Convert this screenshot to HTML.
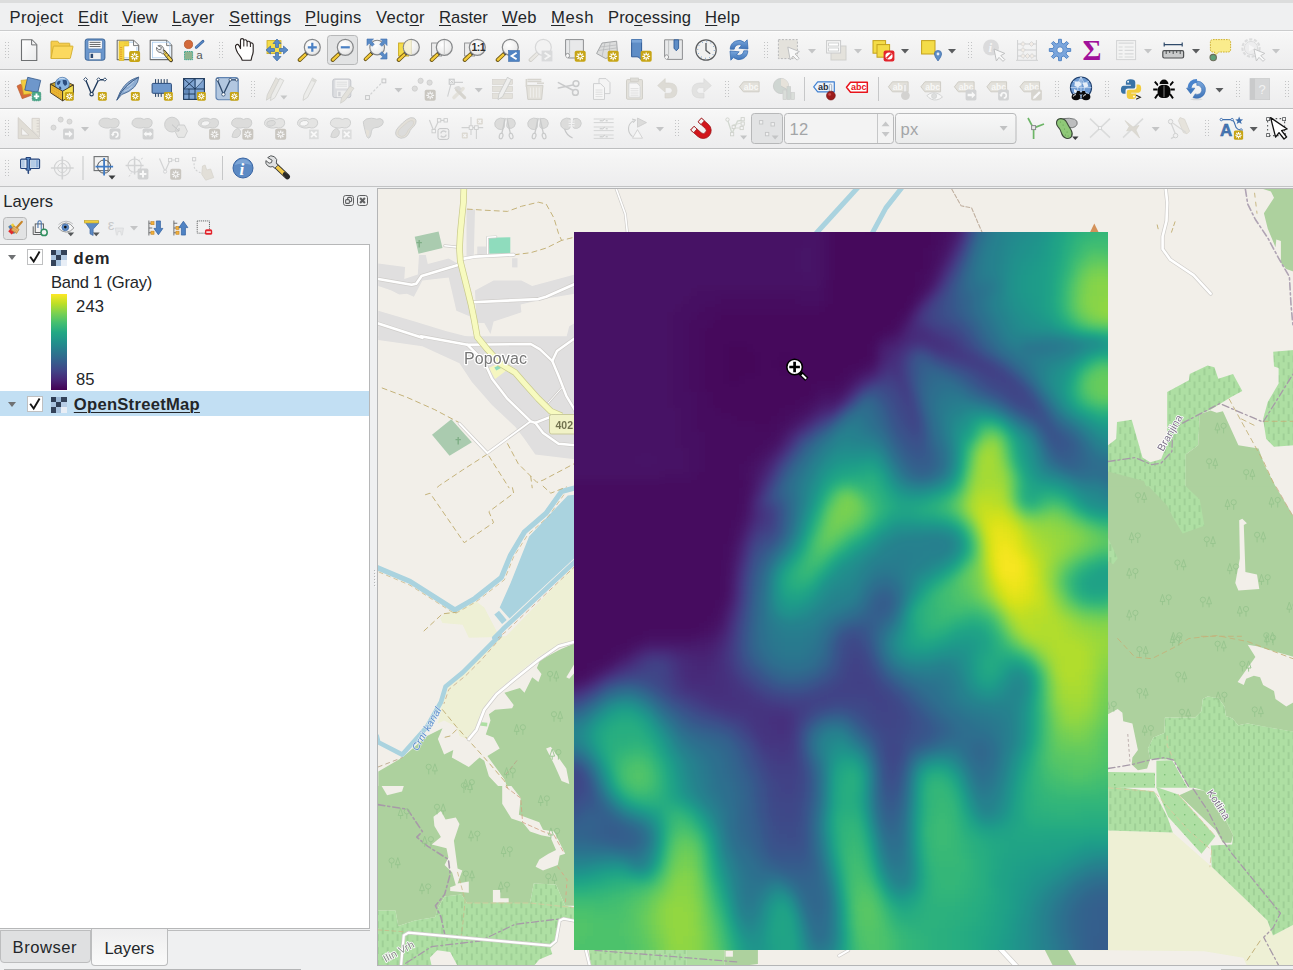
<!DOCTYPE html>
<html lang="en"><head><meta charset="utf-8"><title>QGIS</title>
<style>
*{box-sizing:border-box;margin:0;padding:0}
html,body{width:1293px;height:970px;overflow:hidden}
body{position:relative;background:#eff0f1;font-family:"Liberation Sans","DejaVu Sans",sans-serif;font-size:16.6px;color:#232629}
.abs{position:absolute}
#topstrip{position:absolute;left:0;top:0;width:1293px;height:3px;background:#dcdddd}
#menubar{position:absolute;left:0;top:3px;width:1293px;height:27px;background:#eff0f1}
#menubar span{position:absolute;top:4px;height:22px;line-height:22px;white-space:nowrap}
#menubar u{text-decoration:underline;text-underline-offset:2px;text-decoration-thickness:1px}
.tb{position:absolute;left:0;width:1293px;background:linear-gradient(#f8f8f8,#f4f4f4 30%,#ededee);border-top:1px solid #bdbebf;box-shadow:inset 0 1px 0 #fcfcfc}
#map{position:absolute;left:377px;top:188px;width:916px;height:778px;border-left:1px solid #b4b5b6;border-top:1px solid #b4b5b6;border-bottom:1px solid #b4b5b6;background:#f2efe9;overflow:hidden}
#map svg{display:block}
#tree{position:absolute;left:-1px;top:244px;width:371px;height:685px;border:1px solid #b6b7b8;background:#fff;overflow:hidden}
#tree .row{position:absolute;left:0;width:369px;height:24px}
#tree .row b,#tree .row span{position:absolute;top:4px;line-height:20px;white-space:nowrap}
#tree .row.sel{background:#c2dff3}
#tree .row.sel b{margin-top:0}#tree .row.sel .arr,#tree .row.sel .cb,#tree .row.sel .ras{margin-top:1px}
.arr{position:absolute;left:8px;top:10px;width:0;height:0;border-left:4.5px solid transparent;border-right:4.5px solid transparent;border-top:5px solid #6f7173}
.cb{position:absolute;left:27px;top:4px;width:16px;height:16px;border:1px solid #bfc0c1;background:#fff}
.cb svg{position:absolute;left:-1px;top:-1px}
.ras{position:absolute;left:51px;top:5px;width:16px;height:16px;background:
 linear-gradient(#2f3e55,#2f3e55) 0 0/5px 5px no-repeat,
 linear-gradient(#9bb8d6,#9bb8d6) 5px 0/5px 5px no-repeat,
 linear-gradient(#34435a,#34435a) 10px 0/6px 5px no-repeat,
 linear-gradient(#a9c3de,#a9c3de) 0 5px/5px 5px no-repeat,
 linear-gradient(#2f3e55,#2f3e55) 5px 5px/5px 5px no-repeat,
 linear-gradient(#b7cde5,#b7cde5) 10px 5px/6px 5px no-repeat,
 linear-gradient(#34435a,#34435a) 0 10px/5px 6px no-repeat,
 linear-gradient(#a9c3de,#a9c3de) 5px 10px/5px 6px no-repeat,
 linear-gradient(#e8eef6,#e8eef6) 10px 10px/6px 6px no-repeat}
#ramp{left:51px;top:49px;width:16px;height:96px;background:linear-gradient(#fde725,#bddf26 10%,#7ad151 20%,#44bf70 30%,#22a884 40%,#21918c 50%,#2a788e 60%,#355f8d 70%,#414487 80%,#482475 90%,#440154)}
.tab{border:1px solid #bcbdbe}
.tab span{position:absolute;line-height:20px;white-space:nowrap}

</style></head>
<body>
<div id="topstrip"></div>
<div id="menubar">
<span style="left:9.6px;letter-spacing:.3px">Pro<u>j</u>ect</span>
<span style="left:78px;letter-spacing:.4px"><u>E</u>dit</span>
<span style="left:122px;letter-spacing:0px"><u>V</u>iew</span>
<span style="left:172px;letter-spacing:.2px"><u>L</u>ayer</span>
<span style="left:229px;letter-spacing:.3px"><u>S</u>ettings</span>
<span style="left:305px;letter-spacing:.3px"><u>P</u>lugins</span>
<span style="left:376px;letter-spacing:.3px">Vect<u>o</u>r</span>
<span style="left:439px;letter-spacing:0px"><u>R</u>aster</span>
<span style="left:502px;letter-spacing:.3px"><u>W</u>eb</span>
<span style="left:551px;letter-spacing:.6px"><u>M</u>esh</span>
<span style="left:608px;letter-spacing:.1px">Pro<u>c</u>essing</span>
<span style="left:705px;letter-spacing:.3px"><u>H</u>elp</span>
</div>
<div class="tb" style="top:30px;height:39px;border-top-color:#cbcccd"></div>
<div class="tb" style="top:69px;height:39px"></div>
<div class="tb" style="top:108px;height:40px"></div>
<div class="tb" style="top:148px;height:39px;border-bottom:1px solid #c2c3c4"></div>

<svg class="abs" style="left:0;top:0" width="1293" height="250" viewBox="0 0 1293 250"><defs>
<radialGradient id="gl" cx=".4" cy=".35" r=".75"><stop offset="0" stop-color="#ffffff"/><stop offset=".7" stop-color="#ececec"/><stop offset="1" stop-color="#cfcfcf"/></radialGradient>
<linearGradient id="bl" x1="0" y1="0" x2="0" y2="1"><stop offset="0" stop-color="#7aa7dc"/><stop offset="1" stop-color="#3f74b8"/></linearGradient>
<linearGradient id="pg" x1="0" y1="0" x2="1" y2="1"><stop offset="0" stop-color="#ffffff"/><stop offset="1" stop-color="#e9eaeb"/></linearGradient>
<g id="hd" fill="#c3c4c5"><rect x="0" y="0" width="1" height="1"/><rect x="3" y="0" width="1" height="1"/><rect x="0" y="3" width="1" height="1"/><rect x="3" y="3" width="1" height="1"/><rect x="0" y="6" width="1" height="1"/><rect x="3" y="6" width="1" height="1"/><rect x="0" y="9" width="1" height="1"/><rect x="3" y="9" width="1" height="1"/><rect x="0" y="12" width="1" height="1"/><rect x="3" y="12" width="1" height="1"/><rect x="0" y="15" width="1" height="1"/><rect x="3" y="15" width="1" height="1"/></g>
<g id="star"><rect x="0" y="0" width="11" height="11" rx="1.8" fill="#c7a516"/><path d="M5.5 1.6v7.8M1.6 5.5h7.8M2.8 2.8l5.4 5.4M8.2 2.8l-5.4 5.4" stroke="#fff" stroke-width="1.3" fill="none"/><circle cx="5.5" cy="5.5" r="1.3" fill="#c7a516"/></g>
<g id="stard"><rect x="0" y="0" width="11" height="11" rx="1.8" fill="#c9c6c0"/><path d="M5.5 1.6v7.8M1.6 5.5h7.8M2.8 2.8l5.4 5.4M8.2 2.8l-5.4 5.4" stroke="#f4f4f4" stroke-width="1.3" fill="none"/><circle cx="5.5" cy="5.5" r="1.3" fill="#c9c6c0"/></g>
<g id="mag"><path d="M8.6 15.4L1.6 22" stroke="#6b5514" stroke-width="4" stroke-linecap="round"/><path d="M8.2 15.8L1.8 21.8" stroke="#f3cb3a" stroke-width="2.4" stroke-linecap="round"/><path d="M9.6 14.4l-1.6 1.6" stroke="#222" stroke-width="3.2"/><circle cx="14.3" cy="9.3" r="8" fill="url(#gl)" stroke="#858789" stroke-width="1.2"/></g>
<g id="magd" opacity=".55"><path d="M8.6 15.4L1.6 22" stroke="#b9b6ae" stroke-width="4" stroke-linecap="round"/><path d="M8.2 15.8L1.8 21.8" stroke="#e4e1d8" stroke-width="2.4" stroke-linecap="round"/><circle cx="14.3" cy="9.3" r="8" fill="#f2f2f2" stroke="#c0c1c2" stroke-width="1.2"/></g>
</defs>
<use href="#hd" x="5" y="42"/>
<g transform="translate(17 38)"><path d="M4.5 1.7h10.3l5 5v15.8h-15.3z" fill="url(#pg)" stroke="#6e7072" stroke-width="1.1" stroke-linejoin="round"/><path d="M14.6 1.9v5h5" fill="#f4f4f4" stroke="#6e7072" stroke-width="1"/></g>
<g transform="translate(50 38)"><path d="M1 20.4V3.7q0-.5 .5-.5h6q.4 0 .6 .4l.8 1.600000000000001h10.4q.5 0 .5 .5v3" fill="#f6cd4c" stroke="#d2ad2c" stroke-width=".9" stroke-linejoin="round"/><path d="M1 20.5l2.300000000000001-11.9q.1-.5 .6-.5h18.6q.6 0 .5 .6l-2.6 11.3q-.1 .5-.6 .5z" fill="#fbd95f" stroke="#d2ad2c" stroke-width=".9" stroke-linejoin="round"/></g>
<g transform="translate(83 38)"><rect x="2.2" y="1" width="19.7" height="21.2" rx="2.2" fill="#6b97cd" stroke="#3b6496" stroke-width="1"/><rect x="5.1" y="2.4" width="14.1" height="8.5" fill="#f8f8f8" stroke="#4a72a6" stroke-width=".5"/><path d="M6.6 4.4h10.9M6.6 6.5h10.9M6.6 8.5h10.9" stroke="#5a5c5e" stroke-width=".9"/><rect x="6.1" y="14.6" width="11.9" height="7" fill="#f0f0f0" stroke="#4a72a6" stroke-width=".5"/><rect x="7.6" y="15.8" width="2.5" height="4.2" fill="#2d4a72"/></g>
<g transform="translate(116 38)"><path d="M1.2 2.3h16.4l5.1 5.2v14.1h-21.5z" fill="#fff" stroke="#6e7072" stroke-width="1.1" stroke-linejoin="round"/><path d="M17.5 2.5v5.1h5.1" fill="#f4f4f4" stroke="#6e7072" stroke-width=".9"/><path d="M8 4.2h9M20.900000000000002 9v10.8H8" fill="none" stroke="#9cc3ea" stroke-width=".8"/><path d="M3 3.4h9.700000000000001v4.5h-4.800000000000001v14.5h-4.9z" fill="#f5d540" stroke="#d9b521" stroke-width=".7"/><path d="M4 9.600000000000001h2.2M4 11.8h2.2M4 14h2.2M4 16.2h2.2M4 18.4h2.2M4 20.6h2.2" stroke="#e08a2a" stroke-width=".8"/><path d="M9 4.6v1.600000000000001M10.8 4.6v1.600000000000001" stroke="#e6c23a" stroke-width=".8"/><use href="#star" x="13.1" y="13.1"/></g>
<g transform="translate(149 38)"><path d="M1.2 2.3h16.4l5.2 5.2v14.1h-21.6z" fill="#fff" stroke="#6e7072" stroke-width="1.1" stroke-linejoin="round"/><path d="M17.6 2.5v5.1h5.1" fill="#f4f4f4" stroke="#6e7072" stroke-width=".9"/><rect x="3.5" y="4.2" width="17.4" height="15.6" fill="none" stroke="#a9cbee" stroke-width=".8"/><path d="M14.6 13.600000000000001l7.4 8.6" stroke="#3a3320" stroke-width="3.8" stroke-linecap="round"/><path d="M14.8 13.8l7 8.200000000000001" stroke="#f2d04e" stroke-width="2.4" stroke-linecap="round"/><path d="M16.4 15.8l1.600000000000001-1.4M18.400000000000002 18.200000000000003l1.600000000000001-1.4" stroke="#3a3320" stroke-width=".8"/><path d="M8.4 8.200000000000001a4 4 0 0 1 6.2 4.2l1.4 1.600000000000001-2 1.8-1.4-1.4a4 4 0 0 1-5.2-4.4l2.4 2 2-.6.4-2z" fill="#e6e7e8" stroke="#77797b" stroke-width=".9" transform="rotate(8 12 11)"/></g>
<g transform="translate(182 38)"><circle cx="6.5" cy="6.4" r="4.1" fill="#d36a3b" stroke="#b3552a" stroke-width=".8"/><path d="M14.2 9.4l6.8-6.1" stroke="#2f5a94" stroke-width="2.7" stroke-linecap="round"/><path d="M14.2 9.4l6.8-6.1" stroke="#5a8bc8" stroke-width="1.5" stroke-linecap="round"/><rect x="2.5" y="13.5" width="8.1" height="8.2" fill="#8fb38f" stroke="#2fa08a" stroke-width=".9" stroke-dasharray="1.4 .8"/><text x="14.2" y="21" font-size="11.6" font-family="Liberation Sans, sans-serif" fill="#55585a">a</text></g>
<use href="#hd" x="219" y="42"/>
<g transform="translate(232 38)"><path d="M8.5 10.6V2Q8.5 .6 10.1 .6Q11.8 .6 11.8 2.2Q12.2 1.7 13.4 1.8Q15.1 2 15.1 3.6Q15.7 3.1 16.8 3.3Q18.4 3.7 18.4 5.2Q19 4.7 20 5Q21.2 5.5 21.2 6.8V13.6Q21 16 20 18.2L19.1 22.2H10.2L9.2 19.8Q7 16.6 5.8 15Q4.4 12.6 3.6 9.6Q3 7.6 4.6 6.6Q6 6 7 7.6Z" fill="#fff" stroke="#2b2524" stroke-width="1.15" stroke-linejoin="round"/><path d="M11.8 2.2v6.4M15.1 3.6v5M18.4 5.2v3.8" stroke="#2b2524" stroke-width="1.05" fill="none"/></g>
<g transform="translate(265 38)"><rect x="2" y="2.6" width="14" height="13" fill="#f4dc48" stroke="#c9a820" stroke-width=".8"/><g fill="#5a8bc6" stroke="#3c6ca8" stroke-width=".7" stroke-linejoin="round"><path d="M12 1l4 4.5h-2.5v4h-3v-4h-2.5z"/><path d="M12 23l4-4.5h-2.5v-4h-3v4h-2.5z"/><path d="M1 12l4.5-4v2.5h4v3h-4v2.5z"/><path d="M23 12l-4.5-4v2.5h-4v3h4v2.5z"/></g></g>
<g transform="translate(298 38)"><use href="#mag"/><path d="M14.3 4.8v9M9.8 9.3h9" stroke="#4a80c4" stroke-width="2.2"/></g>
<rect x="327.5" y="35.5" width="30" height="29" rx="3" fill="#e2e3e4" stroke="#b7b8b9"/>
<g transform="translate(331 38)"><use href="#mag"/><path d="M9.8 9.3h9" stroke="#4a80c4" stroke-width="2.2"/></g>
<g transform="translate(364 38)"><use href="#mag" transform="translate(0 1) scale(.92)"/><g fill="#5a8bc6" stroke="#3f6fae" stroke-width=".6"><path d="M3 1h6.5l-2.2 2.2 3 3-2.1 2.1-3-3-2.2 2.2z"/><path d="M23 1v6.5l-2.2-2.2-3 3-2.1-2.1 3-3-2.2-2.2z"/><path d="M23 21h-6.5l2.2-2.2-3-3 2.1-2.1 3 3 2.2-2.2z"/></g></g>
<g transform="translate(397 38)"><rect x="1.6" y="5" width="10" height="13" fill="#f4dc48" stroke="#c9a820" stroke-width=".9"/><use href="#mag"/><path d="M14.3 2v14.6" stroke="#d9d4b8" stroke-width="1"/><path d="M14.3 1.8a7.5 7.5 0 0 0 0 15z" fill="#f2ecc4" opacity=".7"/></g>
<g transform="translate(430 38)"><rect x="1.6" y="5" width="10" height="13" fill="#ececec" stroke="#8a8c8e" stroke-width=".9"/><use href="#mag"/><path d="M14.3 2v14.6" stroke="#c8c8c8" stroke-width="1"/></g>
<g transform="translate(463 38)"><rect x="1.6" y="5" width="10" height="13" fill="#ececec" stroke="#8a8c8e" stroke-width=".9"/><use href="#mag"/><text x="8.6" y="13.3" font-size="10.5" font-weight="700" font-family="Liberation Sans, sans-serif" fill="#2c2c2c" letter-spacing="-.6">1:1</text></g>
<g transform="translate(496 38)"><use href="#mag"/><rect x="12.6" y="12.6" width="10.8" height="10.8" fill="#4f83c2" stroke="#3a6aa8" stroke-width=".6"/><path d="M20.6 14.8l-5 3.2 5 3.2" fill="none" stroke="#fff" stroke-width="1.9"/></g>
<g transform="translate(529 38)"><use href="#magd"/><rect x="12.6" y="12.6" width="10.8" height="10.8" fill="#d9dadb"/><path d="M15.6 14.8l5 3.2-5 3.2" fill="none" stroke="#f4f4f4" stroke-width="1.9"/></g>
<g transform="translate(562 38)"><path d="M3.6 1.6h17.8v18.4h-14.4q-3.4 0-3.4-3z" fill="#e8e9ea" stroke="#8d8f91" stroke-width="1"/><path d="M3.6 17.6q0-2.2 2-2.2t2 2.2-2 2.4" fill="#f6f6f6" stroke="#8d8f91" stroke-width=".9"/><path d="M7.6 1.6v14" stroke="#b4b6b8" stroke-width=".8"/><use href="#star" x="12.7" y="12.8"/></g>
<g transform="translate(595 38)"><path d="M1.6 15.5l5.5-10.5 14.5-1.8 1 13.3-12 4z" fill="#dcdddd" stroke="#9b9d9f" stroke-width=".9"/><path d="M5 9l16-2M3.4 12.5l18.4-2.6M10 4.6l-3 14M15 4l-1 14" stroke="#b4b6b8" stroke-width=".7" fill="none"/><use href="#star" x="12.7" y="12.8"/></g>
<g transform="translate(628 38)"><path d="M3.6 1.6h10v20.4l-2.4-2.2q-1-1-2.2-1h-5.4z" fill="#5e8dc6" stroke="#2f5c98" stroke-width="1"/><path d="M3.6 1.6h10v3h-10z" fill="#7aa5d8"/><use href="#star" x="12.7" y="12.8"/></g>
<g transform="translate(661 38)"><path d="M3.6 1.8h17.8v19.6h-14.4q-3.4 0-3.4-3z" fill="#e8e9ea" stroke="#8d8f91" stroke-width="1"/><path d="M3.6 19q0-2.2 2-2.2t2 2.2-2 2.4" fill="#f6f6f6" stroke="#8d8f91" stroke-width=".9"/><path d="M7.6 1.8v15" stroke="#b4b6b8" stroke-width=".8"/><path d="M13 1.8h4.6v8.4l-2.3 2.6-2.3-2.6z" fill="#5e8dc6" stroke="#2f5c98" stroke-width=".9"/></g>
<g transform="translate(694 38)"><circle cx="12" cy="12" r="10.2" fill="#f1f1f0" stroke="#5b5d5f" stroke-width="1.2"/><circle cx="12" cy="12" r="8.3" fill="none" stroke="#5a8bc6" stroke-width="1" stroke-dasharray=".9 3.45"/><path d="M12 5v7.4l4.2 3.4" fill="none" stroke="#55585a" stroke-width="1.3"/></g>
<g transform="translate(727 38)"><path d="M3.2 11.2a8.8 8.8 0 0 1 14.4-6.8l2.6-2.6.8 9.2-9.2-.8 2.8-2.8a4.8 4.8 0 0 0-7.4 3.8z" fill="url(#bl)" stroke="#2f66ae" stroke-width=".7"/><path d="M20.8 12.8a8.8 8.8 0 0 1-14.4 6.8l-2.6 2.6-.8-9.2 9.2.8-2.8 2.8a4.8 4.8 0 0 0 7.4-3.8z" fill="url(#bl)" stroke="#2f66ae" stroke-width=".7"/></g>
<use href="#hd" x="764" y="42"/>
<g transform="translate(776.8 37)"><rect x="1.6" y="2.6" width="19" height="19" fill="#e4e2dc" stroke="#b8b9ba" stroke-width="1" stroke-dasharray="2 1.5"/><path d="M11 10l2.4 13 2.8-4 4.2 4.2 2-2-4.2-4.2 4.4-2.4z" fill="#f8f8f8" stroke="#c0c1c2" stroke-width="1"/></g>
<path d="M808 49h8l-4 4.6z" fill="#c4c5c6"/>
<g transform="translate(824 38)"><rect x="7" y="8" width="15" height="14" fill="#e4e2dc" stroke="#d0d0cd" stroke-width="1"/><rect x="2.6" y="2.6" width="14" height="12.4" fill="#f6f6f6" stroke="#c9cacb" stroke-width="1"/><rect x="4.6" y="5" width="10" height="3" fill="#fff" stroke="#c9cacb" stroke-width=".8"/><rect x="4.6" y="10" width="10" height="3" fill="#fff" stroke="#c9cacb" stroke-width=".8"/></g>
<path d="M854 49h8l-4 4.6z" fill="#c4c5c6"/>
<g transform="translate(871 38)"><rect x="2" y="2.6" width="12.6" height="12.6" fill="#f4dc48" stroke="#c4a21c" stroke-width="1"/><rect x="6" y="6.6" width="12.6" height="12.6" fill="#f4dc48" stroke="#c4a21c" stroke-width="1"/><rect x="12.6" y="12.6" width="10.8" height="10.8" rx="2" fill="#e2242c"/><circle cx="18" cy="18" r="3.6" fill="#fff"/><path d="M15.6 20.4l4.8-4.8" stroke="#e2242c" stroke-width="1.6"/></g>
<path d="M901 49h8l-4 4.6z" fill="#5a5c5e"/>
<g transform="translate(919 38)"><rect x="2.6" y="2.6" width="13.4" height="13.4" fill="#f4dc48" stroke="#c4a21c" stroke-width="1"/><path d="M19 23q-3.6-4.6-3.6-7a3.6 3.6 0 0 1 7.2 0q0 2.4-3.6 7z" fill="#5e8dc6" stroke="#3d6ca8" stroke-width=".7"/><circle cx="19" cy="16" r="1.4" fill="#e8eef6"/></g>
<path d="M948 49h8l-4 4.6z" fill="#5a5c5e"/>
<use href="#hd" x="968" y="42"/>
<g transform="translate(981 38)"><circle cx="10" cy="9.5" r="8" fill="#d4d5d6" opacity=".8"/><text x="7.6" y="14" font-size="13" font-style="italic" font-weight="700" font-family="Liberation Serif, serif" fill="#f4f4f4">i</text><path d="M13 11l2.4 12 2.6-3.6 4 4 1.8-1.8-4-4 4-2.2z" fill="#f8f8f8" stroke="#c0c1c2" stroke-width="1"/></g>
<g transform="translate(1015 38)"><g fill="none" stroke="#cfd0d1" stroke-width="1"><path d="M2.6 2v20M21.4 2v20M1 22.3h22M2.6 6h18.8M2.6 12h18.8M2.6 18h18.8"/></g><g fill="#f2ece6" stroke="#cfd0d1" stroke-width=".8"><path d="M8 3.6l2.4 2.4-2.4 2.4-2.4-2.4zM16.5 3.6l2.4 2.4-2.4 2.4-2.4-2.4zM8 9.6l2.4 2.4-2.4 2.4-2.4-2.4zM12.5 15.6l2.4 2.4-2.4 2.4-2.4-2.4zM8 15.6l2.4 2.4-2.4 2.4-2.4-2.4zM17 15.6l2.4 2.4-2.4 2.4-2.4-2.4z"/></g></g>
<g transform="translate(1048 38)"><path d="M10.5 5.0L10.6 1.3L13.4 1.3L13.5 5.0L15.9 6.0L18.6 3.4L20.6 5.4L18.0 8.1L19.0 10.5L22.7 10.6L22.7 13.4L19.0 13.5L18.0 15.9L20.6 18.6L18.6 20.6L15.9 18.0L13.5 19.0L13.4 22.7L10.6 22.7L10.5 19.0L8.1 18.0L5.4 20.6L3.4 18.6L6.0 15.9L5.0 13.5L1.3 13.4L1.3 10.6L5.0 10.5L6.0 8.1L3.4 5.4L5.4 3.4L8.1 6.0Z" fill="#7aa5dc" stroke="#4a7fc2" stroke-width=".9" stroke-linejoin="round"/><circle cx="12" cy="12" r="3.2" fill="#f4f5f6" stroke="#4a7fc2" stroke-width=".9"/></g>
<g transform="translate(1081 38)"><text x="1.6" y="22.2" font-size="29" font-family="Liberation Serif, serif" font-weight="700" fill="#a0109a">&#931;</text></g>
<g transform="translate(1114 38)"><rect x="2.6" y="2.6" width="19" height="19" fill="#f3f3f3" stroke="#d2d3d4" stroke-width="1"/><path d="M4.6 5.2h15M4.6 9h4M10.6 9h9M4.6 12.4h4M10.6 12.4h9M4.6 15.8h4M10.6 15.8h9M4.6 19h4M10.6 19h9" stroke="#d8d9da" stroke-width="1.2"/></g>
<path d="M1144 49h8l-4 4.6z" fill="#c4c5c6"/>
<g transform="translate(1161.2 38)"><path d="M3 4.6v4M21 4.6v4M3 6.6h18" stroke="#2f4a6a" stroke-width="1.2" fill="none"/><rect x="1.6" y="12.6" width="20.8" height="7.4" rx="1.4" fill="#c9cacb" stroke="#4e5052" stroke-width="1.2"/><path d="M5 12.6v3.4M8.5 12.6v2.4M12 12.6v3.4M15.5 12.6v2.4M19 12.6v3.4" stroke="#4e5052" stroke-width="1"/></g>
<path d="M1192 49h8l-4 4.6z" fill="#5a5c5e"/>
<g transform="translate(1208 38)"><path d="M5 1.6h15q2.6 0 2.6 2.6v7.2q0 2.6-2.6 2.6h-9.5l-4.2 4.4.4-4.4h-1.7q-2.6 0-2.6-2.6v-7.2q0-2.6 2.6-2.6z" fill="#faec8c" stroke="#cdb02e" stroke-width="1" stroke-dasharray="1.6 1"/><circle cx="5.2" cy="19.6" r="3.2" fill="#5fa079" stroke="#6b6d5a" stroke-width="1.1"/></g>
<g transform="translate(1241 38)"><g opacity=".55"><circle cx="10" cy="10" r="8.6" fill="none" stroke="#c9cacb" stroke-width="2.2" stroke-dasharray="3.2 1.6"/><circle cx="10" cy="10" r="6.6" fill="#e9e9ea" stroke="#c9cacb"/><path d="M8 6.6l5.4 3.4-5.4 3.4z" fill="#fafafa"/></g><path d="M13 11l2.4 12 2.6-3.6 4 4 1.8-1.8-4-4 4-2.2z" fill="#f8f8f8" stroke="#c6c7c8" stroke-width="1"/></g>
<path d="M1272 49h8l-4 4.6z" fill="#c4c5c6"/>
<use href="#hd" x="5" y="81"/>
<g transform="translate(17 77)"><path d="M0 9l3.8-1.900000000000001 10.600000000000001 11.200000000000001-9.200000000000001 3.4z" fill="#d56b3a" stroke="#b3552a" stroke-width=".6"/><path d="M4 3.4l7-.8 4 13.8-8.4 1.2z" fill="#f2cb3f" stroke="#c7a324" stroke-width=".6"/><path d="M10.700000000000001 .3l13 3.1-2.900000000000002 11.9-13-2.2z" fill="#6e97cb" stroke="#34598c" stroke-width=".8" stroke-linejoin="round"/><rect x="15.2" y="14.9" width="8.6" height="8.9" rx="1.4" fill="#4aa88a" stroke="#2a8a6a" stroke-width=".7" stroke-dasharray="1.2 .8"/><path d="M19.5 16.6v5.5M16.8 19.400000000000002h5.4" stroke="#fff" stroke-width="1.9"/></g>
<g transform="translate(50 77)"><path d="M.4 7.1l11.6-4.4 11.4 5.2-10.8 6.3z" fill="#caa22a" stroke="#3a3020" stroke-width=".8"/><circle cx="12.3" cy="7.3" r="7" fill="#8ab4e0" stroke="#4a74a8" stroke-width=".7"/><path d="M7.4 4.8q1.6-1.6 3.2-1l-.6 2.600000000000001-1.8 1.8-1.4-1.2zM12.6 3q2.600000000000001-.8 4.2 .8l.4 3.4-2.2 1.8-2-2.400000000000001zM8.8 9.4l2.2.4.4 2.400000000000001-1.8.4z" fill="#2c4d80"/><path d="M9 2q3-1.400000000000001 6 0" fill="none" stroke="#d9e8f7" stroke-width="1" opacity=".8"/><path d="M.4 7.1l12.2 7.1v9.6l-12.2-8.1z" fill="#e9b932" stroke="#3a3020" stroke-width=".9" stroke-linejoin="round"/><path d="M2.4 10.6l8.2 4.8M2.4 13.2l8.2 4.8M2.4 15.8l8.2 4.8" stroke="#e08a2a" stroke-width=".8" stroke-dasharray="1.2 1"/><path d="M12.6 14.2l10.8-6.3v9.6l-10.8 6.3z" fill="#f5e04e" stroke="#3a3020" stroke-width=".9" stroke-linejoin="round"/><use href="#star" transform="translate(14.9 14.9) scale(.81)"/></g>
<g transform="translate(83 77)"><path d="M2.6 2.7l6 14.5 7-14.5h6.300000000000001" fill="none" stroke="#1f3a5c" stroke-width="1.4" stroke-linejoin="round"/><path d="M2.6 .5l1.9 1.9-1.9 1.9-1.9-1.9z" fill="#fff" stroke="#1f3a5c" stroke-width=".9"/><path d="M15.6 .7l1.7 1.7-1.7 1.7-1.7-1.7z" fill="#fff" stroke="#1f3a5c" stroke-width=".9"/><path d="M21.900000000000002 .8l1.7 1.7-1.7 1.7-1.7-1.7z" fill="#fff" stroke="#1f3a5c" stroke-width=".9"/><circle cx="8.6" cy="17.2" r="1.7" fill="#fff" stroke="#1f3a5c" stroke-width="1.1"/><use href="#star" transform="translate(14.9 14.9) scale(.81)"/></g>
<g transform="translate(116 77)"><path d="M.8 23.2Q3.4 14.4 8.6 8.6Q14.6 2 22.7 .1Q22.5 5.2 18.4 10Q13.8 15 5.6 17.6Z" fill="#8eadd2" stroke="#4a6a94" stroke-width=".9" stroke-linejoin="round"/><path d="M.8 23.2Q5.2 13.4 11.6 8Q16.6 3.6 22.6 .2" fill="none" stroke="#35557f" stroke-width=".9"/><path d="M8 14.4q5-1.600000000000001 8.4-5.2M11 9.8q4-2 7-5.6" stroke="#c4d6ea" stroke-width=".8" fill="none"/><use href="#star" transform="translate(14.9 14.9) scale(.81)"/></g>
<g transform="translate(149 77)"><path d="M6.6 2.1v4.4M9.3 2.1v4.4M12.2 2.1v4.4M15.2 2.1v4.4M18.1 2.1v4.4M6.6 16.2v3.7M9.3 16.2v3.7M12.2 16.2v3.7" stroke="#1f3a5c" stroke-width="1"/><rect x="3.1" y="6.4" width="19.3" height="9.9" rx="1" fill="#6e97cb" stroke="#2a4a7a" stroke-width="1"/><use href="#star" transform="translate(14.9 14.9) scale(.81)"/></g>
<g transform="translate(182 77)"><rect x="1.6" y="1.6" width="20.8" height="20.8" fill="#7ea3d1" stroke="#1f3a5c" stroke-width="1.1"/><path d="M1.6 12h20.8M13 1.6v20.8M1.6 1.6l11.4 10.4M13 1.6l-11.4 10.4M13 12l9.4-10.4M7 12v10.4M1.6 17h11.4" stroke="#1f3a5c" stroke-width="1" fill="none"/><path d="M14 2.6l7.4 0-7.4 8.2z" fill="#a9c4e4"/><path d="M2.6 13h3.6v3.2h-3.6z" fill="#5f86b8"/><use href="#star" transform="translate(14.9 14.9) scale(.81)"/></g>
<g transform="translate(215 77)"><rect x="1" y=".6" width="22.2" height="22.1" rx="2.6" fill="#b2c7e0" stroke="#5f82b0" stroke-width="1.1"/><path d="M2.4 2.9l6 14.4 6.9-14.4h6.4" fill="none" stroke="#2f4a6c" stroke-width="1.3" stroke-linejoin="round"/><g fill="#fff" stroke="#2f4a6c" stroke-width=".8"><circle cx="2.600000000000001" cy="2.7" r="1.3"/><circle cx="15.3" cy="2.7" r="1.3"/><circle cx="21.6" cy="2.8" r="1.3"/><circle cx="8.4" cy="17.4" r="1.7"/></g><use href="#star" transform="translate(14.9 14.9) scale(.81)"/></g>
<use href="#hd" x="251" y="81"/>
<g transform="translate(265 77)"><path d="M11.4 1.4l3.4 1.6-8.8 17.2-4.6 3 .9-5.4 8.7-17.2z" fill="#e3e1db" stroke="#cfcfcc" stroke-width=".8" stroke-linejoin="round"/><path d="M15.4 1.8l3.4 1.6-8.8 17.2-4.6 3 .9-5.4 8.7-17.2z" fill="#ececea" stroke="#cfcfcc" stroke-width=".8" stroke-linejoin="round"/><path d="M15.4 18.6h7l-3.5 4z" fill="#c6c7c8"/></g>
<g transform="translate(298 77)"><path d="M15 1.6l3.4 1.6-8.8 17.2-4.6 3 .9-5.4 8.7-17.2z" fill="#ececea" stroke="#cfcfcc" stroke-width=".8" stroke-linejoin="round"/><path d="M15 1.6l3.4 1.6-1.2 2.4-3.4-1.6z" fill="#dcdcd8"/></g>
<g transform="translate(331 77)"><rect x="1.8" y="2" width="18" height="18.6" rx="2" fill="#dcdde0" stroke="#c4c6cb" stroke-width="1"/><rect x="4.4" y="3" width="12.8" height="8.4" fill="#f3f3f3"/><path d="M5.6 5.2h10.4M5.6 7.2h10.4M5.6 9.2h10.4" stroke="#dadbdc" stroke-width=".9"/><rect x="6" y="13.6" width="9.6" height="6.6" fill="#eeeeee"/><rect x="7.2" y="14.8" width="2.4" height="4.4" fill="#cfd0d4"/><path d="M19.6 9.6l3.4 1.6-8.8 12-4.6 3 .9-5.4 8.7-12z" fill="#e3e1db" stroke="#cfcfcc" stroke-width=".8" stroke-linejoin="round"/></g>
<g transform="translate(364 77)"><path d="M3.6 20.4L19.4 4" stroke="#d0d1d2" stroke-width="1.2" stroke-dasharray="2.4 1.8" fill="none"/><rect x="1.6" y="18.6" width="3.8" height="3.8" fill="#f2f2f2" stroke="#c6c7c8"/><rect x="18" y="2" width="3.8" height="3.8" fill="#f2f2f2" stroke="#c6c7c8"/></g>
<path d="M394.5 88h8l-4 4.6z" fill="#c4c5c6"/>
<g transform="translate(412 77)"><g fill="#dcdcdb" stroke="#cbcccb" stroke-width=".8"><circle cx="8.6" cy="3.8" r="2.6"/><circle cx="2.8" cy="11.6" r="2.6"/><circle cx="17.6" cy="5.6" r="2.6"/></g><use href="#stard" x="12.7" y="12.8"/></g>
<g transform="translate(445 77)"><path d="M2.6 19.6L6.4 5.4h11.6" fill="none" stroke="#cfd0d1" stroke-width="1.1"/><rect x="4.2" y="2.2" width="5" height="5" fill="#f4f4f4" stroke="#c4c5c6" stroke-width="1"/><path d="M5.4 3.4l2.6 2.6M8 3.4l-2.6 2.6" stroke="#c4c5c6" stroke-width=".9"/><path d="M9 20.6l9-9" stroke="#e3e1db" stroke-width="3.6" stroke-linecap="round"/><path d="M19.6 20.6l-8-8" stroke="#d6d4ce" stroke-width="3.2" stroke-linecap="round"/><path d="M8.6 11.6q2-3.2 5.4-2.6l2.8 2.8-2.6 2.6-2.4-2.2z" fill="#d9d9d8"/></g>
<path d="M474.7 88h8l-4 4.6z" fill="#c4c5c6"/>
<g transform="translate(491 77)"><g fill="#e3e1db" stroke="#d2d0ca" stroke-width=".6"><rect x="1.6" y="2.4" width="20" height="5"/><rect x="1.6" y="9.5" width="20" height="5"/><rect x="1.6" y="16.6" width="20" height="5"/></g><path d="M17 0.8l3.4 1.6-8.8 17.2-4.6 3 .9-5.4 8.7-17.2z" fill="#efefee" stroke="#c8c9c8" stroke-width=".8" stroke-linejoin="round"/></g>
<g transform="translate(523 77)"><path d="M4.4 2.4h14M4.4 4.4h14" stroke="#d6d4ce" stroke-width="1.5"/><path d="M14 6.2h7" stroke="#d6d4ce" stroke-width="1.4"/><path d="M3.4 8.4h16.6l-1.4 14h-13.8z" fill="#e3e1db" stroke="#d2d0ca" stroke-width="1"/><path d="M7.4 10.6v10M10.4 10.6v10M13.4 10.6v10M16.2 10.6v10" stroke="#f0efec" stroke-width="1"/><rect x="2.6" y="2" width="1.6" height="8" fill="#d6d4ce"/></g>
<g transform="translate(557 77)"><path d="M1.4 5.6l14 7.4M1.4 11l14.6-3" stroke="#c9cacb" stroke-width="1.6" stroke-linecap="round" fill="none"/><circle cx="19" cy="6.6" r="2.9" fill="none" stroke="#c9cacb" stroke-width="1.5"/><circle cx="18.4" cy="15.4" r="2.9" fill="none" stroke="#c9cacb" stroke-width="1.5"/></g>
<g transform="translate(589.5 77)"><path d="M9.5 1.6h7l4 4v11h-11z" fill="#f4f4f4" stroke="#cfd0d1" stroke-width="1"/><path d="M4 6.6h7l4 4v11.8h-11z" fill="#f6f6f6" stroke="#cfd0d1" stroke-width="1"/><path d="M6 13h7M6 15.2h7M6 17.4h7M6 19.6h7" stroke="#dcdddd" stroke-width=".9"/></g>
<g transform="translate(622.5 77)"><rect x="4" y="2.6" width="16" height="19.6" rx="1" fill="#e3e1db" stroke="#d0cfc9" stroke-width="1"/><rect x="8" y="1" width="8" height="3.6" fill="#dddcd7" stroke="#cfcec8" stroke-width=".7"/><path d="M6.4 6h8l3.2 3.2v11h-11.2z" fill="#f6f6f6" stroke="#d2d3d4" stroke-width=".8"/><path d="M8 11.6h8M8 13.8h8M8 16h8M8 18.2h8" stroke="#dcdddd" stroke-width=".9"/></g>
<g transform="translate(656 77)"><path d="M1.6 8.6l7.6-7v4.4h3.8q8 0 8 7.6 0 7.4-8 7.4h-4v-4.6h4.2q3 0 3-2.8 0-3-3-3h-4v4.6z" fill="#dddbd5" stroke="#d3d1cb" stroke-width=".6"/></g>
<g transform="translate(689 77)"><path d="M22.4 8.6l-7.6-7v4.4h-3.8q-8 0-8 7.6 0 7.4 8 7.4h4v-4.6h-4.2q-3 0-3-2.8 0-3 3-3h4v4.6z" fill="#e2e2e1" stroke="#d6d7d7" stroke-width=".6"/></g>
<use href="#hd" x="725" y="81"/>
<g transform="translate(737 77)"><g transform="translate(1.6 2.6)"><path d="M.8 7.2l4-5h15.7 v10h-15.7z" fill="#e3e1db" stroke="#cfcdc6" stroke-width="1" stroke-linejoin="round"/><text x="5.2" y="10.2" font-size="8.6" font-weight="700" font-family="Liberation Sans, sans-serif" fill="#f8f8f6">abc</text></g></g>
<g transform="translate(772 77)"><circle cx="9" cy="9" r="7.6" fill="#cfd6d2" stroke="#c7c9c8" stroke-width=".8"/><path d="M9 9V1.4a7.6 7.6 0 0 1 6.6 11.4z" fill="#e6e2da"/><path d="M9 9l6.6 3.8" stroke="#c7c9c8" stroke-width=".8"/><rect x="11" y="13" width="3.6" height="9.6" fill="#d9ddd9" stroke="#c9cbc9" stroke-width=".6"/><rect x="15" y="9.6" width="3.6" height="13" fill="#cfd6d2" stroke="#c9cbc9" stroke-width=".6"/><rect x="19" y="15.6" width="3.4" height="7" fill="#d9ddd9" stroke="#c9cbc9" stroke-width=".6"/></g>
<rect x="804" y="77" width="1" height="24" fill="#c6c7c8"/>
<g transform="translate(812.5 77)"><g transform="translate(.4 2.6)"><path d="M.8 7.2l4-5h16.6 v10h-16.6z" fill="#eef4fb" stroke="#3f7fd0" stroke-width="1.2" stroke-linejoin="round"/><text x="5" y="10.2" font-size="9" font-weight="700" font-family="Liberation Sans, sans-serif" fill="#1c2c40">ab</text></g><path d="M16.8 8.6q0-1.4 1.2-1.4t1.2 1.4v7h-2.4z" fill="#f4f6f8" stroke="#7f8fa6" stroke-width=".7"/><circle cx="18.4" cy="18.6" r="4.4" fill="#9c1c1c" stroke="#6e1010" stroke-width=".6"/><circle cx="17.2" cy="17.4" r="1.4" fill="#c84a4a"/></g>
<g transform="translate(844.5 77)"><g transform="translate(1.2 3)"><path d="M.8 7.2l4-5h16.8 v10h-16.8z" fill="#ffffff" stroke="#e8141c" stroke-width="1.5" stroke-linejoin="round"/><text x="5.2" y="10.2" font-size="9" font-weight="700" font-family="Liberation Sans, sans-serif" fill="#e8141c">abc</text></g></g>
<rect x="878" y="77" width="1" height="24" fill="#c6c7c8"/>
<g transform="translate(887 77)"><g transform="translate(.6 2.6)"><path d="M.8 7.2l4-5h15.7 v10h-15.7z" fill="#e3e1db" stroke="#cfcdc6" stroke-width="1" stroke-linejoin="round"/><text x="5.2" y="10.2" font-size="8.6" font-weight="700" font-family="Liberation Sans, sans-serif" fill="#f8f8f6">ab</text></g><path d="M16.8 8.6q0-1.4 1.2-1.4t1.2 1.4v7h-2.4z" fill="#f4f4f4" stroke="#d0d0d0" stroke-width=".7"/><circle cx="18.4" cy="18.6" r="4.4" fill="#d3d2d0"/></g>
<g transform="translate(919.5 77)"><g transform="translate(.6 2.6)"><path d="M.8 7.2l4-5h15.7 v10h-15.7z" fill="#e3e1db" stroke="#cfcdc6" stroke-width="1" stroke-linejoin="round"/><text x="5.2" y="10.2" font-size="8.6" font-weight="700" font-family="Liberation Sans, sans-serif" fill="#f8f8f6">abc</text></g><path d="M7.4 18.6q5.6-5 11.6-1.6 2.2 1.2 4 3-5.6 4.6-11.2 2.2-2.6-1.2-4.4-3.6z" fill="#f6f6f6" stroke="#cfd0d0" stroke-width=".9"/><circle cx="14.6" cy="19" r="2.6" fill="#dddedd" stroke="#cfd0d0" stroke-width=".6"/></g>
<g transform="translate(953 77)"><g transform="translate(.6 2.6)"><path d="M.8 7.2l4-5h15.7 v10h-15.7z" fill="#e3e1db" stroke="#cfcdc6" stroke-width="1" stroke-linejoin="round"/><text x="5.2" y="10.2" font-size="8.6" font-weight="700" font-family="Liberation Sans, sans-serif" fill="#f8f8f6">abc</text></g><rect x="12.6" y="12.6" width="10.8" height="10.8" rx="1.6" fill="#d2d3d4"/><path d="M14.6 16.8h4.2v-2.4l3.6 3.6-3.6 3.6v-2.4h-4.2z" fill="#f8f8f8"/></g>
<g transform="translate(985.5 77)"><g transform="translate(.6 2.6)"><path d="M.8 7.2l4-5h15.7 v10h-15.7z" fill="#e3e1db" stroke="#cfcdc6" stroke-width="1" stroke-linejoin="round"/><text x="5.2" y="10.2" font-size="8.6" font-weight="700" font-family="Liberation Sans, sans-serif" fill="#f8f8f6">abc</text></g><rect x="12.6" y="12.6" width="10.8" height="10.8" rx="1.6" fill="#d2d3d4"/><path d="M15.6 18.4a2.6 2.6 0 1 1 2.6 2.6" fill="none" stroke="#f8f8f8" stroke-width="1.6"/><path d="M13.8 17.6h3.6l-1.8 2.6z" fill="#f8f8f8"/></g>
<g transform="translate(1018.5 77)"><g transform="translate(.6 2.6)"><path d="M.8 7.2l4-5h15.7 v10h-15.7z" fill="#e3e1db" stroke="#cfcdc6" stroke-width="1" stroke-linejoin="round"/><text x="5.2" y="10.2" font-size="8.6" font-weight="700" font-family="Liberation Sans, sans-serif" fill="#f8f8f6">abc</text></g><rect x="12.6" y="12.6" width="10.8" height="10.8" rx="1.6" fill="#d6d4ce"/><path d="M20.6 14.2l1.6 1.6-5.4 5.4-2.4.8.8-2.4z" fill="#f8f8f8"/></g>
<use href="#hd" x="1055" y="81"/>
<g transform="translate(1069 77)"><circle cx="12" cy="10.6" r="10.6" fill="#6f9bd2" stroke="#1f3f6c" stroke-width="1.1"/><path d="M1.6 10.6h20.8M12 0v21M4 4.4q8 3.6 16 0M4 16.6q8-3.6 16 0M12 0q-7 10.6 0 21M12 0q7 10.6 0 21" fill="none" stroke="#c9dbf0" stroke-width=".8"/><path d="M6 4.4h4.6l2 3.4-3.6 2.8-3.6-1.8zM13.6 6l4.6-.4 1.2 3.8-4 1.4zM5 12l3 1.6-.6 3-2.4-1.6z" fill="#e6eef8"/><path d="M6.6 17.6l1.6-3.6h2.4l.8 1.6h1.200000000000001l.8-1.6h2.4l1.6 3.6z" fill="#0a0a0a"/><ellipse cx="7" cy="19.8" rx="4.4" ry="3.4" fill="#0a0a0a"/><ellipse cx="17" cy="19.8" rx="4.4" ry="3.4" fill="#0a0a0a"/><path d="M4.4 19.6a2.6 2 0 0 1 2.6-2M14.4 19.6a2.6 2 0 0 1 2.6-2" stroke="#fff" stroke-width=".9" fill="none"/></g>
<use href="#hd" x="1105" y="81"/>
<g transform="translate(1119 77)"><g transform="translate(1 1.1) scale(.92)"><path d="M11.6 1.2q-5.2 0-5.2 3.2v2.8h5.4v1h-7.8q-3 0-3 4.4t3 4.4h2v-3q0-2.6 2.8-2.6h5.4q2.4 0 2.4-2.4v-4.6q0-3.2-5-3.2z" fill="#3872a6"/><circle cx="8.8" cy="4" r="1" fill="#fff"/><path d="M12.4 22.8q5.2 0 5.2-3.2v-2.8h-5.4v-1h7.8q3 0 3-4.4t-3-4.4h-2v3q0 2.6-2.8 2.6h-5.4q-2.4 0-2.4 2.4v4.6q0 3.2 5 3.2z" fill="#f1cc3d"/><circle cx="15.2" cy="20" r="1" fill="#fff"/><path d="M17.6 18.6l4.6 2.2-4.6 2.2" fill="none" stroke="#1c1c1c" stroke-width="1.1"/></g></g>
<g transform="translate(1152 77)"><path d="M6 8.4L2.8 4.6M18 8.4l3.200000000000001-3.800000000000001M5.6 12.5H1.2M18.4 12.5h4.4M6 17l-3 4.4M18 17l3 4.4" stroke="#050505" stroke-width="1.9" fill="none"/><path d="M7.5 7.2a4.5 4.700000000000001 0 0 1 9 0z" fill="#050505"/><rect x="5.6" y="7.8" width="12.8" height="13.2" rx="5.2" fill="#050505"/><path d="M12 8.6v11.6" stroke="#8a8a8a" stroke-width=".9"/><path d="M6 7.5h12" stroke="#f4f4f4" stroke-width=".7"/></g>
<g transform="translate(1184 77)"><g transform="translate(2 2.8) scale(.87)"><path d="M12.4 1.4a10 10 0 1 1-4.4 19l2.6-4.2a5.2 5.2 0 1 0 1.8-9.8z" fill="url(#bl)" stroke="#2f66ae" stroke-width=".6"/><path d="M12.6 1.4q-7.6 0-8.6 8" fill="none" stroke="#4a84cc" stroke-width="4.6"/><path d="M.6 9.6h9.6l-4.8 6.4z" fill="#3f79c0" stroke="#2f66ae" stroke-width=".6"/><ellipse cx="12" cy="22.4" rx="7" ry="1" fill="#c8c9ca" opacity=".6"/></g></g>
<path d="M1215.5 88h8l-4 4.6z" fill="#5a5c5e"/>
<use href="#hd" x="1236" y="81"/>
<g transform="translate(1248 77)"><rect x="2" y="1.6" width="19.6" height="21" fill="#d6d7d8" stroke="#cbcccd" stroke-width=".8"/><rect x="2" y="1.6" width="5" height="21" fill="#c9cacb"/><text x="10.6" y="16.6" font-size="13" font-family="Liberation Sans, sans-serif" fill="#f2f2f2">?</text></g>
<use href="#hd" x="1285" y="81"/>
<use href="#hd" x="5" y="120"/>
<g transform="translate(17 116)"><path d="M1.2 1.6l21.6 21h-21.6z" fill="#e0ddd6" stroke="#d0cdc6" stroke-width=".8"/><path d="M4.6 12l7.4 7.2h-7.4z" fill="#f4f4f3" stroke="#d0cdc6" stroke-width=".8"/><path d="M15 2.4h7.4v18.6l-7.4-7.2z" fill="#eae7e0" stroke="#d0cdc6" stroke-width=".8"/><path d="M19.6 4.6h2.6M19.6 7.4h2.6M19.6 10.2h2.6M19.6 13h2.6M19.6 15.8h2.6" stroke="#d0cdc6" stroke-width=".8"/></g>
<g transform="translate(50.5 116)"><g fill="#dcdcdb" stroke="#cbcccc" stroke-width=".8"><circle cx="10.2" cy="3.6" r="2.5"/><circle cx="3" cy="11.6" r="2.5"/><circle cx="19" cy="5.6" r="2.5"/></g><rect x="12.6" y="12.6" width="10.8" height="10.8" rx="1.6" fill="#d1d2d3"/><path d="M14.4 16.8h4v-2.4l3.8 3.6-3.8 3.6v-2.4h-4z" fill="#f8f8f8"/></g>
<path d="M81 127h8l-4 4.6z" fill="#c4c5c6"/>
<g transform="translate(97 116)"><path d="M2 7.6q0-4.6 5-5.4 4-.6 7 1.2 2.6-1.6 5.6-.6 3 1 2.6 4.6-.4 3.4-4 4.4-2.4.6-4.6-.4-2 1-5 .6-3.6-.6-5.6-2.4-1-.8-1-2z" fill="#dcdcdb" stroke="#cbcccc" stroke-width=".9"/><rect x="12.6" y="12.6" width="10.8" height="10.8" rx="1.6" fill="#d1d2d3"/><path d="M15.8 18.6a2.6 2.6 0 1 1 2.6 2.6" fill="none" stroke="#f8f8f8" stroke-width="1.6"/><path d="M14 18h3.6l-1.8 2.6z" fill="#f8f8f8"/></g>
<g transform="translate(130 116)"><path d="M2 7.6q0-4.6 5-5.4 4-.6 7 1.2 2.6-1.6 5.6-.6 3 1 2.6 4.6-.4 3.4-4 4.4-2.4.6-4.6-.4-2 1-5 .6-3.6-.6-5.6-2.4-1-.8-1-2z" fill="#dcdcdb" stroke="#cbcccc" stroke-width=".9"/><rect x="12.6" y="12.6" width="10.8" height="10.8" rx="1.6" fill="#d1d2d3"/><path d="M13.6 18l2.8-2.8v1.6h3.2v-1.6l2.8 2.8-2.8 2.8v-1.6h-3.2v1.6z" fill="#f8f8f8"/></g>
<g transform="translate(163.4 116)"><circle cx="8.6" cy="8.6" r="7.4" fill="#dcdcdb" stroke="#cbcccc" stroke-width=".9"/><path d="M14.6 9l6.4 0 3 6.2-3 6.2h-6.4l-3-6.2z" fill="#e6e6e5" stroke="#cbcccc" stroke-width=".9"/><path d="M8.6 8.6l7 6.4M15.6 15v-3M15.6 15h-3" stroke="#c4c5c6" stroke-width="1" fill="none"/></g>
<g transform="translate(196.4 116)"><path d="M2 7.6q0-4.6 5-5.4 4-.6 7 1.2 2.6-1.6 5.6-.6 3 1 2.6 4.6-.4 3.4-4 4.4-2.4.6-4.6-.4-2 1-5 .6-3.6-.6-5.6-2.4-1-.8-1-2z" fill="#dcdcdb" stroke="#cbcccc" stroke-width=".9"/><ellipse cx="9" cy="7.4" rx="4.4" ry="2.6" fill="#f4f4f4" stroke="#cbcccc" stroke-width=".8" transform="rotate(-12 9 7.4)"/><use href="#stard" x="12.7" y="12.8"/></g>
<g transform="translate(229.6 116)"><path d="M2 7.6q0-4.6 5-5.4 4-.6 7 1.2 2.6-1.6 5.6-.6 3 1 2.6 4.6-.4 3.4-4 4.4-2.4.6-4.6-.4-2 1-5 .6-3.6-.6-5.6-2.4-1-.8-1-2z" fill="#dcdcdb" stroke="#cbcccc" stroke-width=".9"/><path d="M2.4 21q1-7 5.6-8.6 4 1.6 2.6 6-2 4.6-8.2 2.6z" fill="#dcdcdb" stroke="#cbcccc" stroke-width=".9"/><use href="#stard" x="12.7" y="12.8"/></g>
<g transform="translate(262.5 116)"><path d="M2 7.6q0-4.6 5-5.4 4-.6 7 1.2 2.6-1.6 5.6-.6 3 1 2.6 4.6-.4 3.4-4 4.4-2.4.6-4.6-.4-2 1-5 .6-3.6-.6-5.6-2.4-1-.8-1-2z" fill="#e4e4e3" stroke="#cbcccc" stroke-width=".9"/><ellipse cx="8.6" cy="7.2" rx="4.4" ry="2.8" fill="#dcdcdb" stroke="#cbcccc" stroke-width=".8" transform="rotate(-12 9 7.4)"/><use href="#stard" x="12.7" y="12.8"/></g>
<g transform="translate(295.5 116)"><path d="M2 7.6q0-4.6 5-5.4 4-.6 7 1.2 2.6-1.6 5.6-.6 3 1 2.6 4.6-.4 3.4-4 4.4-2.4.6-4.6-.4-2 1-5 .6-3.6-.6-5.6-2.4-1-.8-1-2z" fill="#e4e4e3" stroke="#cbcccc" stroke-width=".9"/><ellipse cx="8.6" cy="7.2" rx="4.4" ry="2.8" fill="#f6f6f6" stroke="#cbcccc" stroke-width=".8" transform="rotate(-12 9 7.4)"/><rect x="13.6" y="13.6" width="9.6" height="9.6" fill="#dcdddd"/><path d="M15.6 15.6l5.6 5.6M21.2 15.6l-5.6 5.6" stroke="#f8f8f8" stroke-width="1.8"/></g>
<g transform="translate(328.4 116)"><path d="M2 7.6q0-4.6 5-5.4 4-.6 7 1.2 2.6-1.6 5.6-.6 3 1 2.6 4.6-.4 3.4-4 4.4-2.4.6-4.6-.4-2 1-5 .6-3.6-.6-5.6-2.4-1-.8-1-2z" fill="#e4e4e3" stroke="#cbcccc" stroke-width=".9"/><path d="M2.4 21q1-7 5.6-8.6 4 1.6 2.6 6-2 4.6-8.2 2.6z" fill="#dcdcdb" stroke="#cbcccc" stroke-width=".9"/><rect x="13.6" y="13.6" width="9.6" height="9.6" fill="#dcdddd"/><path d="M15.6 15.6l5.6 5.6M21.2 15.6l-5.6 5.6" stroke="#f8f8f8" stroke-width="1.8"/></g>
<g transform="translate(360.7 116)"><path d="M2.6 5.6q2.4-3.6 8-3.4 3 .2 5.4 1 3.6-1.6 6 .8 1.6 2.4-.8 5.2-3 2.6-7.4 2.6-2.6.2-3 3.4-.4 4-1.6 6-1.6 2-2.8-.2-1.6-4-2.4-8-1.4-4.8-1.4-7.4z" fill="#dcdcdb" stroke="#cbcccc" stroke-width=".9"/><path d="M4.6 13q1.6 1.6 4 1.4-.2 4-1.2 6.2-1 .6-1.4-.8z" fill="#e4e0d8"/></g>
<g transform="translate(393.6 116)"><path d="M2 17q0-3 3-6 4-4.4 8-7.4 4-3 7.4-1.6 3 1.6 1.6 5.6-1.2 2.6-4 5-1.6 1.6-2.6 4.4-1.2 3-4.4 4.6-4 1.6-7-.6-2-1.6-2-4z" fill="#e2dfd8" stroke="#cbcccc" stroke-width=".9"/><path d="M4.4 17q0-2.4 2.6-4.6 3.6-3.6 7-6.2 3-2.2 5.2-1.4 1.4 1 .6 3.2-1 2-3.4 4.2-2 1.6-3 4.4-1 2.4-3.2 3.4-2.6 1-4.4-.4-1.4-1-1.4-2.6z" fill="#dcdcdb" stroke="#d4d1ca" stroke-width=".7"/></g>
<g transform="translate(427.4 116)"><path d="M2 4l4.4 11 5-10.6h6" fill="none" stroke="#d0d1d1" stroke-width="1.2"/><rect x="10" y="2.6" width="3.4" height="3.4" fill="#f4f4f4" stroke="#cbcccc" stroke-width=".9"/><rect x="16.6" y="2.6" width="3.4" height="3.4" fill="#f4f4f4" stroke="#cbcccc" stroke-width=".9"/><rect x="4.6" y="13.4" width="3.4" height="3.4" fill="#f4f4f4" stroke="#cbcccc" stroke-width=".9"/><rect x="10.6" y="12.6" width="10.8" height="10.8" rx="2" fill="#f0f0f0" stroke="#c4c5c6" stroke-width="1"/><path d="M13.4 17.4a3 3 0 0 1 5.4-1.2M18.8 18.6a3 3 0 0 1-5.4 1.2" fill="none" stroke="#cfd0d1" stroke-width="1.5"/></g>
<g transform="translate(460 116)"><path d="M11 1v18M16.4 11v12M1.6 11.6h21.6" stroke="#d0d1d1" stroke-width="1.1" fill="none"/><rect x="9.2" y="9.8" width="3.6" height="3.6" fill="#f4f4f4" stroke="#cbcccc" stroke-width=".9"/><rect x="14.6" y="9.8" width="3.6" height="3.6" fill="#f4f4f4" stroke="#cbcccc" stroke-width=".9"/><rect x="16.8" y="2.4" width="6" height="6" rx="1" fill="#dcd9d2"/><rect x="1.8" y="16.6" width="6" height="6" rx="1" fill="#dcd9d2"/><path d="M18.4 4l2.8 2.8M21.2 4l-2.8 2.8M3.4 18.2l2.8 2.8M6.2 18.2l-2.8 2.8" stroke="#f6f6f6" stroke-width="1.1"/></g>
<g transform="translate(492.7 116)"><path d="M11.6 2.6q-4-1.6-7.6 1-3 3-1.6 6.6 2 3.6 6.2 3.4 2.6-.4 3-2.6z" fill="#dcdcdb" stroke="#cbcccc" stroke-width=".9"/><path d="M15 2.6q4-1.2 6.6 1.6 2.2 3.2 0 6.4-2.6 2.6-6 1.6-1.6-.6-1.6-2.6z" fill="#dcdcdb" stroke="#cbcccc" stroke-width=".9"/><path d="M12.6 2l-3.6 16M14.2 2l3.6 16" stroke="#c9caca" stroke-width="1.3" fill="none"/><ellipse cx="8.4" cy="20" rx="1.8" ry="2.8" fill="none" stroke="#c9caca" stroke-width="1.2" transform="rotate(15 8.4 20)"/><ellipse cx="18.4" cy="20" rx="1.8" ry="2.8" fill="none" stroke="#c9caca" stroke-width="1.2" transform="rotate(-15 18.4 20)"/></g>
<g transform="translate(525.7 116)"><path d="M11.6 2.6q-4-1.6-7.6 1-3 3-1.6 6.6 2 3.6 6.2 3.4 2.6-.4 3-2.6z" fill="#dcdcdb" stroke="#cbcccc" stroke-width=".9"/><path d="M15 2.6q4-1.2 6.6 1.6 2.2 3.2 0 6.4-2.6 2.6-6 1.6-1.6-.6-1.6-2.6z" fill="#dcdcdb" stroke="#cbcccc" stroke-width=".9"/><path d="M12.6 2l-3.6 16M14.2 2l3.6 16" stroke="#c9caca" stroke-width="1.3" fill="none"/><ellipse cx="8.4" cy="20" rx="1.8" ry="2.8" fill="none" stroke="#c9caca" stroke-width="1.2" transform="rotate(15 8.4 20)"/><ellipse cx="18.4" cy="20" rx="1.8" ry="2.8" fill="none" stroke="#c9caca" stroke-width="1.2" transform="rotate(-15 18.4 20)"/></g>
<g transform="translate(558.6 116)"><path d="M11.6 2.6q-4-1.6-7.6 1-3 3-1.6 6.6 2 3.6 6.2 3.4 2.6-.4 3-2.6z" fill="#dcdcdb" stroke="#cbcccc" stroke-width=".9"/><path d="M15 2.6q4-1.2 6.6 1.6 2.2 3.2 0 6.4-2.6 2.6-6 1.6-1.6-.6-1.6-2.6z" fill="#dcdcdb" stroke="#cbcccc" stroke-width=".9"/><path d="M10 5h6M10 7.4h6M10 9.8h6" stroke="#f2f2f2" stroke-width="1.2"/><path d="M6 13q1.6 6 8 9" fill="none" stroke="#c4c5c6" stroke-width="1.1"/></g>
<g transform="translate(591.7 116)"><path d="M2 3h20M2 6.6h20M2 11h20M2 14.6h20M2 19h20M2 22.4h20" stroke="#d4d5d5" stroke-width="1" fill="none"/><path d="M8 4.8h3l2-1.6M16 4.8h-2M8 12.8h3l2-1.6M16 12.8h-2M8 20.8h3l2-1.6M16 20.8h-2" stroke="#c4c5c5" stroke-width="1" fill="none"/></g>
<g transform="translate(624.5 116)"><path d="M9 4.6q-5 3-5 8t4 8" fill="none" stroke="#c9caca" stroke-width="1.1"/><path d="M7.6 3l3.4 1-2.4 2.6" fill="none" stroke="#c9caca" stroke-width="1.1"/><path d="M13 2l9 4.6-9 4.6z" fill="#dcdcdb" stroke="#cbcccc" stroke-width=".8"/><path d="M13 13.6l5 8.6h-10z" fill="#f6f6f6" stroke="#cbcccc" stroke-width=".8"/></g>
<path d="M656 127h8l-4 4.6z" fill="#c4c5c6"/>
<use href="#hd" x="675" y="120"/>
<g transform="translate(691.2 118.5)"><g transform="rotate(-48 12 12)"><path d="M4 2.4h5v9.6a3 3 0 0 0 6 0v-9.6h5v9.6a8 8 0 0 1-16 0z" fill="#d2161c" stroke="#9c0e12" stroke-width=".7"/><rect x="4" y="2.4" width="5" height="4" fill="#f4f4f4" stroke="#9c0e12" stroke-width=".7"/><rect x="15" y="2.4" width="5" height="4" fill="#f4f4f4" stroke="#9c0e12" stroke-width=".7"/></g></g>
<g transform="translate(723.5 116)"><path d="M4 3.6l4.6 14 5.4-12.6 5.6-1" fill="none" stroke="#d2d8d0" stroke-width="1.4"/><path d="M9 12h8M9 9l9-2" stroke="#d9ddd6" stroke-width="1"/><g fill="#f4f4f4" stroke="#cfd2cc" stroke-width=".9"><circle cx="4" cy="3.6" r="1.7"/><rect x="17.6" y="1.6" width="3.2" height="3.2"/><rect x="17.6" y="6" width="3.2" height="3.2"/><rect x="16.6" y="10.4" width="3.2" height="3.2"/><rect x="7" y="16.6" width="3.2" height="3.2"/><rect x="8.6" y="9.6" width="3" height="3"/></g><path d="M16.6 19.6h7l-3.5 4z" fill="#c4c5c6"/></g>
<rect x="751.5" y="113.5" width="31" height="30" rx="3" fill="#e2e3e4" stroke="#b7b8b9"/>
<g transform="translate(755 116)"><g fill="#f0f0f0" stroke="#c4c5c6" stroke-width=".9"><rect x="4.4" y="4.6" width="3.4" height="3.4"/><rect x="16" y="6.6" width="3.4" height="3.4"/><rect x="10.4" y="16.4" width="3.4" height="3.4"/></g><path d="M16.6 19.6h7l-3.5 4z" fill="#c4c5c6"/></g>
<rect x="784.5" y="113.5" width="109" height="30" rx="3" fill="#f3f3f3" stroke="#b8b9ba"/><path d="M877.5 114v29" stroke="#c6c7c8"/><path d="M881.6 126.2h8l-4-4.8zM881.6 132h8l-4 4.8z" fill="#c6c7c8"/><text x="789.6" y="135.4" font-size="16.6" font-family="Liberation Sans, sans-serif" fill="#a3a5a7" letter-spacing=".3">12</text>
<linearGradient id="cb" x1="0" y1="0" x2="0" y2="1"><stop offset="0" stop-color="#f8f8f8"/><stop offset="1" stop-color="#eaebeb"/></linearGradient><rect x="895.5" y="113.5" width="120.5" height="30" rx="3" fill="url(#cb)" stroke="#b8b9ba"/><path d="M999.6 126h8l-4 4.8z" fill="#c0c1c2"/><text x="900.6" y="134.6" font-size="16.6" font-family="Liberation Sans, sans-serif" fill="#a3a5a7" letter-spacing=".3">px</text>
<g transform="translate(1022 116)"><path d="M6 2l4.6 8.6M12.6 11.6l9.4-3.6M11.6 13.6v9.4" stroke="#6db567" stroke-width="1.7" fill="none"/><rect x="9.6" y="9.6" width="4" height="4" fill="#e8e8e8" stroke="#8a8c8e" stroke-width="1"/></g>
<g transform="translate(1054.5 116)"><path d="M9 2.6q6-1 11 .6 3.6 1.6 2.6 5-1 3-5 3.6l-5-1z" fill="#bcbdbe" stroke="#6e7072" stroke-width=".9"/><path d="M2 7q0-4 4-4.4 4-.2 6 3.4 2 4 4.6 8 2 3.6 .4 6.6-2 2.6-5.4 1.6-3.2-1-4.6-5-1-4-3.6-6.6-1.4-1.6-1.4-3.6z" fill="#8fc878" stroke="#3c4a3a" stroke-width="1.1"/><g fill="#5fa04e"><circle cx="6" cy="6" r=".6"/><circle cx="8.6" cy="9" r=".6"/><circle cx="10" cy="13" r=".6"/><circle cx="12.6" cy="16" r=".6"/><circle cx="11" cy="19" r=".6"/><circle cx="13.6" cy="20" r=".6"/></g><path d="M17.6 20.6h6.4l-3.2 3.4z" fill="#3a3c3e"/></g>
<g transform="translate(1088 116)"><path d="M2 2.6l20 19M22 2.6l-20 19" stroke="#dadbdb" stroke-width="1.5" fill="none"/><rect x="10.4" y="10.6" width="3" height="3" fill="#f4f4f4" stroke="#d0d1d1" stroke-width=".8"/></g>
<g transform="translate(1121 116)"><path d="M2 21.6l20-19" stroke="#dadbdb" stroke-width="1.5" fill="none"/><path d="M4 4.6l8 6.4 6-1.6-3 4.6 3.6 8-8-8-5 1 2.6-4.4z" fill="#dcd9d2" stroke="#d4d1ca" stroke-width=".6"/></g>
<path d="M1151.7 127h8l-4 4.6z" fill="#c4c5c6"/>
<g transform="translate(1167 116)"><path d="M3.6 6l5.4 13.6M9 19.6l-5 3" stroke="#d4d5d5" stroke-width="1.3" fill="none"/><circle cx="3.6" cy="5.6" r="2.2" fill="#f0f0f0" stroke="#d0d1d1" stroke-width="1"/><circle cx="8.6" cy="19.6" r="2.2" fill="#f0f0f0" stroke="#d0d1d1" stroke-width="1"/><path d="M13 1.6l4.6 1.6 5 12-2.6 2.6-3.6-1.2-5-12z" fill="#e6e3dc" stroke="#d6d3cc" stroke-width=".7"/><path d="M5 6.6l14 10" stroke="#d9d9d8" stroke-width="1.2"/></g>
<use href="#hd" x="1205" y="120"/>
<g transform="translate(1219.5 116)"><path d="M1.6 3.6h10q2 0 3 2.4l2 5.6q1 2 4.4 2.4" fill="none" stroke="#3f6fae" stroke-width="1.1"/><g fill="#fff" stroke="#3f6fae" stroke-width=".9"><circle cx="1.8" cy="3.6" r="1.2"/><circle cx="12.6" cy="3.6" r="1.2"/><circle cx="21.6" cy="14" r="1.2"/></g><path d="M19.6 .6l1.2 2.6 2.8.2-2.2 1.8.8 2.8-2.6-1.6-2.4 1.6.8-2.8-2.2-1.8 2.8-.2z" fill="#3f6fae"/><text x=".4" y="19.6" font-size="17" font-weight="700" font-family="Liberation Sans, sans-serif" fill="#4878b6" stroke="#2f5c98" stroke-width=".5">A</text><use href="#star" transform="translate(14.4 14.6) scale(.84)"/></g>
<path d="M1249.7 127h8l-4 4.6z" fill="#5a5c5e"/>
<g transform="translate(1265 116)"><rect x="2.6" y="2.6" width="17" height="17" fill="none" stroke="#55585a" stroke-width="1.1" stroke-dasharray="1.6 2.4"/><g fill="#f4f4f4" stroke="#55585a" stroke-width=".8"><rect x="1.6" y="1.6" width="3" height="3"/><rect x="17.6" y="1.6" width="3" height="3"/><rect x="1.6" y="17.6" width="3" height="3"/><rect x="17.6" y="17.6" width="3" height="3"/></g><path d="M5.6 1.6l5 19.6 3.4-4.6 5 6.4 2.6-2-5-6.4 5.6-1.6z" fill="#fff" stroke="#111" stroke-width="1.3" stroke-linejoin="round"/></g>
<use href="#hd" x="5" y="160"/>
<g transform="translate(18 154.5)"><rect x="2.6" y="4.6" width="19" height="9.4" rx="1" fill="#dce6f2" stroke="#24447c" stroke-width="1.1"/><rect x="3.6" y="5.6" width="3" height="7.4" fill="#b4cbe6"/><rect x="13" y="5.6" width="4" height="7.4" fill="#b4cbe6"/><rect x="17.6" y="5.6" width="3" height="7.4" fill="#8fb0da"/><path d="M8 3h4.6v1.6h-1v9.4h1v1.6h-2v3.4h-.6v-3.4h-2v-1.6h1v-9.4h-1z" fill="#5e8dc6" stroke="#24447c" stroke-width="1"/></g>
<g transform="translate(50.3 156)"><g fill="none" stroke="#d2d3d4"><circle cx="12" cy="12" r="8" stroke-width="1.2"/><circle cx="12" cy="12" r="4.6" stroke-width="1"/><path d="M12 .6v22.8M.6 12h22.8" stroke-width="1.6"/></g></g>
<rect x="82.5" y="156" width="1" height="24" fill="#c6c7c8"/>
<g transform="translate(92.5 155)"><rect x="1.6" y="1.6" width="14" height="14" fill="#f2f2f2" stroke="#6e7072" stroke-width="1.1"/><circle cx="11.6" cy="11.6" r="6.6" fill="none" stroke="#55585a" stroke-width="1"/><path d="M11.6 3v17.6M3 11.6h17.6" stroke="#3f7ac4" stroke-width="1.8"/><path d="M16 20.6h7l-3.5 4z" fill="#3a3c3e"/></g>
<g transform="translate(125 156)"><g fill="none" stroke="#d2d3d4"><circle cx="9.6" cy="9.6" r="6.6" stroke-width="1.1"/><path d="M9.6 .6v18M.6 9.6h18" stroke-width="1.5"/><path d="M13 5l5-3M4 20.6l2.6-4" stroke-width="1" stroke-dasharray="2 1.5"/></g><rect x="12.6" y="12.6" width="10.8" height="10.8" rx="1.6" fill="#d1d2d3"/><path d="M18 14.6v6.8M14.6 18h6.8" stroke="#f8f8f8" stroke-width="2"/></g>
<g transform="translate(157.5 156)"><path d="M2 2.6l5.6 13 5-11.6h7" fill="none" stroke="#d2d3d4" stroke-width="1.2"/><g fill="#f4f4f4" stroke="#cfd0d1" stroke-width=".9"><rect x="11" y="2.4" width="3.2" height="3.2"/><rect x="18" y="2.4" width="3.2" height="3.2"/><circle cx="7.6" cy="15.6" r="1.6"/></g><use href="#stard" x="12.7" y="12.8"/></g>
<g transform="translate(190.5 156)"><path d="M3.6 3.6v6q0 4 4 6l4 2" fill="none" stroke="#d2d3d4" stroke-width="1.1" stroke-dasharray="2 1.6"/><rect x="2" y="1.6" width="3.2" height="3.2" fill="#f4f4f4" stroke="#cfd0d1" stroke-width=".9"/><path d="M12 10l2.6-1 1.6 5 4-1 3 8.6-8 2.6-4-6z" fill="#e2dfd8" stroke="#d6d3cc" stroke-width=".7"/></g>
<rect x="222" y="156" width="1" height="24" fill="#c6c7c8"/>
<g transform="translate(231 156)"><circle cx="12" cy="12" r="10" fill="#5c8ac4" stroke="#3a66a4" stroke-width="1"/><path d="M3.6 9a9 9 0 0 1 16.8 0q-8.4-3-16.8 0z" fill="#8ab0de" opacity=".7"/><text x="8.6" y="18.6" font-size="17" font-style="italic" font-weight="700" font-family="Liberation Serif, serif" fill="#fff">i</text></g>
<g transform="translate(264.7 156)"><path d="M11 9.6l11.6 11" stroke="#2a2a2a" stroke-width="5.4" stroke-linecap="round"/><path d="M11.4 10l10 9.6" stroke="#f1c94a" stroke-width="3.6" stroke-linecap="butt"/><path d="M20 18.2l2.6 2.4" stroke="#2a2a2a" stroke-width="4" stroke-linecap="round"/><path d="M3 1.6a5.2 5.2 0 0 1 8.6 5.6l1.6 2-3 3-2-1.6a5.2 5.2 0 0 1-7-6l3.2 2.6 2.4-.6.6-2.4z" fill="#e0e1e2" stroke="#55585a" stroke-width="1"/></g>
<rect x="3.5" y="217.5" width="23" height="22" rx="3" fill="#e2e3e4" stroke="#b7b8b9"/>
<g transform="translate(6.84 219.84) scale(0.68)"><path d="M2 10l7-5 8 11-7 5z" fill="#f0d03c"/><path d="M2 10l3.6-2.6 8 11-3.6 2.6z" fill="#4f7fc0"/><path d="M4 14l4 6 3-2-4-6z" fill="#e22a2a"/><path d="M2 16.6l5 5 2-1.6-4-6z" fill="#e22a2a"/><path d="M10 9l8 5-3.6 6-8-5z" fill="#e8b46a" stroke="#b8802e" stroke-width="1"/><path d="M15 11l7-8" stroke="#c8862a" stroke-width="3.2" stroke-linecap="round"/><path d="M9 12l6 4M8 14l6 4" stroke="#c89a50" stroke-width=".8"/></g>
<g transform="translate(31.84 219.84) scale(0.68)"><path d="M2 9.6v12h12" fill="none" stroke="#55585a" stroke-width="1.4"/><rect x="5" y="6" width="12" height="12.6" fill="#f4f4f4" stroke="#55585a" stroke-width="1.4"/><path d="M9 12V3.6q0-2.4 2.4-2.4t2.4 2.4v11" fill="none" stroke="#3f6fae" stroke-width="1.5"/><circle cx="18" cy="18.6" r="4.6" fill="#f4f4f4" stroke="#2f8f5f" stroke-width="2.2"/></g>
<g transform="translate(57.84 219.84) scale(0.68)"><path d="M.6 12q5-7.4 11.6-7.4t11.4 7.4q-5 6-11.4 6t-11.6-6z" fill="#f6f6f6" stroke="#8a8c8e" stroke-width="1.3"/><circle cx="11" cy="11" r="5" fill="#5c8ac4" stroke="#3a66a4" stroke-width="1"/><circle cx="11" cy="10.6" r="2" fill="#111"/><path d="M1 7q5-5 11-5t10 4" fill="none" stroke="#b0b2b4" stroke-width="1.2"/><path d="M14 18.6h10l-5 5.6z" fill="#55585a"/></g>
<g transform="translate(83.34 219.84) scale(0.68)"><path d="M1.6 2h20.8v3l-8 8.6v9.4l-4.6-2.4v-7z" fill="#5c8ac4" stroke="#3a66a4" stroke-width="1"/><rect x="1.6" y="1" width="20.8" height="3.6" fill="#f0d03c" stroke="#c7a324" stroke-width=".8"/><path d="M14 18.6h10l-5 5.6z" fill="#55585a"/></g>
<g transform="translate(107.84 219.84) scale(0.68)"><text x="0" y="15" font-size="22" font-family="Liberation Sans, sans-serif" fill="#c9cacb">&#949;</text><path d="M11 12h12l-1.6 10q-.4 1.6-1.6 0l-1-5h-3.6l-1 5q-1 1.6-1.6 0z" fill="#e6e7e8" stroke="#d6d7d8" stroke-width="1"/></g>
<path d="M130 226h8l-4 4.6z" fill="#c4c5c6"/>
<g transform="translate(146.84 219.84) scale(0.68)"><path d="M3 1v22M3 5h5M3 12h5M3 19h5" stroke="#55585a" stroke-width="1.2" fill="none"/><rect x="6" y="2.6" width="4.6" height="4.6" fill="#f0b03c" stroke="#c07f1c" stroke-width=".8"/><rect x="6" y="16.6" width="4.6" height="4.6" fill="#f0b03c" stroke="#c07f1c" stroke-width=".8"/><path d="M14 1.6h6v11h3.6l-6.6 9.4-6.6-9.4h3.6z" fill="#4f83c4" stroke="#2c5c9c" stroke-width="1"/></g>
<g transform="translate(171.84 219.84) scale(0.68)"><path d="M3 1v22M3 5h5M3 12h5M3 19h5" stroke="#55585a" stroke-width="1.2" fill="none"/><rect x="6" y="9.6" width="4.6" height="4.6" fill="#f0b03c" stroke="#c07f1c" stroke-width=".8"/><rect x="6" y="16.6" width="4.6" height="4.6" fill="#f0b03c" stroke="#c07f1c" stroke-width=".8"/><path d="M14 22.4h6v-11h3.6l-6.6-9.4-6.6 9.4h3.6z" fill="#4f83c4" stroke="#2c5c9c" stroke-width="1"/></g>
<g transform="translate(196.14 219.84) scale(0.68)"><rect x="1.6" y="1.6" width="18" height="18" fill="#f2f2f2" stroke="#55585a" stroke-width="1.3" stroke-dasharray="1.6 1.2"/><rect x="13" y="14" width="10.6" height="8" rx="2.4" fill="#e2242c"/><path d="M15 18h6.6" stroke="#fff" stroke-width="2.2"/></g></svg>
<div id="dock">
<div class="abs" style="left:3.3px;top:192px;height:20px;line-height:20px">Layers</div>
<svg class="abs" style="left:342px;top:194px" width="28" height="13" viewBox="0 0 28 13">
<g fill="none" stroke="#5f6062" stroke-width="1">
<rect x="1.5" y="1.5" width="10" height="10" rx="2.2"/>
<rect x="15.5" y="1.5" width="10" height="10" rx="2.2"/>
<rect x="3.6" y="5.6" width="3.8" height="3.8" rx="1" stroke-width="1.1"/>
<path d="M5.6 5V4.4a1 1 0 0 1 1-1H8.6a1 1 0 0 1 1 1V6.6a1 1 0 0 1-1 1H8" stroke-width="1.1"/>
<path d="M18.1 4.1L22.9 8.9M22.9 4.1L18.1 8.9" stroke-width="2.1"/>
</g></svg>
<div id="tree">
 <div class="row" style="top:0"><i class="arr"></i><i class="cb"><svg width="16" height="16" viewBox="0 0 16 16"><path d="M3.2 7.8l3.5 4.8 5.9-10" fill="none" stroke="#151515" stroke-width="1.9" stroke-linejoin="miter"/></svg></i><i class="ras"></i><b style="left:73.6px;letter-spacing:.9px">dem</b></div>
 <div class="row" style="top:24px"><span style="left:51px;letter-spacing:-.25px">Band 1 (Gray)</span></div>
 <div class="abs" id="ramp"></div>
 <span class="abs" style="left:76px;top:52px;line-height:20px;letter-spacing:.2px">243</span>
 <span class="abs" style="left:76px;top:124.5px;line-height:20px">85</span>
 <div class="row sel" style="top:146px;height:25px"><i class="arr"></i><i class="cb"><svg width="16" height="16" viewBox="0 0 16 16"><path d="M3.2 7.8l3.5 4.8 5.9-10" fill="none" stroke="#151515" stroke-width="1.9" stroke-linejoin="miter"/></svg></i><i class="ras"></i><b style="left:73.8px;letter-spacing:.27px;text-decoration:underline;text-underline-offset:2px;text-decoration-thickness:1.4px">OpenStreetMap</b></div>
</div>
<div class="abs" style="left:0;top:930px;width:370px;height:1px;background:#bcbdbe"></div>
<div class="abs tab" style="left:0;top:930px;width:91px;height:33px;background:#dfe0e1;border-radius:0 0 4px 4px"><span style="left:11.6px;top:6.5px;letter-spacing:.5px">Browser</span></div>
<div class="abs tab" style="left:91px;top:929px;width:77px;height:37px;background:linear-gradient(#eeeeef,#f4f4f4 50%,#fafafa);border-radius:0 0 4px 4px;border-top:0"><span style="left:12.4px;top:9.5px;letter-spacing:0">Layers</span></div>
<div class="abs" style="left:4px;top:969px;width:297px;height:1px;background:#b4b5b6"></div>
<div class="abs" style="left:1221px;top:969px;width:72px;height:1px;background:#b4b5b6"></div>
<svg class="abs" style="left:374px;top:570px" width="2" height="17" viewBox="0 0 2 17"><rect x="0" y="0" width="1" height="1" fill="#b4b5b6"/><rect x="1" y="1" width="1" height="1" fill="#fbfbfb"/><rect x="0" y="3" width="1" height="1" fill="#b4b5b6"/><rect x="1" y="4" width="1" height="1" fill="#fbfbfb"/><rect x="0" y="6" width="1" height="1" fill="#b4b5b6"/><rect x="1" y="7" width="1" height="1" fill="#fbfbfb"/><rect x="0" y="9" width="1" height="1" fill="#b4b5b6"/><rect x="1" y="10" width="1" height="1" fill="#fbfbfb"/><rect x="0" y="12" width="1" height="1" fill="#b4b5b6"/><rect x="1" y="13" width="1" height="1" fill="#fbfbfb"/><rect x="0" y="15" width="1" height="1" fill="#b4b5b6"/><rect x="1" y="16" width="1" height="1" fill="#fbfbfb"/></svg>
</div>

<div id="map"><svg width="915" height="776" viewBox="378 189 915 776" font-family="Liberation Sans, DejaVu Sans, sans-serif">
<rect x="378" y="189" width="915" height="776" fill="#f2efe9"/>
<filter id="soft" filterUnits="userSpaceOnUse" x="370" y="180" width="930" height="795"><feGaussianBlur stdDeviation="0.45"/></filter>
<g filter="url(#soft)">
<defs>
<pattern id="vin" patternUnits="userSpaceOnUse" x="1.6" y="1" width="9.9" height="13">
<rect width="9.9" height="13" fill="#aedfa3"/>
<path d="M0 0v4M0 10.2v2.8M9.9 0v4M9.9 10.2v2.8M4.95 3.6v6.6" stroke="#97c890" stroke-width="1.3" fill="none"/>
</pattern>
<pattern id="orc" patternUnits="userSpaceOnUse" x="0" y="0" width="10" height="10">
<rect width="10" height="10" fill="#aedfa3"/>
<rect x="4" y="4" width="1.4" height="1.4" fill="#7fbf78"/>
</pattern>
<g id="tr" fill="none" stroke="#96c48d" stroke-width=".9">
<circle cx="-3" cy="-2.5" r="2.6"/><path d="M-3 0v5M3.2 -5.5L0.8 1.6h4.8zM3.2 1.6v3.6"/>
</g>
<g id="tr2" fill="none" stroke="#96c48d" stroke-width=".9">
<circle cx="3" cy="-2.5" r="2.6"/><path d="M3 0v5M-3.2 -5.5L-5.6 1.6h4.8zM-3.2 1.6v3.6"/>
</g>
</defs>
<polygon points="440.2,618.5 444.1,613.8 476.5,601.5 484.3,607.6 499.7,637 468.8,637.8 462.6,624.7 442.5,623.1" fill="#eef0d5"/>
<polygon points="504.4,637.8 574.8,565.1 574.8,637.8" fill="#eef0d5"/>
<polygon points="479.6,636.2 574.8,636.2 574.8,641.6 561.6,643.2 538.4,657.1 515.2,675.7 493.6,694.2 482.7,709.7 475,729.8 467.3,739.1 459.5,736 456.4,726.7 444.1,720.5 437.9,723.6 442.5,702 448.7,686.5 464.2,673.3 481.2,657.1 499.7,636.2" fill="#eef0d5"/>
<polygon points="1108.2,830.6 1172.8,832.5 1211.7,866.8 1267.4,920.6 1273,935.4 1294.3,924.3 1294.3,966 1247,966 1243.3,957.7 1204.3,951.2 1108.2,950.3 1093,950.3 1093,830.6" fill="#eef0d5"/>
<polygon points="466.5,208.7 475,209.4 473.8,255.8 466.5,257.4" fill="#e0dfdf"/>
<polygon points="477.3,246.6 487.4,246.6 487.4,255.1 477.3,255.8" fill="#e0dfdf"/>
<polygon points="419,255.1 425.8,255.1 427.8,263.9 448.7,258.5 458.8,264.3 462.6,273.6 475,318.5 456.4,310.7 448.7,277.5 422.4,280.6 413.9,296.8 406.9,293.7 399.2,294.5 391.5,290.6 378.3,286 378.3,263.6 405.1,267.1 404.3,279 417.8,274.4" fill="#e0dfdf"/>
<polygon points="475,290.6 493.6,280.6 521.4,280.6 532.2,286 574.8,274.4 574.8,293.7 546.1,298.4 520.6,304.6 521.4,312.3 493.6,321.6 490.5,333.9 484.3,323.1 476.5,323.1" fill="#e0dfdf"/>
<polygon points="378.3,310.7 414.7,321.6 445.6,330.9 471.9,337.8 378.3,337.8" fill="#e0dfdf"/>
<polygon points="512.1,258.2 517.5,258.2 517.5,267.4 512.1,267.4" fill="#e0dfdf"/>
<polygon points="569.3,326.2 574.8,323.1 574.8,337.8 566.3,337.8" fill="#e0dfdf"/>
<polygon points="378.3,336.2 378.3,340.1 422.4,346.3 459.5,363.3 471.9,381.9 492,405.1 515.2,426.7 524.5,439.1 535.3,454.6 574.8,459.2 574.8,336.2" fill="#e0dfdf"/>
<polygon points="378.3,771.6 402.3,757.6 427,736 442.5,728.3 437.9,739.1 444.1,754.6 453.3,749.9 451.8,757.6 468.8,766.9 479.6,757.6 484.3,760.7 488.9,776.2 499.7,787.8 378.3,787.8" fill="#add19e"/>
<polygon points="507.5,787.8 504.4,779.3 487.4,756.1 499.7,748.4 493.6,737.5 485.8,734.4 490.5,720.5 488.9,714.3 495.1,709.7 512.1,708.2 513.7,705.1 504.4,692.7 519.9,688 524.5,692.7 532.2,677.2 538.4,681.9 541.5,674.1 536.9,667.9 540,660.2 560.1,649.4 574.8,643.2 574.8,787.8" fill="#add19e"/>
<polygon points="566.3,677.2 574.8,663.3 574.8,672.6 569.3,678.8" fill="#f2efe9"/>
<polygon points="546.1,748.4 550.8,746.8 566.3,768.5 569.3,783.9 561.6,780.9 553.9,763.8" fill="#f2efe9"/>
<polygon points="479.6,722.1 487.4,722.8 487.1,726.4 479.3,725.6" fill="#aedfa3"/>
<polygon points="376,786.1 575.4,786.1 575.4,905.7 565.2,905.7 556,884.4 533.7,883.5 530,903 466.9,903 461.3,894.6 444.6,896.5 437.2,909.4 435.4,916.9 415,920.6 398.3,926.1 395.5,910.4 376,910.4" fill="#add19e"/>
<polygon points="381.6,786.1 403.8,786.1 402,791.6 387.1,795.3" fill="#f2efe9"/>
<polygon points="433.5,816.7 440.9,811.1 445.6,819.5 455.8,817.6 459.5,824.1 453.9,840.8 457.6,868.6 462.3,870.5 457.6,883.5 468.8,881.6 468.8,892.8 450.2,890.9 450.2,887.2 455.8,885.3 452.1,872.3 444.6,864.9 448.4,857.5 446.5,848.2 431.7,844.5 440.9,837.1 434.4,826" fill="#f2efe9"/>
<polygon points="502.2,786.1 511.4,786.1 520.7,798.1 518.9,814.8 539.3,822.3 543,829.7 554.1,831.5 565.2,853.8 559.7,855.6 557.8,864.9 543,870.5 535.6,866.8 539.3,859.4 548.5,853.8 556,850.1 550.4,837.1 541.1,835.2 530,831.5 522.6,822.3 511.4,818.5 502.2,803.7" fill="#f2efe9"/>
<polygon points="492.9,890 500.3,890 500.3,898.3 508.7,898.3 508.7,902.4 492.9,902.4" fill="#f2efe9"/>
<polygon points="376,910.4 395.5,910.4 398.3,926.1 415,920.6 435.4,916.9 437.2,909.4 444.6,896.5 461.3,894.6 466.9,903 530,903 533.7,883.5 556,884.4 565.2,905.7 575.4,907.6 575.4,920.6 559.7,918.7 556,942.8 550.4,948.4 552.3,954 539.3,959.5 533.7,966 457.6,966 450.2,952.1 437.2,950.3 429.8,957.7 431.7,966 376,966" fill="url(#vin)"/>
<polygon points="588.8,949.4 686.9,949.4 686.9,966.1 590.9,966.1" fill="url(#vin)"/>
<polygon points="686.9,949.4 724.5,949.4 724.5,966.1 686.9,966.1" fill="#aedca0"/>
<polygon points="724.5,949.4 757.9,949.4 757.9,964 741.2,966.1 724.5,966.1" fill="#add19e"/>
<polygon points="725.6,950.9 732.9,950.9 732.9,956.7 725.6,956.7" fill="#f2efe9"/>
<polygon points="1044.6,949.4 1067.6,949.4 1077,966.1 1053,966.1" fill="#add19e"/>
<polygon points="1261.6,188.5 1294.1,188.5 1294.1,271.8 1286.3,269 1280.9,262.8 1280.9,241.1 1276.3,239.6 1275.5,247.3 1267.8,228.8 1263.9,213.3 1274,197.8 1270.9,191.6" fill="#add19e"/>
<polygon points="1108,445.3 1116.2,439.1 1117,422.1 1131.7,419.8 1142.5,457.6 1150.2,462.3 1161.1,459.2 1167.2,443.7 1167.2,391.9 1188.9,380.3 1189.7,374.1 1207.5,365.6 1214.4,367.2 1218.3,378.8 1233,374.1 1242.3,391.1 1230.7,397.3 1210.6,409.7 1199.7,414.3 1198.2,445.3 1185.8,454.6 1185.8,487.8 1108,487.8" fill="url(#vin)"/>
<polygon points="1108,471.6 1144,480.9 1146.4,487.8 1108,487.8" fill="#add19e"/>
<polygon points="1199.7,414.3 1210.6,410.5 1216.7,412.8 1222.9,411.2 1238.4,445.3 1258.5,448.4 1264.7,465.4 1276.3,487.8 1185.8,487.8 1185.8,454.6 1198.2,445.3" fill="#add19e"/>
<polygon points="1273.2,351.7 1294.1,350.1 1294.1,445.3 1274,446.8 1266.2,439.1 1263.1,419 1267.8,402 1278.6,383.4 1278.6,367.9 1274,366.4" fill="url(#vin)"/>
<polygon points="1108,486.2 1275.5,486.2 1294.1,517.2 1294.1,637.8 1108,637.8" fill="#add19e"/>
<polygon points="1148.7,486.2 1185.8,486.2 1199.7,499.4 1204.4,525.7 1182.7,533.4 1173.4,517.9 1167.2,505.6" fill="url(#vin)"/>
<polygon points="1108,538 1117.7,558.2 1113.1,564.3 1108,561.2" fill="url(#vin)"/>
<polygon points="1239.2,520.3 1242.3,518.7 1246.9,523.3 1243.8,524.9 1245.4,572.1 1257,574.4 1259.3,589.1 1238.4,590.6 1235.3,582.9 1239.9,558.2" fill="#f2efe9"/>
<polygon points="1108,636.2 1294.1,636.2 1294.1,732.1 1247.7,723.6 1238.4,725.2 1232.2,718.2 1226,715.9 1224.5,706.6 1218.3,698.1 1207.5,696.6 1202.8,698.9 1201.3,711.2 1195.1,717.4 1164.9,717.4 1164.2,732.9 1153.3,737.5 1147.9,748.4 1150.2,759.2 1147.1,768.5 1137.9,770.3 1131.7,764.6 1132.4,757.6 1137.9,749.9 1132.4,723.6 1123.2,721.3 1122.4,712.8 1117.7,708.9 1108,714.3" fill="#add19e"/>
<polygon points="1247.7,644.7 1257,646.3 1294.1,657.1 1294.1,702 1286.3,706.6 1275.5,698.9 1274,691.1 1263.1,685 1260.1,677.2 1253.9,675.7 1246.1,678.8 1243.8,685 1237.6,681.9 1255.4,657.1" fill="#f2efe9"/>
<polygon points="1147.9,748.4 1153.3,737.5 1164.2,732.9 1164.9,717.4 1195.1,717.4 1201.3,711.2 1202.8,698.9 1207.5,696.6 1218.3,698.1 1224.5,706.6 1226,715.9 1232.2,718.2 1238.4,725.2 1247.7,723.6 1294.1,731.7 1294.1,787.8 1188.9,787.8 1173.4,759.5 1154.9,759.2 1150.2,759.2" fill="url(#vin)"/>
<polygon points="1108,771.9 1154.9,772.7 1154.9,787.8 1108,787.8" fill="url(#orc)"/>
<polygon points="1156.4,760.7 1172.2,760.3 1187.7,787.8 1156.4,787.8" fill="url(#orc)"/>
<polygon points="1108.2,786.1 1154.2,791.6 1167.2,816.7 1172.8,832.5 1108.2,830.6" fill="url(#vin)"/>
<polygon points="1156.1,787 1178.3,794.4 1215.4,836.2 1201.5,853.8 1168.1,816.7" fill="url(#orc)"/>
<polygon points="1189.5,786.1 1294.3,786.1 1294.3,924.3 1273,935.4 1267.4,920.6 1211.7,866.8 1210.8,845.4 1232.1,844.5 1233.1,835.2 1222.9,814.8 1204.3,790.7" fill="url(#vin)"/>
<polygon points="1179.3,795.3 1193.2,788.9 1204.3,790.7 1222.9,814.8 1233.1,835.2 1231.2,842.7 1222.9,842.7 1215.4,829.7" fill="#add19e"/>
<polygon points="567.8,495.5 574.8,494.7 574.8,557.7 509.5,618.6 499.7,607.6 510.6,582.9 529.1,536.5 550.8,513.3" fill="#aad3df"/>
<polygon points="494.3,614.6 499,610.7 506.7,620 502.1,623.9" fill="#aad3df"/>
<polyline points="376.8,567.4 410,581.4 454.9,610 475,598.4 501.3,577.5 510.6,555.1 524.5,531.9 546.1,513.3 561.6,491.6 575.5,487.8" fill="none" stroke="#aad3df" stroke-width="5.2" stroke-linejoin="round" stroke-linecap="round" stroke-linecap="butt"/>
<polyline points="575.5,561.2 502.8,629.3 494.3,637.8" fill="none" stroke="#aad3df" stroke-width="4.6" stroke-linejoin="round" stroke-linecap="round" stroke-linecap="butt"/>
<polyline points="499.7,635.5 478.1,657.1 462.6,672.6 445.6,686.5 441,702 427,726.7 402.3,754.6 378.3,742.2 376.8,736" fill="none" stroke="#aad3df" stroke-width="4.6" stroke-linejoin="round" stroke-linecap="round" stroke-linecap="butt"/>
<path d="M858.3 187L816 233.5" stroke="#aad3df" stroke-width="5" fill="none"/>
<polyline points="901.6,188 885.9,207.9 872.4,232.9" fill="none" stroke="#aad3df" stroke-width="5" stroke-linejoin="round" stroke-linecap="round" stroke-linecap="butt"/>
<polygon points="414.7,236.8 438.6,231.5 442.5,248.1 418.5,253.8" fill="#aacbaf"/>
<polygon points="488.9,237.7 510.3,237.3 510.3,253.8 489.2,253.8" fill="#8fdcbd"/>
<polygon points="432,434.8 451.3,419.3 471.9,442.2 449.5,455.8" fill="#aacbaf"/>
<polygon points="488.9,367.9 498.2,363.6 506.7,370.3 495.1,379.1" fill="#f5f6c0"/>
<polygon points="494.3,367.5 499,365.3 501,367.9 496.3,370.4" fill="#8fdcbd"/>
<polyline points="467.3,209.1 484.3,210.2 507.5,211.4 521.4,206.3 538.4,202.2 546.1,204 553.9,217.9 558.5,233.4 561.6,240.4 574,237.3" fill="none" stroke="#c4b27a" stroke-width="1" stroke-linejoin="round" stroke-linecap="round" stroke-dasharray="5 4" stroke-linecap="butt" opacity="1"/>
<polyline points="561.6,240.4 546.1,248.1 530.7,252.7 514.4,254.7" fill="none" stroke="#c4b27a" stroke-width="1" stroke-linejoin="round" stroke-linecap="round" stroke-dasharray="5 4" stroke-linecap="butt" opacity="1"/>
<polyline points="382.2,388 406.9,397.3 434.8,409.7 459.5,422.8" fill="none" stroke="#c4b27a" stroke-width="1" stroke-linejoin="round" stroke-linecap="round" stroke-dasharray="5 4" stroke-linecap="butt" opacity="1"/>
<polyline points="486.6,454.6 462.6,470 439.4,485.5 434.8,489.4" fill="none" stroke="#c4b27a" stroke-width="1" stroke-linejoin="round" stroke-linecap="round" stroke-dasharray="5 4" stroke-linecap="butt" opacity="1"/>
<polyline points="488.9,456.1 499.7,473.1 509,487.8" fill="none" stroke="#c4b27a" stroke-width="1" stroke-linejoin="round" stroke-linecap="round" stroke-dasharray="5 4" stroke-linecap="butt" opacity="1"/>
<polyline points="507.5,443.7 518.3,463.8 536.9,482.4 543.1,480.1 574,463.8" fill="none" stroke="#c4b27a" stroke-width="1" stroke-linejoin="round" stroke-linecap="round" stroke-dasharray="5 4" stroke-linecap="butt" opacity="1"/>
<polyline points="530.7,476.2 532.2,487.8" fill="none" stroke="#c4b27a" stroke-width="1" stroke-linejoin="round" stroke-linecap="round" stroke-dasharray="5 4" stroke-linecap="butt" opacity="1"/>
<polyline points="425.5,494.7 430.1,493.2 464.2,542.7 493.6,522.6 488.9,511.7 513.7,493.2 512.1,486.2" fill="none" stroke="#c4b27a" stroke-width="1" stroke-linejoin="round" stroke-linecap="round" stroke-dasharray="5 4" stroke-linecap="butt" opacity="1"/>
<polyline points="543.1,486.2 550.8,493.2 566.3,487" fill="none" stroke="#c4b27a" stroke-width="1" stroke-linejoin="round" stroke-linecap="round" stroke-dasharray="5 4" stroke-linecap="butt" opacity="1"/>
<polyline points="424,630.9 442.5,613.8 456.4,612.3" fill="none" stroke="#c4b27a" stroke-width="1" stroke-linejoin="round" stroke-linecap="round" stroke-dasharray="5 4" stroke-linecap="butt" opacity="1"/>
<polyline points="379.1,572.1 410,585.2 454.9,613.8 476.5,601.5 504.4,579.8 513.7,556.6 527.6,535 548.5,516.4 563.9,494.7" fill="none" stroke="#c9b98a" stroke-width="0.8" stroke-linejoin="round" stroke-linecap="round" stroke-dasharray="4 4" stroke-linecap="butt" opacity="1"/>
<polyline points="575.5,565.9 505.9,631.6 498.2,637.8" fill="none" stroke="#c9a98a" stroke-width="0.8" stroke-linejoin="round" stroke-linecap="round" stroke-dasharray="4 4" stroke-linecap="butt" opacity="1"/>
<polyline points="501.3,637 481.2,660.2 465.7,675.7 448.7,689.6 444.1,703.5" fill="none" stroke="#c9a98a" stroke-width="0.8" stroke-linejoin="round" stroke-linecap="round" stroke-dasharray="4 4" stroke-linecap="butt" opacity="1"/>
<polyline points="378.3,766.9 402.3,757.6" fill="none" stroke="#b9a58a" stroke-width="0.9" stroke-linejoin="round" stroke-linecap="round" stroke-dasharray="4 4" stroke-linecap="butt" opacity="1"/>
<polyline points="442.5,709.7 456.4,726.7 468.8,740.6 484.3,757.6 504.4,780.9 507.5,787.8" fill="none" stroke="#c4b27a" stroke-width="1" stroke-linejoin="round" stroke-linecap="round" stroke-dasharray="5 4" stroke-linecap="butt" opacity="1"/>
<polyline points="456.4,729.8 450.2,736 444.1,737.5" fill="none" stroke="#c4b27a" stroke-width="1" stroke-linejoin="round" stroke-linecap="round" stroke-dasharray="5 4" stroke-linecap="butt" opacity="1"/>
<polyline points="516.8,760.7 504.4,776.2" fill="none" stroke="#b9a58a" stroke-width="0.9" stroke-linejoin="round" stroke-linecap="round" stroke-dasharray="4 3" stroke-linecap="butt" opacity="1"/>
<polyline points="505.9,787 520.7,798.1 522.6,822.3 543,831.5 554.1,835.2 563.4,851.9" fill="none" stroke="#d0a080" stroke-width="0.8" stroke-linejoin="round" stroke-linecap="round" stroke-dasharray="4 3" stroke-linecap="butt" opacity="1"/>
<polyline points="557.8,866.8 567.1,879.8 565.2,905.7" fill="none" stroke="#e0a080" stroke-width="0.8" stroke-linejoin="round" stroke-linecap="round" stroke-dasharray="3 4" stroke-linecap="butt" opacity="1"/>
<polyline points="457.6,872.3 465.1,900.2 463.2,920.6 461.3,935.4" fill="none" stroke="#c9b98a" stroke-width="0.8" stroke-linejoin="round" stroke-linecap="round" stroke-dasharray="4 3" stroke-linecap="butt" opacity="1"/>
<polyline points="466.9,903 530,903 573.6,907.6" fill="none" stroke="#d9c9a0" stroke-width="0.8" stroke-linejoin="round" stroke-linecap="round" stroke-dasharray="5 3" stroke-linecap="butt" opacity="1"/>
<polyline points="377.9,929.9 403.8,931.7" fill="none" stroke="#c9b98a" stroke-width="0.8" stroke-linejoin="round" stroke-linecap="round" stroke-dasharray="4 3" stroke-linecap="butt" opacity="1"/>
<polyline points="1254.6,193.2 1257,213.3" fill="none" stroke="#c4b27a" stroke-width="0.9" stroke-linejoin="round" stroke-linecap="round" stroke-dasharray="4 5" stroke-linecap="butt" opacity="1"/>
<polyline points="1157.2,224.9 1158.7,231.1" fill="none" stroke="#c4b27a" stroke-width="1" stroke-linejoin="round" stroke-linecap="round" stroke-dasharray="4 3" stroke-linecap="butt" opacity="1"/>
<polyline points="1175,221.8 1171.1,233.4" fill="none" stroke="#c4b27a" stroke-width="1" stroke-linejoin="round" stroke-linecap="round" stroke-dasharray="4 3" stroke-linecap="butt" opacity="1"/>
<polyline points="1229.1,398.9 1247.7,432.9 1263.1,460.7 1274.7,485.5" fill="none" stroke="#c4b27a" stroke-width="0.9" stroke-linejoin="round" stroke-linecap="round" stroke-dasharray="5 4" stroke-linecap="butt" opacity="1"/>
<polyline points="1263.1,421.3 1293,421.3" fill="none" stroke="#c4b27a" stroke-width="0.9" stroke-linejoin="round" stroke-linecap="round" stroke-dasharray="5 4" stroke-linecap="butt" opacity="1"/>
<polyline points="1241.5,419 1257,426.7" fill="none" stroke="#c4b27a" stroke-width="0.9" stroke-linejoin="round" stroke-linecap="round" stroke-dasharray="5 4" stroke-linecap="butt" opacity="1"/>
<polyline points="1276.3,487 1293,516.4" fill="none" stroke="#d0b090" stroke-width="0.9" stroke-linejoin="round" stroke-linecap="round" stroke-dasharray="5 4" stroke-linecap="butt" opacity="1"/>
<polyline points="1201.3,636.3 1241.5,636.3" fill="none" stroke="#c4b27a" stroke-width="0.9" stroke-linejoin="round" stroke-linecap="round" stroke-dasharray="5 4" stroke-linecap="butt" opacity="1"/>
<polyline points="1117.7,638.5 1134.8,657.1 1151.8,658.7 1173.4,647.8 1188.9,638.5 1216.7,635.5 1247.7,641.6 1293,658.7" fill="none" stroke="#c4b27a" stroke-width="0.9" stroke-linejoin="round" stroke-linecap="round" stroke-dasharray="5 4" stroke-linecap="butt" opacity="1"/>
<polyline points="1127.8,734.4 1130.1,763.8" fill="none" stroke="#b0a0a0" stroke-width="0.8" stroke-linejoin="round" stroke-linecap="round" stroke-dasharray="2 3" stroke-linecap="butt" opacity="1"/>
<polyline points="1167.2,736 1167.2,745.3 1173.4,759.2" fill="none" stroke="#d9c9a0" stroke-width="0.8" stroke-linejoin="round" stroke-linecap="round" stroke-dasharray="4 4" stroke-linecap="butt" opacity="1"/>
<polyline points="1108.2,787.9 1154.2,791.6 1189.5,831.5 1211.7,850.1 1209.9,866.8" fill="none" stroke="#d9c9a0" stroke-width="0.8" stroke-linejoin="round" stroke-linecap="round" stroke-dasharray="5 3" stroke-linecap="butt" opacity="1"/>
<polyline points="1260,941 1245.1,963.3" fill="none" stroke="#c4b27a" stroke-width="1" stroke-linejoin="round" stroke-linecap="round" stroke-dasharray="5 4" stroke-linecap="butt" opacity="1"/>
<polyline points="1178.3,794.4 1215.4,836.2" fill="none" stroke="#d9c9a0" stroke-width="0.8" stroke-linejoin="round" stroke-linecap="round" stroke-dasharray="5 3" stroke-linecap="butt" opacity="1"/>
<polyline points="951.7,189.1 961.1,205.8 971.6,207.9 977.8,222.5 982.4,232.9" fill="none" stroke="#c0b0a0" stroke-width="1.1" stroke-linejoin="round" stroke-linecap="round" stroke-dasharray="4 2" stroke-linecap="butt" opacity="1"/>
<polyline points="377.9,804.6 407.5,809.3 422.4,831.5 416.8,837.1 427.9,846.4 448.4,859.4 450.2,874.2 444.6,894.6 435.4,905.7 440.9,916.9 444.6,933.6" fill="none" stroke="#a79aa8" stroke-width="1.6" stroke-linejoin="round" stroke-linecap="round" stroke-dasharray="7 3 2 3" stroke-linecap="butt"/>
<polyline points="405.7,963.3 431.7,946.6 479.9,941 515.1,924.3 561.5,918.7" fill="none" stroke="#a79aa8" stroke-width="1.3" stroke-linejoin="round" stroke-linecap="round" stroke-dasharray="7 3 2 3" stroke-linecap="butt"/>
<polyline points="1245.4,189.3 1247.7,204 1255.4,219.5 1267.8,238 1278.6,258.2 1289.4,276.7 1291,304.6 1293,326.2" fill="none" stroke="#b0a4b4" stroke-width="1.6" stroke-linejoin="round" stroke-linecap="round" stroke-dasharray="7 3 2 3" stroke-linecap="butt"/>
<polyline points="1108,461.5 1134.8,457.6 1151.8,464.6 1161.1,463.1 1171.9,451.5 1172.7,428.3 1219.8,403.5 1263.1,422.1 1293,374.1" fill="none" stroke="#a79aa8" stroke-width="1.3" stroke-linejoin="round" stroke-linecap="round" stroke-dasharray="7 3 2 3" stroke-linecap="butt"/>
<polyline points="1108,768.5 1131.7,764.6 1150.2,760 1164.2,757.6 1173.4,760 1188.9,787" fill="none" stroke="#a79aa8" stroke-width="1.3" stroke-linejoin="round" stroke-linecap="round" stroke-dasharray="7 3 2 3" stroke-linecap="butt"/>
<polyline points="1193.2,788.9 1208,811.1 1222.9,840.8 1232.1,853.8 1280.4,913.2 1273,928 1263.7,937.3 1278.5,965.1" fill="none" stroke="#a79aa8" stroke-width="1.3" stroke-linejoin="round" stroke-linecap="round" stroke-dasharray="7 3 2 3" stroke-linecap="butt"/>
<polyline points="595.1,950.4 674.4,956.7 737,961.9" fill="none" stroke="#a79aa8" stroke-width="1.3" stroke-linejoin="round" stroke-linecap="round" stroke-dasharray="7 3 2 3" stroke-linecap="butt"/>
<polyline points="376.8,278.7 411.6,284.8 416.2,283.7 421.6,275.9 458,265.1 462.6,258.9 475,256.6 513.7,254.7" fill="none" stroke="#cfcdca" stroke-width="4" stroke-linejoin="round" stroke-linecap="round"/>
<polyline points="472.7,302.2 538.4,299.1 546.1,296.8 575.5,283.7" fill="none" stroke="#cfcdca" stroke-width="4" stroke-linejoin="round" stroke-linecap="round"/>
<polyline points="376.8,323.1 422.4,337.8" fill="none" stroke="#cfcdca" stroke-width="4" stroke-linejoin="round" stroke-linecap="round"/>
<polyline points="444.8,245.8 456.4,247" fill="none" stroke="#cfcdca" stroke-width="3" stroke-linejoin="round" stroke-linecap="round"/>
<polyline points="487.4,253.5 487.4,237.3 495.9,236.8" fill="none" stroke="#cfcdca" stroke-width="2.8" stroke-linejoin="round" stroke-linecap="round"/>
<polyline points="420.9,336.2 467.3,344.7 530.7,344 540,349.4 552.3,361 558.5,375.7 566.3,395.8 575.5,411.2" fill="none" stroke="#cfcdca" stroke-width="3.8" stroke-linejoin="round" stroke-linecap="round"/>
<polyline points="467.3,344.7 484.3,361.7 492,378.8 507.5,398.9 530.7,421.3 535.3,422.8" fill="none" stroke="#cfcdca" stroke-width="3.8" stroke-linejoin="round" stroke-linecap="round"/>
<polyline points="552.3,361 557,350.9 575.5,337.8" fill="none" stroke="#cfcdca" stroke-width="3.8" stroke-linejoin="round" stroke-linecap="round"/>
<polyline points="535.3,422.8 549.2,417.4" fill="none" stroke="#cfcdca" stroke-width="3.8" stroke-linejoin="round" stroke-linecap="round"/>
<polyline points="535.3,422.8 543.1,432.9 558.5,443.7 575.5,445.3" fill="none" stroke="#cfcdca" stroke-width="3.8" stroke-linejoin="round" stroke-linecap="round"/>
<polyline points="530.7,421.3 487.4,453 459.5,423.6" fill="none" stroke="#cfcdca" stroke-width="3.4" stroke-linejoin="round" stroke-linecap="round"/>
<polyline points="561.6,388 547.7,403.5" fill="none" stroke="#cfcdca" stroke-width="2.4" stroke-linejoin="round" stroke-linecap="round"/>
<polyline points="575.5,641.6 558.5,646.3 538.4,660.2 515.2,678.8 496.6,694.2 484.3,709.7 476.5,729.8 468.8,739.1" fill="none" stroke="#cfcdca" stroke-width="4" stroke-linejoin="round" stroke-linecap="round"/>
<polyline points="401,966 403.8,935.4 408.5,932.6 550.4,945.6 556,941 559.7,920.6 563.4,918.7 575.4,921" fill="none" stroke="#cfcdca" stroke-width="3.6" stroke-linejoin="round" stroke-linecap="round"/>
<polyline points="1165.7,188.5 1167.2,202.5 1166.5,221 1162.6,236.5 1162.6,248.9 1170.3,259.7 1193.5,275.2 1210.6,293.7" fill="none" stroke="#cfcdca" stroke-width="4" stroke-linejoin="round" stroke-linecap="round"/>
<polyline points="615.9,188 625.3,214.1 627.4,232.9" fill="none" stroke="#cfcdca" stroke-width="3" stroke-linejoin="round" stroke-linecap="round"/>
<polyline points="1000.8,949.4 1016.4,966.1" fill="none" stroke="#cfcdca" stroke-width="5.6" stroke-linejoin="round" stroke-linecap="round"/>
<polyline points="585.7,949.4 589.8,966.1" fill="none" stroke="#cfcdca" stroke-width="3.6" stroke-linejoin="round" stroke-linecap="round"/>
<polyline points="839,955.7 848.4,950.4" fill="none" stroke="#cfcdca" stroke-width="3.6" stroke-linejoin="round" stroke-linecap="round"/>
<polyline points="376.8,278.7 411.6,284.8 416.2,283.7 421.6,275.9 458,265.1 462.6,258.9 475,256.6 513.7,254.7" fill="none" stroke="#ffffff" stroke-width="2.6" stroke-linejoin="round" stroke-linecap="round"/>
<polyline points="472.7,302.2 538.4,299.1 546.1,296.8 575.5,283.7" fill="none" stroke="#ffffff" stroke-width="2.6" stroke-linejoin="round" stroke-linecap="round"/>
<polyline points="376.8,323.1 422.4,337.8" fill="none" stroke="#ffffff" stroke-width="2.6" stroke-linejoin="round" stroke-linecap="round"/>
<polyline points="444.8,245.8 456.4,247" fill="none" stroke="#ffffff" stroke-width="1.6" stroke-linejoin="round" stroke-linecap="round"/>
<polyline points="487.4,253.5 487.4,237.3 495.9,236.8" fill="none" stroke="#ffffff" stroke-width="1.4" stroke-linejoin="round" stroke-linecap="round"/>
<polyline points="420.9,336.2 467.3,344.7 530.7,344 540,349.4 552.3,361 558.5,375.7 566.3,395.8 575.5,411.2" fill="none" stroke="#ffffff" stroke-width="2.4" stroke-linejoin="round" stroke-linecap="round"/>
<polyline points="467.3,344.7 484.3,361.7 492,378.8 507.5,398.9 530.7,421.3 535.3,422.8" fill="none" stroke="#ffffff" stroke-width="2.4" stroke-linejoin="round" stroke-linecap="round"/>
<polyline points="552.3,361 557,350.9 575.5,337.8" fill="none" stroke="#ffffff" stroke-width="2.4" stroke-linejoin="round" stroke-linecap="round"/>
<polyline points="535.3,422.8 549.2,417.4" fill="none" stroke="#ffffff" stroke-width="2.4" stroke-linejoin="round" stroke-linecap="round"/>
<polyline points="535.3,422.8 543.1,432.9 558.5,443.7 575.5,445.3" fill="none" stroke="#ffffff" stroke-width="2.4" stroke-linejoin="round" stroke-linecap="round"/>
<polyline points="530.7,421.3 487.4,453 459.5,423.6" fill="none" stroke="#ffffff" stroke-width="2" stroke-linejoin="round" stroke-linecap="round"/>
<polyline points="561.6,388 547.7,403.5" fill="none" stroke="#ffffff" stroke-width="1" stroke-linejoin="round" stroke-linecap="round"/>
<polyline points="575.5,641.6 558.5,646.3 538.4,660.2 515.2,678.8 496.6,694.2 484.3,709.7 476.5,729.8 468.8,739.1" fill="none" stroke="#ffffff" stroke-width="2.6" stroke-linejoin="round" stroke-linecap="round"/>
<polyline points="401,966 403.8,935.4 408.5,932.6 550.4,945.6 556,941 559.7,920.6 563.4,918.7 575.4,921" fill="none" stroke="#ffffff" stroke-width="2.2" stroke-linejoin="round" stroke-linecap="round"/>
<polyline points="1165.7,188.5 1167.2,202.5 1166.5,221 1162.6,236.5 1162.6,248.9 1170.3,259.7 1193.5,275.2 1210.6,293.7" fill="none" stroke="#ffffff" stroke-width="2.6" stroke-linejoin="round" stroke-linecap="round"/>
<polyline points="615.9,188 625.3,214.1 627.4,232.9" fill="none" stroke="#ffffff" stroke-width="1.6" stroke-linejoin="round" stroke-linecap="round"/>
<polyline points="1000.8,949.4 1016.4,966.1" fill="none" stroke="#ffffff" stroke-width="4.2" stroke-linejoin="round" stroke-linecap="round"/>
<polyline points="585.7,949.4 589.8,966.1" fill="none" stroke="#ffffff" stroke-width="2.2" stroke-linejoin="round" stroke-linecap="round"/>
<polyline points="839,955.7 848.4,950.4" fill="none" stroke="#ffffff" stroke-width="2.2" stroke-linejoin="round" stroke-linecap="round"/>
<polyline points="463.9,187 463.4,202.5 461.8,217.9 460.3,233.4 459.5,248.9 460.3,261.2 463.4,273.6 467.3,289.1 471.1,304.6 474.2,320 477.3,337 487.4,349.4 499.7,363.3 515.2,372.6 524.5,383.4 538.4,398.9 550.8,411.2 561.6,415.9" fill="none" stroke="#c9ca8c" stroke-width="6.6" stroke-linejoin="round"/>
<polyline points="463.9,187 463.4,202.5 461.8,217.9 460.3,233.4 459.5,248.9 460.3,261.2 463.4,273.6 467.3,289.1 471.1,304.6 474.2,320 477.3,337 487.4,349.4 499.7,363.3 515.2,372.6 524.5,383.4 538.4,398.9 550.8,411.2 561.6,415.9" fill="none" stroke="#f7fabf" stroke-width="5.2" stroke-linejoin="round"/>
<use href="#tr" x="553.1" y="676.4"/>
<use href="#tr" x="557" y="716.7"/>
<use href="#tr2" x="519.9" y="729.8"/>
<use href="#tr" x="431.7" y="769.3"/>
<use href="#tr2" x="509.8" y="773.1"/>
<use href="#tr2" x="468.8" y="784.7"/>
<use href="#tr2" x="555.4" y="754.6"/>
<use href="#tr" x="440" y="809.3"/>
<use href="#tr2" x="403.8" y="813.9"/>
<use href="#tr2" x="543.9" y="800.9"/>
<use href="#tr2" x="474.3" y="836.2"/>
<use href="#tr2" x="427.9" y="841.7"/>
<use href="#tr2" x="506.8" y="851.9"/>
<use href="#tr2" x="554.1" y="833.4"/>
<use href="#tr" x="394.6" y="863.1"/>
<use href="#tr" x="468.8" y="876.1"/>
<use href="#tr2" x="425.2" y="889"/>
<use href="#tr2" x="504" y="887.2"/>
<use href="#tr" x="551.3" y="878.8"/>
<use href="#tr" x="466.9" y="787.9"/>
<use href="#tr2" x="1220.6" y="428.3"/>
<use href="#tr" x="1212.1" y="463.8"/>
<use href="#tr" x="1249.2" y="474.7"/>
<use href="#tr" x="1141" y="497.8"/>
<use href="#tr2" x="1230.7" y="504.8"/>
<use href="#tr2" x="1274.7" y="502.5"/>
<use href="#tr2" x="1134.8" y="538"/>
<use href="#tr" x="1209.8" y="541.9"/>
<use href="#tr" x="1260.1" y="537.3"/>
<use href="#tr" x="1180.4" y="565.1"/>
<use href="#tr2" x="1132.4" y="573.6"/>
<use href="#tr2" x="1233" y="569"/>
<use href="#tr2" x="1264.7" y="579.8"/>
<use href="#tr2" x="1165.7" y="599.9"/>
<use href="#tr" x="1205.9" y="602.2"/>
<use href="#tr2" x="1132.4" y="615.4"/>
<use href="#tr2" x="1243" y="611.5"/>
<use href="#tr2" x="1176.5" y="637.8"/>
<use href="#tr" x="1269.3" y="637.8"/>
<use href="#tr2" x="1292.5" y="607.6"/>
<use href="#tr2" x="1175.8" y="640.9"/>
<use href="#tr" x="1220.6" y="646.3"/>
<use href="#tr2" x="1270.1" y="640.1"/>
<use href="#tr" x="1142.5" y="651.7"/>
<use href="#tr" x="1181.2" y="677.2"/>
<use href="#tr" x="1245.4" y="666.4"/>
<use href="#tr" x="1142.5" y="693.5"/>
<use href="#tr2" x="1110.8" y="706.6"/>
<use href="#tr2" x="1221.4" y="697.3"/>
<use href="#tr" x="1257.7" y="712"/>
<use href="#tr" x="1185" y="714.3"/>
<use href="#tr2" x="1147.9" y="730.6"/>
<path d="M1094.3 223.6l4.3 8.6h-8.6z" fill="#d4925a"/>
<g fill="#7fae86"><path d="M418.5 240h1.4v2h2v1.3h-2v4.2h-1.4v-4.2h-2v-1.3h2z"/><path d="M457.5 437h1.4v2h2v1.3h-2v4.2h-1.4v-4.2h-2v-1.3h2z"/></g>
<text x="464" y="364" font-size="16" fill="#777777" stroke="#ffffff" stroke-width="2.4" stroke-linejoin="round" paint-order="stroke" letter-spacing="0.12">Popovac</text>
<rect x="549.5" y="414.5" width="30" height="19.5" rx="2" fill="#f1f2c7" stroke="#c9ca9c" stroke-width="1"/>
<text x="555.5" y="428.6" font-size="10.5" font-weight="700" fill="#5c5c3c" opacity=".85">402</text>
<text x="417.5" y="751.5" font-size="10.2" fill="#5a8ccc" stroke="#e6eef2" stroke-width="1" stroke-linejoin="round" paint-order="stroke" letter-spacing="0.25" transform="rotate(-60 417.5 751.5)" font-style="italic">Crni kanal</text>
<text x="1163" y="452" font-size="10.5" fill="#7b6f86" stroke="#ffffff" stroke-width="1.6" stroke-linejoin="round" paint-order="stroke" letter-spacing="0.2" transform="rotate(-60 1163 452)">Branjina</text>
<text x="1206.5" y="792.5" font-size="10.5" fill="#7b6f86" stroke="#ffffff" stroke-width="1.6" stroke-linejoin="round" paint-order="stroke" letter-spacing="0.2" transform="rotate(57 1206.5 792.5)">Kotlina</text>
<text x="385.5" y="962.5" font-size="10.5" fill="#8a8a8a" stroke="#ffffff" stroke-width="1.6" stroke-linejoin="round" paint-order="stroke" letter-spacing="0.2" transform="rotate(-28 385.5 962.5)">Ilin Vrh</text>
</g>
<defs><clipPath id="rc"><rect x="574" y="232" width="534" height="718"/></clipPath>
<filter id="vir" filterUnits="userSpaceOnUse" x="544" y="202" width="594" height="778" color-interpolation-filters="sRGB">
<feGaussianBlur stdDeviation="4.2"/>
<feComponentTransfer><feFuncR type="table" tableValues="0.267 0.277 0.282 0.283 0.279 0.271 0.259 0.245 0.230 0.214 0.199 0.186 0.173 0.161 0.149 0.138 0.128 0.121 0.121 0.132 0.158 0.197 0.246 0.304 0.369 0.440 0.516 0.596 0.678 0.762 0.846 0.926 0.993"/><feFuncG type="table" tableValues="0.005 0.050 0.095 0.136 0.175 0.214 0.252 0.288 0.322 0.356 0.388 0.419 0.449 0.479 0.508 0.537 0.567 0.596 0.626 0.655 0.684 0.712 0.739 0.765 0.789 0.811 0.831 0.849 0.864 0.876 0.887 0.897 0.906"/><feFuncB type="table" tableValues="0.329 0.376 0.417 0.453 0.483 0.507 0.525 0.537 0.546 0.551 0.555 0.557 0.558 0.558 0.557 0.555 0.551 0.544 0.533 0.520 0.502 0.479 0.452 0.420 0.383 0.341 0.294 0.243 0.190 0.137 0.100 0.104 0.144"/><feFuncA type="linear" slope="0" intercept="1"/></feComponentTransfer>
</filter></defs>
<g clip-path="url(#rc)"><g filter="url(#vir)" fill="none" stroke-width="8.6" shape-rendering="crispEdges"><rect x="544" y="202" width="594" height="778" fill="#0d0d0d"/>
<path stroke="#040404" d="M862 212h32M862 220h24M862 228h16M726 348h24M726 356h32M782 356h8M726 364h32M774 364h24M726 372h32M782 372h8M726 380h16"/>
<path stroke="#060606" d="M846 212h16M894 212h16M838 220h24M886 220h24M934 220h8M830 228h32M878 228h64M830 236h104M830 244h104M830 252h96M830 260h96M830 268h96M830 276h88M830 284h88M830 292h88M830 300h80M822 308h88M718 316h184M710 324h184M702 332h184M702 340h176M702 348h24M750 348h120M702 356h24M758 356h24M790 356h80M702 364h24M758 364h16M798 364h64M702 372h24M758 372h24M790 372h56M702 380h24M742 380h96M702 388h112M710 396h104M710 404h88M718 412h64M734 420h40M758 428h8M550 652h16M558 660h8"/>
<path stroke="#080808" d="M838 212h8M910 212h32M830 220h8M910 220h24M942 220h8M942 228h8M934 236h8M934 244h8M926 252h8M926 260h8M926 268h8M918 276h8M822 284h8M918 284h8M822 292h8M718 300h80M822 300h8M910 300h8M702 308h120M694 316h24M686 324h24M894 324h8M686 332h16M886 332h8M686 340h16M686 348h16M870 348h8M686 356h16M870 356h8M686 364h16M862 364h8M686 372h16M846 372h8M686 380h16M838 380h8M686 388h16M814 388h24M694 396h16M694 404h16M798 404h8M694 412h24M782 412h16M694 420h40M774 420h16M694 428h64M766 428h16M702 436h72M702 444h64M702 452h56M702 460h48M702 468h40M694 476h48M566 484h184M566 492h176M566 500h176M566 508h176M566 516h176M566 524h168M566 532h168M566 540h168M566 548h160M566 556h160M566 564h160M558 572h168M558 580h168M550 588h176M550 596h176M550 604h168M550 612h168M550 620h160M550 628h152M550 636h96M550 644h80M566 652h48M550 660h8M566 660h40M558 668h32M566 676h16"/>
<path stroke="#0a0a0a" d="M830 212h8M942 212h8M822 220h8M822 228h8M822 236h8M942 236h8M822 244h8M822 252h8M934 252h8M822 260h8M934 260h8M822 268h8M822 276h8M926 276h8M694 292h128M918 292h8M686 300h32M798 300h24M678 308h24M670 316h24M902 316h8M670 324h16M670 332h16M670 340h16M670 348h16M670 356h16M670 364h16M670 372h16M854 372h8M670 380h16M846 380h8M670 388h16M838 388h8M670 396h24M814 396h8M670 404h24M806 404h8M678 412h16M798 412h8M678 420h16M678 428h16M678 436h24M774 436h8M678 444h24M766 444h8M686 452h16M758 452h8M686 460h16M750 460h8M686 468h16M742 468h8M662 476h32M742 476h8M558 484h8M558 492h8M742 492h8M558 500h8M742 500h8M558 508h8M558 516h8M558 524h8M734 524h8M558 532h8M558 540h8M558 548h8M726 548h8M558 556h8M726 556h8M550 564h16M550 572h8M550 580h8M718 604h8M710 620h8M702 628h8M646 636h48M630 644h8M614 652h8M606 660h8M550 668h8M590 668h8M558 676h8M582 676h8"/>
<path stroke="#0c0c0c" d="M550 212h248M814 212h16M550 220h256M814 220h8M950 220h8M550 228h272M950 228h8M550 236h272M550 244h256M814 244h8M942 244h8M550 252h248M814 252h8M550 260h248M814 260h8M550 268h248M814 268h8M550 276h256M814 276h8M550 284h272M926 284h8M550 292h144M550 300h136M550 308h128M550 316h120M550 324h120M550 332h120M894 332h8M550 340h120M878 340h8M550 348h120M550 356h120M550 364h120M870 364h8M550 372h120M550 380h120M550 388h120M550 396h120M822 396h16M550 404h120M550 412h128M550 420h128M790 420h8M550 428h128M782 428h8M550 436h128M550 444h128M550 452h136M550 460h88M654 460h32M550 468h136M750 468h8M550 476h112M550 484h8M550 492h8M550 500h8M550 508h8M742 508h8M550 516h8M550 524h8M550 532h8M734 532h8M550 540h8M550 548h8M550 556h8M726 564h8M726 572h8M718 612h8M710 628h8M694 636h8M622 652h8M598 668h8M566 684h8"/>
<path stroke="#0e0e0e" d="M798 212h16M806 220h8M806 244h8M798 252h16M942 252h8M798 260h16M798 268h16M934 268h8M806 276h8M910 308h8M862 372h8M814 404h8M806 412h8M774 444h8M766 452h8M638 460h16M758 460h8M750 476h8M742 516h8M734 540h8M726 580h8M726 588h8M718 620h8M702 636h8M638 644h8M614 660h8"/>
<path stroke="#101010" d="M950 212h8M950 236h8M902 324h8M886 340h8M838 396h8M798 420h8M750 484h8M726 596h8M710 636h8M646 644h48M590 676h8M558 684h8M574 684h8"/>
<path stroke="#121212" d="M934 276h8M918 300h8M854 380h8M846 388h8M822 404h16M790 428h8M782 436h8M758 468h8M750 492h8M742 524h8M734 548h8M726 604h8M718 628h8M694 644h16M630 652h8M606 668h8M550 676h8"/>
<path stroke="#141414" d="M950 244h8M942 260h8M926 292h8M894 340h8M878 348h8M870 372h8M766 460h8M734 556h8"/>
<path stroke="#161616" d="M958 220h8M878 356h8M814 412h8M774 452h8M758 476h8M742 532h8M710 644h8M686 652h24M622 660h8M582 684h8"/>
<path stroke="#181818" d="M958 228h8M910 316h8M902 332h8M886 348h8M806 420h8M750 500h8M734 564h8M726 612h8M718 636h8M638 652h8M678 652h8M598 676h8"/>
<path stroke="#1a1a1a" d="M878 364h8M862 380h8M782 444h8M750 508h8M750 516h8M670 652h8M710 652h8M694 660h16M550 684h8"/>
<path stroke="#1c1c1c" d="M950 252h8M942 268h8M934 284h8M902 340h8M894 348h8M886 356h8M822 412h8M798 428h8M766 468h8M758 484h8M742 540h8M734 572h8M726 620h8M718 644h8M686 660h8M710 660h8M614 668h8M694 668h16M558 692h16"/>
<path stroke="#1e1e1e" d="M958 212h8M958 236h8M910 324h8M854 388h8M846 396h8M838 404h8M790 436h8M734 580h8M646 652h24M630 660h8M678 660h8M686 668h8M710 668h8M686 676h24"/>
<path stroke="#202020" d="M918 308h8M910 332h16M910 340h8M750 524h8M734 588h8M726 628h8M718 652h8M678 668h8M710 676h8M590 684h8M686 684h32M574 692h8"/>
<path stroke="#222222" d="M918 340h16M894 356h8M886 364h8M878 372h8M830 412h8M774 460h8M758 492h8M742 548h8M734 596h8M718 660h8M622 668h8M718 668h8M678 676h8M718 676h8M718 684h8M702 692h24M774 724h16"/>
<path stroke="#242424" d="M926 300h8M934 340h8M902 348h8M934 348h8M894 364h8M870 380h8M814 420h8M766 476h8M726 636h8M670 660h8M606 676h8M726 684h8M694 692h8M726 692h8M710 700h32M766 716h24M766 724h8M774 732h16"/>
<path stroke="#262626" d="M950 260h8M942 276h8M926 332h8M942 348h8M894 372h8M782 452h8M758 516h8M750 532h8M742 556h8M734 604h8M638 660h8M726 676h8M678 684h8M686 692h8M734 692h8M702 700h8M742 700h8M726 708h40M750 716h16M758 724h8M758 732h16M766 740h24"/>
<path stroke="#282828" d="M958 244h8M934 292h8M918 324h8M942 340h8M926 348h8M950 348h8M886 372h8M806 428h8M758 508h8M726 644h8M670 668h8M726 668h8M734 684h8M550 692h8M742 692h8M750 700h8M718 708h8M766 708h16M742 716h8M790 716h8M750 724h8M790 724h8M758 740h8M782 748h8"/>
<path stroke="#2a2a2a" d="M918 316h8M950 356h16M894 380h8M790 444h8M758 500h8M758 524h8M734 612h8M726 652h8M662 660h8M726 660h8M630 668h8M670 676h8M582 692h8M678 692h8M694 700h8M758 700h8M710 708h8M782 708h8M734 716h8M750 732h8M790 732h8M766 748h16M774 756h16"/>
<path stroke="#2c2c2c" d="M934 332h8M950 340h8M910 348h8M902 356h8M942 356h8M966 356h8M878 380h8M902 388h8M766 516h8M742 564h8M646 660h16M614 676h8M734 676h8M670 684h8M750 692h8M790 708h8M726 716h8M742 724h8M790 740h8M758 748h8M790 748h8M766 756h8"/>
<path stroke="#2e2e2e" d="M918 348h8M958 348h8M966 364h24M862 388h8M902 396h8M822 420h8M798 436h8M774 468h8M766 484h8M766 524h8M750 540h8M734 620h8M638 668h8M598 684h8M742 684h8M686 700h8M766 700h8M702 708h8M798 708h8M790 756h8M774 764h24"/>
<path stroke="#303030" d="M966 212h8M966 220h8M950 268h8M942 284h8M926 308h8M926 324h8M942 332h8M934 356h8M982 372h16M886 380h8M902 380h8M894 388h8M766 508h8M758 532h8M742 572h8M662 668h8M662 676h8M854 676h8M854 684h16M670 692h8M566 700h8M774 700h8M718 716h8M798 716h8M750 740h8M766 764h8M774 772h24"/>
<path stroke="#323232" d="M958 252h8M926 316h8M974 356h8M902 364h8M958 364h8M902 372h8M998 372h8M998 380h16M902 404h8M910 412h8M910 420h8M734 628h8M854 660h8M646 668h8M734 668h8M846 668h16M622 676h8M846 676h8M862 676h8M662 684h8M838 684h16M870 684h8M758 692h8M830 692h48M782 700h8M798 700h32M870 700h16M694 708h8M806 708h8M878 708h8M734 724h8M742 732h8M758 756h8M766 772h8M774 780h24M566 788h8M782 788h16M566 796h8"/>
<path stroke="#343434" d="M966 228h8M934 300h8M934 324h8M950 332h8M958 340h8M974 372h8M990 380h8M1006 388h16M854 396h8M1014 396h8M846 404h8M910 404h8M782 460h8M766 532h8M750 548h8M742 580h8M734 636h8M854 652h8M734 660h8M846 660h8M654 668h8M862 668h8M630 676h8M654 676h8M742 676h8M750 684h8M822 692h8M878 692h8M558 700h8M574 700h8M678 700h8M790 700h8M830 700h40M886 700h8M870 708h8M886 708h8M710 716h8M878 716h24M798 724h8M878 724h16M566 772h8M566 780h8M558 788h8M774 788h8M774 796h24"/>
<path stroke="#363636" d="M966 348h8M950 364h8M990 364h8M982 380h8M886 388h8M998 388h8M894 396h8M1006 396h8M1022 396h8M902 412h8M910 428h8M766 492h8M742 588h8M734 644h8M734 652h8M846 652h8M862 660h8M638 676h16M838 676h8M870 676h8M830 684h8M590 692h8M766 692h8M814 692h8M814 708h8M862 708h8M894 708h8M870 716h8M726 724h8M894 724h8M886 732h16M886 740h8M750 748h8M886 748h16M886 756h16M758 764h8M574 772h8M798 772h8M558 780h8M574 780h8M766 780h8M798 780h8M558 796h8M774 804h24M782 812h16"/>
<path stroke="#383838" d="M942 292h8M934 308h8M934 316h8M942 324h8M878 388h8M990 388h8M910 396h8M894 404h8M1014 404h24M902 420h8M814 428h8M774 476h8M758 540h8M742 596h8M846 644h16M838 668h8M654 684h8M878 684h8M662 692h8M886 692h8M894 700h8M686 708h8M822 708h8M854 708h8M702 716h8M806 716h8M862 716h8M902 716h8M870 724h8M902 724h8M878 732h8M894 740h8M798 764h8M886 764h8M574 788h8M766 788h8M798 788h8M766 796h8M798 796h8M566 804h8M774 812h8M774 820h24"/>
<path stroke="#3a3a3a" d="M966 236h8M950 276h8M958 332h8M966 372h8M870 388h8M886 396h8M838 412h8M894 412h8M1030 412h8M910 436h8M790 452h8M766 500h8M774 516h8M742 604h8M862 652h8M838 660h8M742 668h8M870 668h8M606 684h8M758 684h8M822 684h8M774 692h8M806 692h8M670 700h8M846 708h8M902 708h8M734 732h8M798 732h8M902 732h8M742 740h8M878 740h8M750 756h8M798 756h8M894 764h8M558 772h8M758 772h8M886 772h8M582 788h8M574 796h8M558 804h8M766 804h8M798 804h8M766 812h8M774 828h24M790 836h8"/>
<path stroke="#3c3c3c" d="M958 260h8M950 324h8M966 340h8M910 356h8M926 356h8M942 364h8M974 380h8M1014 380h8M1022 388h8M998 396h8M902 428h8M918 428h8M806 436h8M774 508h8M774 524h8M766 540h8M750 556h8M846 636h16M838 644h8M838 652h8M750 676h8M830 676h8M646 684h8M782 692h8M798 692h8M830 708h16M694 716h8M718 724h8M910 724h8M798 740h8M902 740h8M798 748h8M878 748h8M894 772h8M582 780h8M758 780h8M886 780h8M798 812h8M766 820h8M798 820h8M774 836h16M790 844h8"/>
<path stroke="#3e3e3e" d="M942 300h8M942 308h8M942 316h8M982 356h8M1006 372h8M982 388h8M886 404h8M1022 412h8M1038 412h8M830 420h8M894 420h8M1038 420h8M918 436h8M742 612h8M862 644h8M814 684h8M790 692h8M550 700h8M582 700h8M678 708h8M854 716h8M910 716h8M862 724h8M870 732h8M910 732h8M902 748h8M878 756h8M566 764h8M750 764h8M550 788h8M550 796h8M582 796h8M574 804h8M558 812h16M766 828h8M798 828h8M798 836h8M774 844h16"/>
<path stroke="#404040" d="M974 348h8M958 372h8M910 388h8M878 396h8M1030 396h8M1006 404h8M918 420h8M894 428h8M1046 428h8M902 436h8M798 444h8M910 444h16M774 532h8M758 548h8M750 564h8M742 620h8M742 660h8M870 660h8M830 668h8M878 676h8M766 684h8M886 684h8M654 692h8M894 692h8M902 700h8M814 716h8M710 724h8M918 724h8M910 740h8M742 748h8M894 780h8M758 788h8M886 788h8M758 796h8M550 804h8M766 836h8M798 844h8"/>
<path stroke="#424242" d="M950 284h8M950 316h8M958 324h8M910 364h8M934 364h8M998 364h8M910 372h8M910 380h8M886 412h8M1046 436h16M782 468h8M774 484h8M742 628h8M838 636h8M862 636h8M822 676h8M614 684h8M638 684h8M910 708h8M686 716h8M702 724h8M806 724h8M726 732h8M918 732h8M734 740h8M902 756h8M878 764h8M750 772h8M550 780h8M806 780h8M806 788h8M894 788h8M758 804h8M550 812h8M758 812h8M766 844h8M774 852h32"/>
<path stroke="#444444" d="M966 244h8M966 332h8M918 356h8M966 380h8M990 396h8M1030 420h8M822 428h8M1038 428h8M902 444h8M1054 444h16M910 452h16M774 500h8M750 572h8M854 628h8M742 636h8M742 644h8M742 652h8M830 660h8M750 668h8M758 676h8M806 684h8M598 692h8M662 700h8M566 708h8M846 716h8M918 716h8M926 732h8M870 740h8M918 740h8M742 756h8M574 764h8M582 772h8M806 772h8M878 772h8M806 796h8M886 796h8M582 804h8M574 812h8M550 820h16M758 820h8M766 852h8"/>
<path stroke="#464646" d="M974 212h8M958 268h8M950 292h8M950 300h8M950 308h8M950 372h8M974 388h8M918 412h8M1014 412h8M886 420h8M1046 420h8M894 436h8M1046 444h8M1054 452h8M766 548h8M758 556h8M846 628h8M862 628h8M830 652h8M870 652h8M622 684h16M774 684h8M670 708h8M694 724h8M854 724h8M926 724h8M718 732h8M862 732h8M742 764h8M750 780h8M878 780h8M590 796h8M894 796h8M590 804h8M806 804h8M886 804h8M566 820h8M550 828h8M758 828h8M774 860h32"/>
<path stroke="#484848" d="M974 340h8M990 356h8M862 396h16M878 404h8M1038 404h8M1062 436h8M902 452h8M1062 452h8M790 460h8M910 460h16M774 540h8M750 580h8M878 604h8M830 644h8M878 668h8M782 684h24M902 692h8M574 708h8M678 716h8M822 716h8M926 740h8M734 748h8M910 748h8M558 764h8M806 764h8M902 764h8M750 788h8M878 788h8M750 796h8M806 812h8M558 828h8M758 836h8M1102 956h16M1102 964h16M1102 972h16"/>
<path stroke="#4a4a4a" d="M974 220h8M958 316h8M966 324h8M982 348h8M918 364h16M886 428h8M1054 428h8M894 444h8M1070 444h8M926 452h8M1070 452h8M926 460h8M1062 460h8M774 492h8M750 588h8M878 612h8M870 644h8M750 660h8M822 668h8M766 676h8M814 676h8M894 684h8M646 692h8M910 700h8M558 708h8M918 708h8M830 716h16M926 716h8M686 724h8M710 732h8M934 732h8M726 740h8M550 772h8M742 772h8M590 788h8M878 796h8M750 804h8M894 804h8M582 812h16M750 812h8M886 812h8M574 820h8M806 820h8M606 828h16M806 828h8M606 836h16M806 836h8M758 844h8M806 844h8M806 852h8M766 860h8M806 860h8M782 868h24M1102 924h16M1102 932h16M1094 940h24M1094 948h24M1094 956h8M1094 964h8M1118 964h8M1094 972h8M1118 972h8"/>
<path stroke="#4c4c4c" d="M966 252h8M958 276h8M958 308h8M918 372h8M942 372h8M958 380h8M982 396h8M854 404h8M918 404h8M998 404h8M814 436h8M798 452h8M918 468h8M782 476h8M782 508h8M782 516h8M758 564h8M750 596h8M878 596h8M886 604h8M870 612h8M862 620h16M838 628h8M870 628h8M758 668h8M886 676h8M590 700h8M934 724h8M702 732h8M870 748h8M734 756h8M742 780h8M598 812h8M598 820h16M750 820h8M566 828h8M598 828h8M750 828h8M550 836h8M598 836h8M622 836h8M758 852h8M806 868h8M1094 908h24M1094 916h32M1086 924h16M1118 924h16M1086 932h16M1118 932h16M1086 940h8M1118 940h16M1086 948h8M1118 948h16M1118 956h16M1126 964h8M1086 972h8M1126 972h8"/>
<path stroke="#4e4e4e" d="M974 228h8M958 300h8M974 332h8M1014 372h8M918 380h8M1022 380h8M966 388h8M878 412h8M806 444h8M926 444h8M902 460h8M1054 460h8M1070 460h8M910 468h8M926 468h8M782 524h8M886 596h8M750 604h8M870 604h8M830 636h8M870 636h8M806 676h8M654 700h8M806 732h8M918 748h8M806 756h8M734 764h8M902 772h8M742 788h8M878 804h8M894 812h8M582 820h16M886 820h8M574 828h8M590 828h8M622 828h8M558 836h8M590 836h8M630 836h8M750 836h8M614 844h16M774 868h8M798 876h8M1094 900h24M1086 908h8M1118 908h8M1086 916h8M1126 916h8M1086 956h8M1086 964h8"/>
<path stroke="#505050" d="M958 284h8M958 292h8M1006 364h8M918 388h8M1030 388h8M918 396h8M1046 412h8M1022 420h8M886 436h8M926 436h8M1038 436h8M1046 452h8M1070 468h8M782 500h8M750 612h8M886 612h8M750 620h8M854 620h8M878 620h8M750 652h8M822 660h8M774 676h8M910 692h8M918 700h8M662 708h8M814 724h8M694 732h8M942 732h8M718 740h8M934 740h8M726 748h8M734 772h8M742 796h8M598 804h8M742 804h8M742 812h8M742 820h8M582 828h8M566 836h8M582 836h8M606 844h8M630 844h8M750 844h8M790 876h8M806 876h8M1086 900h8M1118 900h8M1078 908h8M1126 908h8M1078 916h8M1078 924h8M1078 932h8M1078 940h8M1078 948h8"/>
<path stroke="#525252" d="M966 316h8M982 340h8M926 372h16M870 404h8M846 412h8M878 420h8M1070 436h8M894 452h8M1078 452h8M1078 460h8M790 468h8M918 476h8M782 532h8M766 556h8M758 572h8M870 596h8M862 612h8M750 628h8M750 636h8M750 644h8M878 660h8M814 668h8M798 676h8M606 692h8M550 708h8M926 708h8M670 716h8M934 716h8M678 724h8M846 724h8M942 724h8M854 732h8M710 740h8M862 740h8M566 756h8M726 756h8M590 780h8M734 780h8M902 780h8M878 812h8M614 820h8M894 820h8M742 828h8M886 828h8M574 836h8M742 836h8M758 860h8M766 868h8M798 884h16M1094 892h24M1126 900h8M1078 956h8M1078 964h8M1078 972h8"/>
<path stroke="#545454" d="M974 236h8M966 260h8M966 300h8M966 308h8M974 324h8M990 348h8M998 356h8M950 380h8M974 396h8M1006 412h8M926 428h8M1062 428h8M934 460h8M1062 468h8M782 484h8M782 492h8M878 588h8M846 620h8M822 652h8M758 660h8M766 668h8M782 676h16M902 684h8M638 692h8M582 708h8M686 732h8M806 740h8M718 748h8M806 748h8M974 748h8M870 756h8M910 756h8M974 756h8M582 764h8M726 764h8M734 788h8M606 812h8M630 828h8M598 844h8M750 852h8M814 868h8M782 876h8M814 876h8M814 884h8M806 892h16M1086 892h8M806 900h16M1078 900h8M814 908h8M1070 916h8M1070 924h8M1070 932h8"/>
<path stroke="#565656" d="M982 212h8M926 380h8M870 412h8M838 420h8M926 420h8M1054 420h8M878 428h8M1078 444h8M934 452h8M798 460h8M902 468h8M934 468h8M1078 468h8M1126 468h8M910 476h8M926 476h8M774 548h8M758 580h8M886 588h8M830 628h8M878 628h8M822 644h8M894 676h8M950 732h8M702 740h8M942 740h8M926 748h8M982 748h8M982 756h8M550 764h8M726 772h8M814 780h8M814 788h8M902 788h8M734 796h8M814 796h8M734 804h8M734 812h8M734 820h8M878 820h8M734 828h8M894 828h8M638 836h8M550 844h8M590 844h8M742 844h8M814 860h8M758 868h8M798 892h8M1118 892h8M806 908h8M1070 908h8M814 916h8M1070 940h8M1070 948h8"/>
<path stroke="#585858" d="M966 268h8M966 292h8M982 332h8M934 380h16M926 388h8M958 388h8M1038 396h8M862 404h8M990 404h8M830 428h8M1030 428h8M886 444h8M1086 460h8M1126 460h8M1086 468h8M1110 468h16M1110 476h16M758 588h8M862 604h8M886 620h8M758 652h8M814 660h8M774 668h8M806 668h8M886 668h8M918 692h8M926 700h8M934 708h8M566 716h8M942 716h8M950 724h8M694 740h8M950 740h8M974 740h8M710 748h8M966 748h8M574 756h8M718 756h8M974 764h16M814 772h8M726 780h8M814 804h8M734 836h8M886 836h16M558 844h32M638 844h8M750 860h8M790 884h8M1094 884h24M1126 892h8M822 900h8M822 908h8M814 924h8M1070 956h8M1070 964h8M1070 972h8"/>
<path stroke="#5a5a5a" d="M982 220h8M974 316h8M1014 364h8M1022 372h8M926 396h8M926 404h8M926 412h8M870 420h8M822 436h8M934 444h8M806 452h8M894 460h8M1046 460h8M1094 468h16M790 476h8M1102 476h8M1126 476h8M870 588h8M894 596h8M894 604h8M854 612h8M838 620h8M878 652h8M766 660h8M910 684h8M614 692h8M822 724h8M958 732h8M958 740h16M982 740h8M558 756h8M966 756h8M718 764h8M718 772h8M726 788h8M598 796h8M726 796h8M902 796h8M734 844h8M630 852h8M742 852h8M814 852h8M774 876h8M822 892h8M1078 892h8M1070 900h8M806 916h8M822 916h8M1062 916h8M1062 924h8M814 932h8M1062 932h8"/>
<path stroke="#5c5c5c" d="M974 244h8M966 276h8M966 284h8M990 340h8M1006 356h8M934 388h8M966 396h8M854 412h16M814 444h8M1038 444h8M1086 452h8M1118 460h8M1078 476h8M782 540h8M766 564h8M758 596h8M758 604h8M758 612h8M758 636h8M822 636h8M878 636h8M758 644h8M782 668h24M630 692h8M926 692h8M598 700h8M646 700h8M934 700h8M574 716h8M950 716h8M838 724h8M958 724h8M678 732h8M966 732h8M702 748h8M934 748h8M990 748h8M710 756h8M990 756h8M814 764h8M870 764h8M974 772h16M718 780h8M726 804h8M902 804h8M814 812h8M622 820h8M878 828h8M814 844h8M886 844h16M622 852h8M742 860h8M750 868h8M758 876h16M1086 884h8M1118 884h8M798 900h8M1062 908h8M822 924h8M1062 940h8"/>
<path stroke="#5e5e5e" d="M982 228h8M974 292h8M974 300h8M974 308h8M982 324h8M998 348h8M1030 380h8M950 388h8M1014 420h8M870 428h8M878 436h8M934 436h8M1126 452h8M1094 460h8M1054 468h8M1086 476h16M1110 484h16M790 500h8M790 508h8M790 516h8M878 580h16M894 588h8M862 596h8M758 620h8M758 628h8M878 644h8M814 652h8M806 660h8M902 676h8M918 684h8M622 692h8M654 708h8M942 708h8M558 716h8M662 716h8M670 724h8M830 724h8M966 724h8M814 732h8M974 732h8M686 740h8M958 748h8M710 764h8M990 764h8M590 772h8M718 788h8M726 812h8M726 820h8M814 820h8M638 828h8M726 828h8M814 836h8M614 852h8M734 852h8M750 876h8M822 884h8M1126 884h8M806 924h8M822 932h8M814 940h8M1062 948h8M1062 956h8M1062 964h8M1062 972h8"/>
<path stroke="#606060" d="M974 252h8M942 388h8M934 396h8M1046 404h8M862 420h8M934 428h8M1070 428h8M1078 436h8M886 452h8M1102 460h16M798 468h8M902 476h8M934 476h8M1070 476h8M790 484h8M1126 484h8M790 492h8M846 612h8M830 620h8M822 628h8M814 644h8M766 652h8M774 660h8M926 684h8M934 692h8M958 716h8M846 732h8M982 732h8M854 740h8M990 740h8M694 748h8M862 748h8M702 756h8M966 764h8M710 772h8M974 780h16M718 796h8M902 812h8M814 828h8M726 836h8M886 852h16M742 868h8M1102 876h16M1078 884h8M1070 892h8M1062 900h8M822 940h8"/>
<path stroke="#626262" d="M990 212h8M974 284h8M982 292h8M982 316h8M990 332h8M1022 348h24M1022 364h8M982 404h8M846 420h8M934 420h8M942 452h8M1118 452h8M942 460h8M790 524h8M870 580h8M894 612h8M766 644h8M806 652h8M782 660h24M934 684h8M942 700h8M590 708h8M950 708h8M974 724h8M942 748h16M918 756h8M910 764h8M870 772h8M990 772h8M710 780h8M710 788h8M606 804h8M718 804h8M614 812h8M902 820h8M878 836h8M550 852h64M638 852h8M734 860h8M894 860h8M742 876h8M822 876h8M1094 876h8M750 884h16M1054 916h8M1054 924h8M1054 932h8"/>
<path stroke="#646464" d="M982 236h8M974 260h8M1046 348h8M1014 356h8M942 396h8M958 396h8M934 404h8M934 412h8M998 412h8M1062 420h8M862 428h8M1086 444h8M806 460h8M894 468h8M942 468h8M1102 484h8M774 556h8M894 580h8M862 588h8M854 604h8M886 628h8M766 636h8M814 636h8M774 652h8M886 660h8M894 668h8M910 676h8M942 692h8M966 716h8M982 724h8M990 732h8M566 748h8M814 756h8M958 756h8M702 764h8M870 780h8M990 780h8M870 788h8M982 788h8M870 796h8M902 828h8M726 844h8M886 860h8M1086 876h8M1118 876h8M742 884h8M782 884h8M742 892h16M790 892h8M798 908h8M1054 908h8M806 932h8M1054 940h8M1054 948h8M1054 964h8M1054 972h8"/>
<path stroke="#666666" d="M990 220h8M974 268h8M974 276h8M982 284h8M982 300h8M982 308h8M990 324h8M998 340h8M1006 348h8M1054 348h8M1022 356h8M1030 372h8M1038 388h8M950 396h8M1054 412h8M854 420h8M838 428h8M870 436h8M878 444h8M942 444h8M1126 444h8M814 452h8M1038 452h8M1094 452h8M798 476h8M766 572h8M878 572h16M838 612h8M766 628h8M774 644h8M806 644h8M782 652h24M918 676h8M942 684h8M950 700h8M958 708h8M550 716h8M582 716h8M974 716h8M990 724h8M678 740h8M814 740h8M686 748h8M998 748h8M582 756h8M694 756h8M702 772h8M966 772h8M598 788h8M974 788h8M710 796h8M870 804h8M718 812h8M630 820h8M646 836h8M902 836h8M902 844h8M734 868h8M1070 884h8M1062 892h8M742 900h16M814 948h8M1054 956h8"/>
<path stroke="#686868" d="M982 244h8M990 284h8M1030 356h8M1030 364h8M942 404h8M974 404h8M1022 428h8M830 436h8M1030 436h8M822 444h8M1046 468h8M918 484h8M1110 492h8M790 532h8M782 548h8M870 572h8M894 572h8M766 620h8M822 620h8M814 628h8M774 636h8M806 636h8M782 644h24M926 676h24M950 692h8M638 700h8M982 716h8M566 724h8M670 732h8M998 732h8M998 740h8M814 748h8M550 756h8M998 756h8M702 780h8M702 788h8M718 820h8M646 844h8M878 844h8M726 852h8M902 852h8M630 860h8M902 860h8M822 868h8M894 868h8M1126 876h8M766 884h8M758 892h8M1054 900h8M806 940h8M822 948h8"/>
<path stroke="#6a6a6a" d="M998 212h8M990 228h8M982 252h8M990 292h8M990 316h8M998 332h8M1014 348h8M1062 348h8M1038 356h8M950 404h8M942 412h8M854 428h8M862 436h8M942 436h8M1102 452h16M886 460h8M806 468h8M1062 476h8M798 484h8M910 484h8M1086 484h16M1118 492h16M878 564h24M862 580h8M902 588h8M854 596h8M846 604h8M830 612h8M894 620h8M774 628h8M782 636h24M950 684h8M606 700h8M966 708h8M990 716h8M998 724h8M822 732h8M574 748h8M694 764h8M998 764h8M990 788h8M982 796h8M710 804h8M870 812h8M638 860h8M886 868h8M1102 868h16M734 876h8M1078 876h8M742 908h16M1046 916h8M1046 924h8M1046 932h8M1046 940h8"/>
<path stroke="#6c6c6c" d="M990 236h8M982 260h8M982 268h8M982 276h8M1006 340h8M1038 340h24M1046 356h8M1046 396h8M958 404h16M846 428h8M942 428h8M1118 444h8M1038 460h8M926 484h8M1078 484h8M798 492h8M798 500h8M934 548h8M894 556h16M902 564h8M902 572h8M766 580h8M902 580h8M766 612h8M814 620h8M806 628h8M886 636h8M886 652h8M902 668h8M958 700h8M974 708h8M998 716h8M558 724h8M574 724h8M662 724h8M838 732h8M558 748h8M686 756h8M926 756h8M590 764h8M694 772h8M998 772h8M702 796h8M974 796h8M718 828h8M902 868h8M1094 868h8M894 876h8M734 884h8M774 884h8M830 908h8M1046 908h8M830 916h8M830 924h8M830 932h8M1046 948h8M1046 956h8M822 964h8M1046 964h8M822 972h8M1046 972h8"/>
<path stroke="#6e6e6e" d="M998 220h8M990 244h8M990 276h8M990 300h8M990 308h8M998 324h8M1022 340h16M1070 348h8M1054 356h8M1038 364h8M1038 380h8M942 420h8M1078 428h8M854 436h8M1086 436h8M1094 444h8M814 460h8M894 476h8M942 476h8M1102 492h8M926 540h16M894 548h40M942 548h8M886 556h8M910 556h16M870 564h8M910 564h8M862 572h8M766 588h8M854 588h8M902 596h8M766 604h8M838 604h8M822 612h8M782 628h24M934 668h16M950 676h8M646 708h8M982 708h8M654 716h8M1006 724h8M830 732h8M1006 732h8M846 740h8M1006 740h8M678 748h8M862 756h8M950 756h8M958 764h8M910 772h8M694 780h8M966 780h8M990 796h8M982 804h8M646 828h8M878 852h8M558 860h32M622 860h8M726 860h8M822 860h8M1086 868h8M1118 868h8M902 876h8M1062 884h8M734 892h8M1054 892h8M830 900h8M742 916h8M798 916h8M830 940h8M814 956h16M814 964h8M814 972h8"/>
<path stroke="#707070" d="M1006 212h8M998 228h8M990 252h8M990 260h8M990 268h8M998 316h8M1014 340h8M1062 340h8M1038 372h8M950 412h8M1006 420h8M838 436h16M1126 436h8M830 444h8M870 444h8M822 452h8M806 476h8M902 484h8M798 508h8M902 540h24M942 540h8M886 548h8M878 556h8M926 556h16M918 564h8M766 596h8M846 596h8M830 604h8M774 620h8M886 644h8M894 660h8M910 668h24M958 692h8M966 700h8M990 708h16M1006 716h8M566 740h8M854 748h8M1006 748h8M822 780h8M998 780h8M694 788h8M710 812h8M638 820h8M870 820h8M718 836h8M646 852h8M550 860h8M590 860h8M1126 868h8M1070 876h8M734 900h8M758 900h8M1046 900h8M750 916h8M806 948h8"/>
<path stroke="#727272" d="M1006 220h8M998 236h8M998 244h8M1006 332h8M1062 356h8M1054 404h8M1070 420h8M862 444h8M878 452h8M1054 476h8M1110 500h8M790 540h8M894 540h8M774 564h8M910 572h8M854 580h8M838 596h8M814 612h8M806 620h8M950 668h8M958 684h8M614 700h8M630 700h8M598 708h8M1006 708h8M566 732h8M670 740h8M822 740h8M934 756h16M686 764h8M822 764h8M822 772h8M598 780h8M822 788h8M822 796h8M702 804h8M990 804h8M622 812h8M982 812h8M822 852h8M598 860h8M726 868h8M886 876h8M894 884h16M830 892h8M1038 916h8M1038 924h8M1038 932h8M1038 940h8M1038 948h8M1038 956h8M1038 964h8M1038 972h8"/>
<path stroke="#747474" d="M1014 212h8M1006 228h8M998 252h8M998 260h8M998 284h8M998 292h8M998 308h8M1006 324h8M1070 340h8M1078 348h8M1046 364h8M958 412h8M990 412h8M1118 436h8M854 444h8M1030 444h8M1038 468h8M934 484h8M1070 484h8M1094 492h8M798 516h8M878 548h8M870 556h8M942 556h8M862 564h8M926 564h8M846 588h8M830 596h8M822 604h8M902 604h8M798 620h8M894 628h8M1014 692h8M1006 700h8M550 724h8M574 732h8M574 740h8M822 748h8M822 756h8M1006 756h8M686 772h8M998 788h8M606 796h8M694 796h8M822 804h8M974 804h8M718 844h8M606 860h16M1078 868h8M1054 884h8M766 892h8M1046 892h8M790 900h8M734 908h8M1038 908h8M742 924h8M830 948h8"/>
<path stroke="#767676" d="M1022 212h8M1014 220h8M1006 236h8M998 268h8M998 276h8M998 300h8M1014 332h8M1046 388h8M1062 412h8M950 420h8M1014 428h8M838 444h16M1102 444h16M950 452h8M950 460h8M814 468h8M886 468h8M806 484h8M1086 492h8M1102 500h8M1118 500h8M886 540h8M950 540h8M950 548h8M854 572h8M918 572h8M910 580h8M838 588h8M782 620h16M942 660h8M958 676h8M1014 684h8M1006 692h8M622 700h8M974 700h8M998 700h8M1014 700h8M590 716h8M582 724h8M558 732h8M558 740h8M830 740h8M550 748h8M582 748h8M678 756h8M686 780h8M910 780h8M966 788h8M998 796h8M990 812h8M710 820h8M822 844h8M878 860h8M1094 860h24M638 868h8M1062 876h8M782 892h8M1038 900h8M758 908h8M750 924h8M798 924h8"/>
<path stroke="#787878" d="M1022 220h8M1014 228h8M1006 244h8M1006 316h8M1022 332h8M1070 356h8M1054 364h8M1046 372h8M1094 436h8M950 444h8M830 452h8M822 460h8M1046 476h8M1126 500h8M910 532h32M782 556h8M934 564h8M846 580h8M830 588h8M822 596h8M806 612h8M902 660h8M934 660h8M950 660h8M966 692h8M982 700h16M1014 708h8M1014 716h8M1014 724h8M662 732h8M1014 732h8M838 740h8M1014 740h8M918 764h8M1006 764h8M686 788h8M614 804h8M822 812h8M870 828h8M718 852h8M646 860h8M1118 860h8M630 868h8M726 876h8M830 884h8M1030 924h8M1030 932h8M1030 940h8M1030 948h8M806 956h8M1030 956h8M830 964h8M1030 964h8M830 972h8M1030 972h8"/>
<path stroke="#7a7a7a" d="M1030 212h8M1022 228h8M1014 236h8M1006 252h8M1006 308h8M1014 324h8M1030 332h8M1078 340h8M1126 348h8M1046 380h8M966 412h8M982 412h8M950 428h8M1086 428h8M1126 428h8M950 436h8M1022 436h8M1030 452h8M950 468h8M806 492h8M1078 492h8M1094 500h8M798 524h8M894 532h16M942 532h8M862 556h8M854 564h8M846 572h8M838 580h8M910 588h8M814 604h8M774 612h8M894 652h8M958 668h8M1014 676h8M1006 684h8M670 748h8M846 748h8M862 764h8M958 772h8M910 788h8M998 804h8M974 812h8M822 836h8M1086 860h8M1126 860h8M566 868h16M1070 868h8M1046 884h8M1038 892h8M1030 908h8M734 916h8M758 916h8M1030 916h8M750 932h8M830 956h8M806 964h8M806 972h8"/>
<path stroke="#7c7c7c" d="M1030 220h8M1022 236h8M1014 244h8M1006 260h8M1006 268h8M1006 300h8M1014 316h8M1038 332h16M1086 348h8M1062 364h8M1054 396h8M974 412h8M958 420h8M838 452h40M814 476h8M894 484h8M1062 484h8M1086 500h8M878 540h8M870 548h8M926 572h8M894 636h8M910 660h24M958 660h8M1022 684h8M998 692h8M1022 692h8M638 708h8M654 724h8M830 748h8M1014 748h8M590 756h8M678 764h8M950 764h8M598 772h8M1006 772h8M910 796h8M702 812h8M822 820h8M558 868h8M582 868h8M910 868h8M1054 876h8M726 884h8M886 884h8M774 892h8M742 932h8M798 932h8"/>
<path stroke="#7e7e7e" d="M1038 212h8M1030 228h8M1014 252h8M1006 276h8M1006 284h8M1006 292h8M1022 324h8M1086 340h8M1054 372h8M1078 420h8M1102 436h16M878 460h8M1030 460h8M1038 476h8M910 492h16M806 500h8M1102 508h16M790 548h8M950 556h8M838 572h8M830 580h8M822 588h8M798 612h8M902 612h8M894 644h8M966 684h8M974 692h8M550 732h8M582 732h8M550 740h8M582 740h8M678 772h8M1006 780h8M686 796h8M966 796h8M694 804h8M910 804h8M630 812h8M998 812h8M646 820h8M982 820h8M710 828h8M822 828h8M718 860h8M910 860h8M1078 860h8M550 868h8M878 868h8M1062 868h8M830 876h8M910 876h8M894 892h8M766 900h8M1030 900h8M758 924h8M1022 924h8M1022 932h8M1022 940h8M1022 948h8M1022 956h8M1022 964h8M1022 972h8"/>
<path stroke="#818181" d="M1038 220h8M1030 236h8M1022 244h8M1014 260h8M1014 308h8M1022 316h8M1030 324h8M1094 340h8M1094 348h8M1118 348h8M1054 380h8M1054 388h8M1118 428h8M830 460h8M822 468h8M886 476h8M942 484h8M902 492h8M798 532h8M886 532h8M846 564h8M942 564h8M774 572h8M918 580h8M814 596h8M774 604h8M950 652h8M1006 676h8M1022 676h8M1022 700h8M606 708h8M646 716h8M838 748h8M854 756h8M910 812h8M990 820h8M870 836h8M910 852h8M1102 852h16M590 868h8M1046 876h8M910 884h8M1038 884h8M726 892h8M902 892h8M1030 892h8M790 908h8M1022 916h8M750 940h8M798 940h8M750 964h8M750 972h8"/>
<path stroke="#838383" d="M1046 212h8M1038 228h8M1030 244h8M1022 252h8M1014 268h8M1014 300h8M1054 332h8M1078 356h8M1062 404h8M958 428h8M1094 428h8M1030 468h8M814 484h8M926 492h8M1070 492h8M806 508h8M1094 508h8M950 532h8M854 556h8M910 596h8M806 604h8M782 612h16M942 652h8M958 652h8M966 676h8M990 692h8M1022 708h8M662 740h8M670 756h8M830 756h8M1014 756h8M678 780h8M1006 788h8M910 820h8M910 828h8M654 836h8M910 836h8M910 844h8M1094 852h8M1118 852h8M1070 860h8M1022 908h8M734 924h8M758 932h8M1014 940h8M750 948h8M798 948h8M1014 948h8M1014 956h8M758 964h8M758 972h8"/>
<path stroke="#858585" d="M1038 236h8M1030 252h8M1022 260h8M1014 276h8M1014 284h8M1014 292h8M1022 308h8M1030 316h8M1038 324h8M1126 340h8M1126 356h8M1062 372h8M1070 412h8M966 420h8M998 420h8M1022 444h8M838 460h8M950 476h8M1054 484h8M1078 500h8M1118 508h8M862 548h8M774 596h8M902 620h8M902 652h8M934 652h8M966 668h8M998 684h8M982 692h8M598 716h8M1022 716h8M590 724h8M1022 724h8M1022 732h8M926 764h8M862 772h8M958 780h8M606 788h8M678 788h8M1006 796h8M966 804h8M654 844h8M1086 852h8M1126 852h8M598 868h8M622 868h8M646 868h8M718 868h8M830 868h8M1054 868h8M1038 876h8M1030 884h8M1022 900h8M1014 924h8M1014 932h8M742 940h8M758 940h8M750 956h16M1014 964h8M1014 972h8"/>
<path stroke="#878787" d="M1046 220h8M1038 244h8M1030 260h8M1022 268h8M1022 300h8M1070 364h8M1022 452h8M846 460h16M1086 508h8M894 524h24M870 540h8M958 548h8M838 564h8M830 572h8M934 572h8M774 580h8M822 580h8M774 588h8M902 628h8M966 652h8M966 660h8M1014 668h8M630 708h8M1022 740h8M590 748h8M598 764h8M942 764h8M1014 764h8M862 780h8M862 788h8M862 796h8M862 804h8M1006 804h8M638 812h8M974 820h8M998 820h8M654 828h8M710 836h8M870 844h8M1078 852h8M1062 860h8M606 868h8M1046 868h8M1030 876h8M1022 892h8M726 900h8M782 900h8M766 908h8M1014 916h8M758 948h8M798 956h8M742 972h8"/>
<path stroke="#898989" d="M1054 212h8M1046 228h8M1038 252h8M1030 268h8M1022 276h8M1022 284h8M1022 292h8M1030 300h8M1030 308h8M1038 316h8M1046 324h8M1062 332h8M1102 348h16M1062 380h8M1086 420h8M1126 420h8M1102 428h16M1014 436h8M862 460h16M830 468h8M878 468h8M822 476h8M1030 476h8M1046 484h8M814 492h8M894 492h8M1126 508h8M918 524h16M878 532h8M958 540h8M782 564h8M782 604h8M798 604h8M950 644h24M910 652h8M926 652h8M974 684h8M614 708h8M654 732h8M662 748h8M838 756h16M670 764h8M830 764h8M934 764h8M678 796h8M702 820h8M614 868h8M1038 868h8M566 876h16M878 876h8M1022 884h8M774 900h8M1014 900h8M1014 908h8M838 932h8M838 940h8M1006 940h8M742 948h8M1006 948h8M1006 956h8M742 964h8M798 964h8M1006 964h8M1006 972h8"/>
<path stroke="#8b8b8b" d="M1046 236h8M1038 260h8M1030 276h8M1030 284h8M1030 292h8M1102 340h8M1118 340h8M1062 396h8M1006 428h8M958 436h8M1022 460h8M886 484h8M934 492h8M806 516h8M934 524h8M798 540h8M846 556h8M926 580h8M814 588h8M918 588h8M790 604h8M902 636h8M902 644h8M918 652h8M1006 668h8M622 708h8M1022 748h8M918 772h8M950 772h8M1014 772h8M622 804h8M686 804h8M862 812h8M1006 812h8M654 852h8M1070 852h8M830 860h8M1054 860h8M1030 868h8M558 876h8M582 876h8M718 876h8M1022 876h8M1014 884h8M886 892h8M910 892h8M1014 892h8M766 916h8M790 916h8M838 916h8M838 924h8M1006 924h8M734 932h8M1006 932h8M742 956h8M766 964h8M766 972h8M798 972h8"/>
<path stroke="#8d8d8d" d="M1054 220h8M1046 244h8M1038 268h8M1038 276h8M1038 284h8M1038 292h8M1038 300h8M1038 308h8M1118 356h8M1062 388h8M1118 420h8M966 428h8M838 468h8M1038 484h8M886 524h8M790 556h8M950 564h8M806 596h8M942 644h8M974 644h8M998 676h8M990 684h8M638 716h8M646 724h8M590 732h8M590 740h8M670 772h8M830 772h8M958 788h8M614 796h8M694 812h8M966 812h8M654 820h8M982 828h16M710 844h8M1086 844h48M870 852h8M1062 852h8M1038 860h16M1022 868h8M550 876h8M1014 876h8M894 900h16M726 908h8M838 908h8M1006 916h8M766 924h8M998 940h8M766 948h8M838 948h8M998 948h8M766 956h8M838 956h8M998 956h8M838 964h8M838 972h8"/>
<path stroke="#8f8f8f" d="M1054 228h8M1046 252h8M1046 260h8M1046 316h8M1086 356h8M958 444h8M846 468h8M1022 468h8M1062 492h8M902 500h16M942 524h8M854 548h8M1102 580h8M910 604h8M958 636h16M974 652h8M1022 668h8M974 676h8M982 684h8M606 716h8M854 764h8M606 780h8M670 780h8M1014 780h8M646 812h8M1006 820h8M998 828h8M1078 844h8M1054 852h8M1022 860h16M1014 868h8M590 876h8M1006 884h8M1006 892h8M1006 900h8M1006 908h8M790 924h8M766 932h8M998 932h8M766 940h8M998 964h8M998 972h8"/>
<path stroke="#919191" d="M1062 212h8M1046 268h8M1046 276h8M1054 324h8M1078 412h8M974 420h8M1094 420h8M1014 444h8M854 468h8M830 476h8M822 484h8M1030 484h8M814 500h8M918 500h8M1070 500h8M902 516h8M958 556h8M942 572h8M1102 572h16M1094 580h8M1110 580h8M782 596h8M974 636h8M910 644h8M934 644h8M974 660h8M974 668h8M1030 684h8M1030 692h8M598 724h8M654 740h8M598 756h8M662 756h8M1022 756h8M830 780h8M670 788h8M830 788h8M1014 788h8M862 820h8M1070 844h8M710 852h8M830 852h8M1030 852h24M1014 860h8M1006 868h8M638 876h8M1006 876h8M718 884h8M838 900h8M774 908h16M998 916h8M998 924h8M790 932h8M734 940h8M990 948h8M990 956h8"/>
<path stroke="#939393" d="M1062 220h8M1054 236h8M1046 284h8M1046 292h8M1046 300h8M1046 308h8M1070 332h8M1110 340h8M1070 372h8M1070 404h8M990 420h8M1110 420h8M958 452h8M870 468h8M878 476h8M950 484h8M894 500h8M1078 508h8M894 516h8M910 516h8M1102 516h16M806 524h8M862 540h8M830 564h8M1094 572h8M1086 580h8M1086 588h24M798 596h8M950 636h8M982 644h8M998 668h8M838 764h8M670 796h8M830 796h8M1014 796h8M830 804h8M702 828h8M974 828h8M1006 828h8M1046 844h24M1014 852h16M654 860h8M1006 860h8M598 876h8M630 876h8M998 876h8M998 884h8M998 892h8M998 900h8M998 908h8M726 916h8M774 916h8M990 932h8M774 940h8M790 940h8M990 940h8M774 948h8M790 948h8M774 956h8M790 956h8M774 964h8M990 964h8M734 972h8M990 972h8"/>
<path stroke="#959595" d="M1054 244h8M1054 252h8M1078 364h8M1102 420h8M966 436h8M1014 452h8M862 468h8M1022 476h8M886 492h8M942 492h8M902 508h8M1094 516h8M870 532h8M798 548h8M838 556h8M782 572h8M822 572h8M1118 580h8M790 596h8M918 596h8M910 636h8M982 636h8M918 644h16M982 652h8M990 676h8M1030 676h8M1030 700h8M614 716h8M630 716h8M646 732h8M846 764h8M1022 764h8M918 780h8M958 796h8M678 804h8M1014 804h8M654 812h8M1014 812h8M966 820h8M1014 820h8M990 836h24M1086 836h48M830 844h8M1006 844h40M1006 852h8M870 860h8M998 860h8M998 868h8M918 876h8M878 884h8M838 892h8M910 900h8M782 916h8M774 924h16M990 924h8M774 932h16M782 940h8M982 940h8M734 948h8M782 948h8M982 948h8M782 956h8M982 956h8M734 964h8M790 964h8M774 972h8"/>
<path stroke="#979797" d="M1070 212h8M1062 228h8M1054 260h8M1110 356h8M982 420h8M958 460h8M838 476h8M1030 492h8M1054 492h8M926 500h8M894 508h8M910 508h8M886 516h8M918 516h8M878 524h8M958 532h8M1118 572h8M814 580h8M934 580h8M782 588h8M806 588h8M1110 588h8M910 628h8M966 628h16M1006 660h8M982 676h8M1030 708h8M622 716h8M1030 716h8M638 724h8M1030 724h8M598 732h8M1030 732h8M598 748h8M654 748h8M662 764h8M606 772h8M942 772h8M950 780h8M630 804h8M830 812h8M862 828h8M1014 828h8M830 836h8M982 836h8M1014 836h72M998 844h8M998 852h8M710 860h8M918 868h8M606 876h8M622 876h8M990 876h8M558 884h24M918 884h8M990 884h8M718 892h8M902 908h8M990 908h8M990 916h8M982 932h8M734 956h8M782 964h8M982 964h8M790 972h8M982 972h8"/>
<path stroke="#999999" d="M1070 220h8M1062 236h8M1054 268h8M1054 316h8M1094 356h8M1126 412h8M846 476h8M878 484h8M1038 492h8M814 508h8M926 516h8M1118 516h8M950 524h8M846 548h8M790 564h8M1086 572h8M782 580h8M1078 580h8M1126 580h8M926 588h8M1078 588h8M1094 596h8M910 612h8M910 620h8M958 628h8M942 636h8M982 660h8M998 660h8M1014 660h8M982 668h8M606 724h8M598 740h8M1030 740h8M838 772h8M854 772h8M926 772h8M1022 772h8M918 788h8M958 804h8M694 820h8M830 820h8M830 828h8M1022 828h8M1126 828h8M990 844h8M990 852h8M918 860h8M990 860h8M990 868h8M614 876h8M550 884h8M582 884h8M838 884h8M918 892h8M990 892h8M886 900h8M990 900h8M894 908h8M982 916h8M726 924h8M982 924h8M974 932h8M974 940h8M974 948h8M974 956h8M974 964h8M782 972h8M974 972h8"/>
<path stroke="#9b9b9b" d="M1078 212h8M1054 276h8M1062 324h8M1102 356h8M1126 364h8M1070 380h8M1086 412h8M1014 460h8M958 468h8M854 476h8M1022 484h8M822 492h8M1022 492h8M1046 492h8M886 500h8M1030 500h8M918 508h8M806 532h8M1102 564h16M1126 572h8M1086 596h8M990 652h8M990 660h8M990 668h8M646 740h8M662 772h8M934 772h8M838 780h8M1022 780h8M854 796h8M918 796h8M670 804h8M854 804h8M918 804h8M686 812h8M918 812h8M1022 820h8M966 828h8M1030 828h96M974 836h8M982 844h8M918 852h8M710 868h8M870 868h8M646 876h8M590 884h8M982 900h8M910 908h8M982 908h8M974 924h8M966 932h8M966 940h8M966 948h8M966 956h8M966 964h8M966 972h8"/>
<path stroke="#9d9d9d" d="M1078 220h8M1070 228h8M1062 244h8M1054 284h8M1054 292h8M1054 308h8M1078 332h8M1126 332h8M1070 396h8M1118 412h8M862 476h16M830 484h8M934 500h8M1022 500h8M886 508h8M934 516h8M1086 516h8M1126 516h8M790 588h16M1118 588h8M1102 596h8M950 628h8M982 628h8M918 636h8M934 636h8M990 644h8M614 724h24M606 732h8M638 732h8M1030 748h8M606 764h8M846 772h8M662 780h8M854 780h8M614 788h8M662 788h8M838 788h8M854 788h8M1022 788h8M662 796h8M838 796h8M1022 796h8M638 804h8M662 804h8M838 804h8M1022 804h8M958 812h8M1022 812h8M918 820h8M702 836h8M862 836h8M918 844h8M982 852h8M982 860h8M982 868h8M838 876h8M982 876h8M598 884h8M982 884h8M982 892h8M718 900h8M918 900h8M974 908h8M902 916h8M974 916h8M966 924h8M958 932h8M958 940h8M958 948h8M958 956h8M958 964h8M958 972h8"/>
<path stroke="#9f9f9f" d="M1126 212h8M1126 220h8M1126 228h8M1062 252h8M1054 300h8M1070 388h8M1006 436h8M878 492h8M926 508h8M854 540h8M798 556h8M1094 564h8M918 604h8M926 636h8M614 732h24M606 740h8M606 748h8M606 756h8M654 756h8M846 780h8M846 788h8M950 788h8M622 796h8M846 796h8M646 804h16M846 804h8M662 812h8M838 812h8M854 812h8M662 820h8M1030 820h16M1086 820h48M662 828h8M918 828h8M918 836h8M966 836h8M974 844h8M974 852h8M654 868h8M710 876h8M974 892h8M974 900h8M918 908h8M966 908h8M910 916h8M966 916h8M958 924h8M726 932h8M950 932h8M950 940h8M950 948h8M950 956h8M950 964h8M950 972h8"/>
<path stroke="#a1a1a1" d="M1086 212h8M1118 212h8M1086 220h8M1118 220h8M1078 228h8M1070 236h8M1126 236h8M1062 260h8M974 428h8M1062 500h8M878 516h8M1118 564h8M790 572h8M950 572h8M1078 572h8M790 580h8M1126 588h8M1078 596h8M1110 596h8M918 620h8M966 620h8M918 628h8M990 636h8M998 652h8M614 740h16M638 740h8M1030 756h8M942 780h8M846 812h8M1030 812h8M958 820h8M1046 820h40M662 836h8M862 844h8M974 860h8M838 868h8M974 868h8M974 876h8M606 884h8M974 884h8M878 892h8M966 900h8M958 908h8M894 916h8M918 916h8M950 916h16M910 924h8M942 924h16M934 932h16M934 940h16M934 948h16M934 956h16M934 964h16M934 972h16"/>
<path stroke="#a3a3a3" d="M1094 212h8M1094 220h8M1110 220h8M1118 228h8M1062 268h8M1086 332h8M1118 332h8M1078 404h8M1094 412h8M1110 412h8M998 428h8M1014 468h8M958 476h8M862 484h16M878 500h8M1070 508h8M814 516h8M942 516h8M870 524h8M862 532h8M966 548h8M830 556h8M822 564h8M958 564h8M814 572h8M806 580h8M942 580h8M926 596h8M918 612h8M974 620h8M942 628h8M1022 660h8M1030 668h8M630 740h8M614 748h8M646 748h8M1030 764h8M926 780h8M950 796h8M1030 796h8M1030 804h8M678 812h8M1038 812h16M1078 812h56M838 820h8M854 820h8M958 828h8M966 844h8M966 852h8M838 860h8M870 876h8M926 876h8M614 884h8M926 884h8M966 884h8M558 892h32M926 892h8M966 892h8M926 900h8M958 900h8M718 908h8M886 908h8M926 908h32M926 916h24M902 924h8M918 924h24M918 932h16M726 940h8M926 940h8M846 948h8M926 948h8M846 956h8M926 956h8M726 964h8M846 964h8M926 964h8M726 972h8M846 972h8M918 972h16"/>
<path stroke="#a5a5a5" d="M1102 212h16M1102 220h8M1086 228h16M1110 228h8M1078 236h8M1118 236h8M1070 244h8M1126 244h8M1086 364h8M1118 364h8M1102 412h8M854 484h8M950 492h8M1038 500h8M878 508h8M934 508h8M806 540h8M1086 564h8M1126 564h8M798 580h8M1070 580h8M934 588h8M1070 588h8M958 620h8M926 628h16M1006 652h8M622 748h8M654 764h8M1030 772h8M934 780h8M1030 780h8M1030 788h8M654 796h8M1038 804h8M1110 804h24M670 812h8M1054 812h24M846 820h8M694 828h8M838 828h8M838 836h8M958 836h8M662 844h8M702 844h8M838 844h8M838 852h8M966 860h8M926 868h8M966 868h8M966 876h8M622 884h8M710 884h8M550 892h8M590 892h8M958 892h8M934 900h24M894 924h8M846 932h8M910 932h8M846 940h8M918 940h8M918 948h8M918 956h8M910 964h16M910 972h8"/>
<path stroke="#a7a7a7" d="M1102 228h8M1070 252h8M1062 276h8M1062 316h8M1094 332h8M1078 372h8M966 444h8M838 484h8M870 492h8M822 500h8M942 500h8M1102 524h16M966 540h8M838 548h8M798 564h8M1118 596h8M926 604h8M926 612h8M926 620h8M950 620h8M982 620h8M998 644h8M630 748h16M614 756h8M614 780h8M926 788h8M942 788h8M926 796h8M1038 796h8M926 804h8M950 804h8M1046 804h64M686 820h8M846 828h16M958 844h8M862 852h8M958 852h8M926 860h8M958 876h8M630 884h16M934 884h8M958 884h8M598 892h8M934 892h24M902 932h8M910 940h8M726 948h8M910 948h8M726 956h8M910 956h8M902 964h8M902 972h8"/>
<path stroke="#a9a9a9" d="M1086 236h8M1110 236h8M1118 244h8M1126 252h8M1070 324h8M846 484h8M1054 500h8M846 540h8M798 572h8M1094 604h8M990 628h8M646 756h8M654 772h8M654 788h8M934 788h8M1038 788h8M630 796h8M646 796h8M934 796h16M1046 796h8M1102 796h24M926 812h8M950 812h8M926 820h8M950 820h8M846 836h16M926 844h8M926 852h8M862 860h8M958 860h8M934 868h32M934 876h24M942 884h16M606 892h8M718 916h8M886 916h8M846 924h8M902 940h8M902 948h8M902 956h8M894 972h8"/>
<path stroke="#ababab" d="M1094 236h16M1078 244h8M1062 284h8M1102 332h16M1126 404h8M1006 444h8M862 492h8M870 500h8M1046 500h8M1078 516h8M814 524h8M958 524h8M1118 524h8M806 548h8M966 556h8M1102 556h16M806 572h8M1126 596h8M1086 604h8M934 612h8M934 620h16M1038 716h8M1038 724h8M1038 732h8M1038 740h8M614 764h8M614 772h8M654 780h8M1038 780h8M638 796h8M1054 796h16M1078 796h24M1126 796h8M934 804h16M934 812h16M670 820h8M926 828h8M950 828h8M926 836h8M950 836h8M846 844h16M950 844h8M662 852h8M702 852h8M934 852h24M934 860h24M870 884h8M614 892h8M710 892h8M878 900h8M846 916h8M894 932h8M894 964h8"/>
<path stroke="#adadad" d="M1110 244h8M1070 260h8M1062 292h8M1062 300h8M1062 308h8M1014 476h8M942 508h8M1030 508h8M870 516h8M950 516h8M1094 524h8M1126 524h8M1070 572h8M934 596h8M1070 596h8M934 604h8M1102 604h8M966 612h8M1038 684h8M1038 692h8M1038 700h8M1038 708h8M1038 748h8M622 756h8M1038 772h8M622 788h8M1046 788h8M1102 788h24M1070 796h8M678 820h8M934 820h16M934 828h16M934 836h16M934 844h16M846 852h16M862 868h8M654 876h8M646 884h8M622 892h8M550 900h56M846 900h8M846 908h8M718 924h8M886 924h8M894 940h8M894 948h8M894 956h8"/>
<path stroke="#afafaf" d="M1086 244h24M1078 252h8M1118 252h8M1126 260h8M1110 364h8M1078 396h8M1086 404h8M1118 404h8M974 436h8M958 484h8M830 492h8M870 508h8M1022 508h8M854 532h8M806 556h8M1094 556h8M1118 556h8M806 564h16M1078 564h8M942 588h8M942 604h8M942 612h24M974 612h8M998 636h8M1014 652h8M630 756h16M1038 756h8M646 764h8M1038 764h8M1054 788h8M1094 788h8M1126 788h8M670 828h8M702 860h8M846 860h16M846 868h8M846 876h8M846 884h8M846 892h8M606 900h8M710 900h8M886 964h8M886 972h8"/>
<path stroke="#b1b1b1" d="M1070 268h8M1094 364h8M1078 380h8M982 428h16M1006 452h8M1014 484h8M1014 492h8M862 524h8M822 556h8M1126 556h8M950 580h8M942 596h8M1078 604h8M1110 604h8M1038 676h8M622 764h8M1046 780h8M1102 780h24M646 788h8M1062 788h32M686 828h8M694 836h8M662 860h8M702 868h8M854 868h8M862 876h8M630 892h8M614 900h8M598 908h8M878 908h8M718 932h8M886 932h8M854 956h8M886 956h8M718 972h8"/>
<path stroke="#b3b3b3" d="M1110 252h8M1126 372h8M1078 388h8M966 452h8M822 508h8M1062 508h8M814 532h8M966 532h8M830 548h8M958 572h8M950 604h8M990 620h8M646 772h8M1046 772h8M1110 772h8M622 780h8M1054 780h8M1094 780h8M1126 780h8M630 788h8M678 828h8M854 876h8M870 892h8M622 900h8M550 908h48M606 908h16M710 908h8M718 940h8M886 940h8M854 948h8M886 948h8M718 964h8M854 964h8M854 972h8"/>
<path stroke="#b5b5b5" d="M1086 252h8M1102 252h8M1078 260h8M1118 260h8M1126 268h8M1070 276h8M1078 324h8M1102 364h8M1094 404h8M1110 404h8M854 492h8M862 500h8M950 500h8M1014 500h8M1038 508h8M1086 524h8M1110 532h8M838 540h8M814 556h8M1062 580h8M950 588h8M950 596h8M958 604h8M982 612h8M1006 644h8M630 764h16M1110 764h8M622 772h8M1102 772h8M1118 772h8M646 780h8M1062 780h8M1086 780h8M638 788h8M670 836h8M702 876h8M854 884h16M638 892h8M590 916h32M878 916h8M606 924h8M854 940h8M718 948h8M606 956h8M718 956h8M878 964h8M878 972h8"/>
<path stroke="#b7b7b7" d="M1094 252h8M1070 316h8M1126 324h8M1086 372h8M1102 404h8M1006 460h8M1070 516h8M1102 532h8M1110 548h8M1086 556h8M1062 588h8M966 604h8M1118 604h8M1030 660h8M1110 748h8M1110 756h8M1046 764h8M1102 764h8M1118 764h8M1054 772h8M1094 772h8M1126 772h8M1070 780h16M662 868h8M854 892h8M630 900h8M870 900h8M622 908h8M550 916h40M622 916h8M710 916h8M550 924h8M590 924h16M614 924h8M878 924h8M550 932h8M590 932h32M854 932h8M878 932h8M550 940h8M582 940h48M878 940h8M550 948h80M862 948h8M878 948h8M550 956h56M614 956h16M878 956h8M550 964h8M582 964h48M550 972h8M590 972h32"/>
<path stroke="#b9b9b9" d="M1118 372h8M998 436h8M966 460h8M950 508h8M862 516h8M846 532h8M1118 532h8M814 540h8M814 548h8M1102 548h8M966 564h8M1070 564h8M958 596h8M1126 604h8M1110 740h8M1046 748h8M1102 748h8M1046 756h8M1102 756h8M1118 756h8M1126 764h8M630 772h16M1062 772h8M1086 772h8M630 780h16M686 836h8M694 844h8M654 884h8M702 884h8M862 892h8M854 900h8M854 916h8M558 924h32M622 924h8M854 924h8M558 932h32M622 932h8M862 932h16M558 940h24M862 940h16M630 948h8M870 948h8M630 956h8M862 956h16M558 964h24M862 964h16M558 972h32M622 972h8M870 972h8"/>
<path stroke="#bbbbbb" d="M1110 260h8M1118 268h8M1070 284h8M1086 396h8M1126 396h8M862 508h8M1046 508h16M822 516h8M1126 532h8M822 548h8M1118 548h8M1062 572h8M958 588h8M974 604h8M998 628h8M1022 652h8M1046 732h8M1110 732h8M1046 740h8M1102 740h8M1118 748h8M1126 756h8M1054 764h16M1094 764h8M1070 772h16M678 836h8M670 844h8M646 892h8M638 900h8M862 900h8M630 908h8M854 908h8M870 908h8M630 916h8M870 916h8M630 924h8M710 924h8M862 924h16M630 932h8M630 940h8M630 964h8M630 972h8M862 972h8"/>
<path stroke="#bdbdbd" d="M1086 260h8M1078 268h8M1126 276h8M1070 292h8M1070 300h8M1070 308h8M1118 324h8M838 492h8M958 492h8M830 500h8M854 524h8M1094 532h8M1102 540h16M1094 548h8M1126 548h8M958 580h8M966 596h8M1070 604h8M1094 612h16M1038 668h8M1046 724h8M1110 724h8M1102 732h8M1118 740h8M1126 748h8M1054 756h8M1094 756h8M1070 764h24M694 852h8M702 892h8M862 908h8M862 916h8M710 932h8M638 940h8M638 948h8M638 956h8M638 964h8M710 972h8"/>
<path stroke="#bfbfbf" d="M1094 260h16M1086 324h8M1094 372h8M1110 372h8M1086 380h8M1118 396h8M966 468h8M846 492h8M958 516h8M822 524h8M1078 524h8M830 540h8M1118 540h8M1078 556h8M1062 596h8M1086 612h8M1046 716h8M1118 732h8M1126 740h8M1094 748h8M1062 756h16M1086 756h8M670 852h8M662 876h8M702 900h8M638 908h8M638 932h8M710 940h8M710 964h8M638 972h8"/>
<path stroke="#c1c1c1" d="M1102 372h8M1126 380h8M1086 388h8M1094 396h8M1006 468h8M838 532h8M822 540h8M1126 540h8M966 588h8M1110 612h8M1110 716h8M1102 724h8M1118 724h8M1126 732h8M1094 740h8M1054 748h8M1078 756h8M678 844h16M694 860h8M646 900h8M638 916h8M638 924h8M646 948h8M710 948h8M646 956h8M710 956h8"/>
<path stroke="#c3c3c3" d="M1110 268h8M1078 276h8M1118 276h8M1078 316h8M1094 324h8M1094 380h16M1094 388h16M1126 388h8M1102 396h16M974 444h8M854 500h8M854 516h8M1062 516h8M846 524h8M966 524h8M822 532h8M1086 532h8M1094 540h8M1086 548h8M966 572h8M966 580h8M982 604h8M990 612h8M1078 612h8M1118 612h8M1006 636h8M1014 644h8M1046 708h8M1110 708h8M1102 716h8M1094 732h8M1054 740h8M1062 748h32M670 860h8M694 868h8M654 892h8M702 908h8M646 940h8M646 964h8M646 972h8"/>
<path stroke="#c5c5c5" d="M1086 268h8M1102 324h16M1110 380h16M1118 388h8M982 436h8M830 508h8M1014 508h8M1030 516h8M830 532h8M974 548h8M1062 564h8M974 596h8M1126 612h8M1046 700h8M1110 700h8M1118 716h8M1126 724h8M1086 740h8M678 852h16M662 884h8M646 908h8M702 916h8M646 932h8"/>
<path stroke="#c7c7c7" d="M1094 268h16M1078 284h8M1126 284h8M1110 388h8M990 436h8M998 444h8M966 476h8M958 500h8M854 508h8M1038 516h8M838 524h8M1070 524h8M1086 540h8M974 556h8M1070 556h8M1054 580h8M998 620h8M1046 692h8M1110 692h8M1102 708h8M1118 708h8M1126 716h8M1094 724h8M1054 732h8M1062 740h8M670 868h8M694 876h8M646 916h8M646 924h8M702 924h8M654 948h8M654 956h8M654 964h8M702 972h8"/>
<path stroke="#c9c9c9" d="M1110 276h8M1078 292h8M1078 308h8M1006 476h8M838 500h8M958 508h8M830 516h8M846 516h8M1022 516h8M1054 516h8M830 524h8M974 540h8M1078 548h8M974 588h8M1054 588h8M1062 604h8M1030 652h8M1046 684h8M1110 684h8M1102 700h8M1086 732h8M1070 740h16M678 860h16M694 884h8M654 900h8M702 932h8M654 940h8M702 940h8M702 948h8M702 956h8M702 964h8M654 972h8"/>
<path stroke="#cbcbcb" d="M1086 276h8M1118 284h8M1078 300h8M1086 316h8M846 500h8M838 508h16M838 516h8M1046 516h8M1078 532h8M974 564h8M1054 572h8M974 580h8M1070 612h8M1094 620h24M1038 660h8M1102 684h8M1102 692h8M1118 700h8M1126 708h8M1094 716h8M1054 724h8M1062 732h8M678 868h16M670 876h8M662 892h8M694 892h8M654 932h8"/>
<path stroke="#cdcdcd" d="M1094 276h16M1126 316h8M998 452h8M966 484h8M1006 484h8M1062 524h8M1078 540h8M974 572h8M1086 620h8M1118 620h8M1046 676h8M1102 676h16M1118 692h8M1094 708h8M1054 716h8M1086 724h8M1070 732h16M694 900h8M654 908h8M654 916h8M654 924h8M662 964h8M662 972h8"/>
<path stroke="#cfcfcf" d="M1086 284h8M1110 284h8M1086 292h8M1126 292h8M1086 308h8M1094 316h8M1118 316h8M974 452h8M1006 492h8M1070 532h8M1070 548h8M1062 556h8M1054 564h8M982 596h8M1054 596h8M1078 620h8M1126 620h8M1006 628h8M1110 668h8M1094 700h8M1126 700h8M678 876h16M670 884h8M686 884h8M662 900h8M694 908h8M694 916h8M694 924h8M662 940h8M662 948h8M662 956h8M694 964h8M694 972h8"/>
<path stroke="#d1d1d1" d="M1094 284h16M1094 292h16M1118 292h8M1086 300h16M998 460h8M1054 524h8M1070 540h8M990 604h8M1102 628h8M1022 644h8M1110 660h8M1102 668h8M1118 684h8M1094 692h8M1054 708h8M1086 716h8M1062 724h8M1078 724h8M678 884h8M670 892h8M686 892h8M662 932h8M694 932h8M694 940h8M694 948h8M694 956h8M670 972h8"/>
<path stroke="#d3d3d3" d="M1110 292h8M1102 300h8M1094 308h8M1102 316h16M982 444h8M966 492h8M1006 500h8M966 516h8M1038 524h16M974 532h8M1062 532h8M1062 548h8M998 612h8M1062 612h8M1094 628h8M1110 628h24M1014 636h8M1102 660h8M1046 668h8M1118 676h8M1094 684h8M1126 692h8M1070 724h8M678 892h8M670 900h24M662 908h8M686 908h8M662 916h8M662 924h8M686 940h8M670 948h8M686 948h8M670 956h8M686 956h8M670 964h24M678 972h16"/>
<path stroke="#d5d5d5" d="M1110 300h24M1102 308h8M1126 308h8M990 444h8M974 460h8M998 468h8M1030 524h8M1054 532h8M1062 540h8M1054 556h8M1054 604h8M1070 620h8M1086 628h8M1102 636h16M1110 644h8M1102 652h16M1118 668h8M1094 676h8M1126 684h8M1054 700h8M1086 708h8M1062 716h8M1078 716h8M670 908h16M670 916h24M670 924h24M670 932h24M670 940h16M678 948h8M678 956h8"/>
<path stroke="#d7d7d7" d="M1110 308h16M974 468h8M1046 532h8M1054 540h8M1054 548h8M1046 572h8M1046 580h8M982 588h8M1078 628h8M1094 636h8M1118 636h16M1102 644h8M1038 652h8M1094 660h8M1118 660h8M1094 668h8M1126 676h8M1054 692h8M1086 700h8M1062 708h8M1070 716h8"/>
<path stroke="#d9d9d9" d="M990 452h8M974 476h8M998 476h8M966 500h8M1014 516h8M1038 532h8M1046 540h8M1046 564h8M982 580h8M1046 588h8M1006 620h8M1086 636h8M1030 644h8M1094 644h8M1118 644h16M1094 652h8M1118 652h8M1046 660h8M1126 668h8M1054 684h8M1086 692h8M1070 708h16"/>
<path stroke="#dbdbdb" d="M982 452h8M990 460h8M990 468h8M990 476h8M974 484h8M998 484h8M966 508h8M1022 524h8M1030 532h8M1038 540h8M1046 548h8M1046 556h8M1054 612h8M1062 620h8M1070 628h8M1078 636h8M1086 644h8M1126 652h8M1126 660h8M1086 676h8M1086 684h8M1062 700h24"/>
<path stroke="#dddddd" d="M982 460h8M982 468h8M982 476h8M982 484h16M1006 508h8M974 524h8M982 572h8M990 596h8M1046 596h8M1014 628h8M1062 628h8M1022 636h8M1070 636h8M1038 644h8M1046 652h8M1086 652h8M1086 660h8M1086 668h8M1054 676h8M1062 692h24"/>
<path stroke="#dfdfdf" d="M974 492h8M998 492h8M1038 548h8M1046 604h8M1054 620h8M1062 636h8M1046 644h8M1078 644h8M1054 660h8M1054 668h8M1078 676h8M1062 684h24"/>
<path stroke="#e1e1e1" d="M982 492h16M998 500h8M1030 540h8M1038 556h8M982 564h8M998 604h8M1046 612h8M1046 620h8M1038 628h24M1030 636h32M1054 644h24M1054 652h32M1062 660h24M1062 668h24M1062 676h16"/>
<path stroke="#e3e3e3" d="M974 500h8M990 500h8M1022 532h8M1030 548h8M982 556h8M1038 564h8M1038 572h8M1038 580h8M1006 612h8M1014 620h8M1030 620h16M1022 628h16"/>
<path stroke="#e5e5e5" d="M982 500h8M974 508h8M974 516h8M1014 524h8M982 548h8M990 588h8M1038 588h8M1030 612h16M1022 620h8"/>
<path stroke="#e7e7e7" d="M990 508h16M1006 516h8M982 540h8M1022 540h8M1030 556h8M1038 596h8M1038 604h8M1022 612h8"/>
<path stroke="#e9e9e9" d="M982 508h8M1030 604h8M1014 612h8"/>
<path stroke="#ebebeb" d="M982 516h8M982 532h8M1022 548h8M1030 564h8M990 580h8M998 596h8"/>
<path stroke="#ededed" d="M990 516h16M982 524h8M1014 532h8M1030 572h8M1030 588h8M1030 596h8M1006 604h8M1022 604h8"/>
<path stroke="#efefef" d="M1006 524h8M1030 580h8M1014 604h8"/>
<path stroke="#f1f1f1" d="M990 524h16M1014 540h8M1022 556h8M990 572h8M998 588h8M1022 596h8"/>
<path stroke="#f3f3f3" d="M1006 532h8M1014 548h8M990 564h8M1022 588h8M1006 596h16"/>
<path stroke="#f5f5f5" d="M990 532h16M990 540h8M1006 540h8M990 548h8M990 556h8M1022 564h8M1022 572h8M1022 580h8"/>
<path stroke="#f7f7f7" d="M998 540h8M1014 556h8M998 580h8M1006 588h16"/>
<path stroke="#f9f9f9" d="M998 548h16M1006 580h16"/>
<path stroke="#fbfbfb" d="M998 556h16M998 564h8M1014 564h8M998 572h8M1014 572h8"/>
<path stroke="#fdfdfd" d="M1006 564h8M1006 572h8"/>
</g></g>
<g transform="translate(794.6 367)">
<path d="M5.6 5.9l6.6 6.4" stroke="#000000" stroke-width="4.8" stroke-linecap="butt"/>
<path d="M7.4 7.7l4.2 4" stroke="#ffffff" stroke-width="2" stroke-linecap="butt"/>
<circle cx="0" cy="0" r="7.8" fill="#ffffff" stroke="#000000" stroke-width="1.6"/>
<path d="M0 -5.3v10.6M-5.3 0h10.6" stroke="#000000" stroke-width="2.7"/>
</g>

</svg></div>
</body></html>
